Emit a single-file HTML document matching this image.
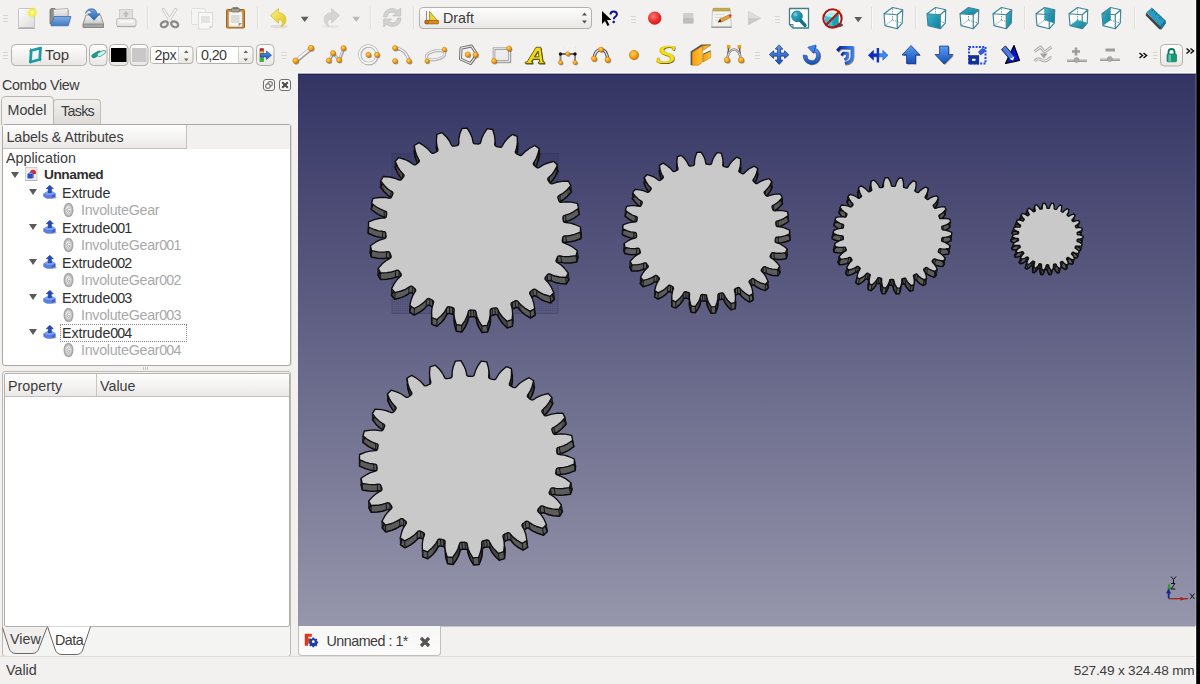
<!DOCTYPE html>
<html>
<head>
<meta charset="utf-8">
<title>FreeCAD</title>
<style>
*{box-sizing:border-box;margin:0;padding:0}
html,body{width:1200px;height:684px;overflow:hidden;background:#f2f1f0}
body{position:relative;font-family:"Liberation Sans",sans-serif;font-size:14px;color:#3c3c3c}
.abs{position:absolute}
.t{position:absolute;white-space:nowrap;line-height:16px;height:16px}
svg{position:absolute;overflow:visible}
#vp{position:absolute;left:298px;top:74px;width:898px;height:552px;background:linear-gradient(#343464 0%,#9696ac 100%)}
#rblack{position:absolute;left:1196px;top:0;width:4px;height:684px;background:#000;border-left:1px solid #333}
#rwhite{position:absolute;left:1195px;top:0;width:1px;height:684px;background:#fdfdfd}
.grip{position:absolute;width:5px;height:11px;background:repeating-linear-gradient(#f2f1f0 0,#f2f1f0 1px,#d4d2cf 1px,#d4d2cf 2px,#fff 2px,#fff 3px,#f2f1f0 3px,#f2f1f0 4px)}
.sep{position:absolute;width:2px;height:22px;border-left:1px solid #d9d6d2;border-right:1px solid #fbfbfa}
.btn{position:absolute;border:1px solid #b7b2ab;border-radius:4px;background:linear-gradient(#fdfdfd,#e8e6e3)}
.gray{color:#a9a9a9}
.tri{position:absolute;width:0;height:0;border-left:4px solid transparent;border-right:4px solid transparent;border-top:6px solid #5a5a5a}
</style>
</head>
<body>
<!-- ===== viewport ===== -->
<div id="vp"></div>
<div class="abs" style="left:298px;top:72px;width:898px;height:1px;background:#fbfbfa"></div>
<div class="abs" style="left:298px;top:73px;width:898px;height:1px;background:#a9a9c0"></div>
<div class="abs" style="left:298px;top:74px;width:898px;height:1px;background:#24245c"></div>
<div class="abs" style="left:298px;top:626px;width:898px;height:1px;background:#c4c4cb"></div>
<div class="abs" style="left:1195px;top:74px;width:1px;height:552px;background:rgba(255,255,255,.13)"></div>
<svg style="left:0;top:0" width="1200" height="684" viewBox="0 0 1200 684">
<defs><pattern id="pg" width="2.2" height="2.2" patternUnits="userSpaceOnUse"><path d="M0 .5H2.200M.5 0V2.200" stroke="#1c1c48" stroke-width=".6" opacity=".26"/></pattern></defs><rect x="392" y="153.500" width="166" height="160" fill="url(#pg)"/><rect x="392" y="153.500" width="166" height="160" fill="none" stroke="#2a2a58" stroke-width=".6" opacity=".5"/>
<path d="M580.5 227l-.1 5.1 .7 6.4 .1-5.2zM562.7 237.8l-.2 1.4 .6 6.3 .2-1.3zM562.5 239.2l-.2 1.3 .6 6.4 .2-1.4zM556.3 259.7l-.3 1.3 .6 6.5 .3-1.3zM529.8 292.5l-.1 1.2 .5 6.6 0-1.2zM512.6 313.7l-.5 5.9 .3 6.7 .6-5.9zM490.2 310l0 1.5 .3 6.7 0-1.5zM490.2 311.5l-.1 .6 .3 6.8 .1-.7zM490.2 313l-.1 2.5 .3 6.8 .1-2.6zM490.1 315.5l-.8 4.2 .2 6.7 .9-4.1zM476.4 314.2l-.1-.8 .2 6.7 .1 .8zM476.1 312.8l-.3-1.5 .2 6.7 .3 1.5zM467.9 313.2l-.2 .8 .2 6.7 .1-.8zM454.6 318.8l-.6-4.2 .1 6.8 .6 4.2zM454.1 311.3l0-.7 .1 6.7 0 .7zM391.2 257l-.2-1.3-.2 6.4 .2 1.3zM371.6 250.7l-1.2-5-.3 6.4 1.2 5zM386.1 236.2l-.2-1.3-.2 6.3 .1 1.4zM385.9 234.9l-.1-1.4-.2 6.3 .1 1.4zM386.7 213.5l-.1-1.3-.2 6.2 .1 1.3zM404.1 175.8l-.3-1.2-.1 6 .2 1.2zM415.3 151.3l-1-5.8-.1 5.9 1 5.9zM437.6 148.5l-.1-.7 0 5.9 .1 .7zM437.2 147l-.5-2.5 0 5.9 .5 2.5zM436.7 144.5l-.3-4.2 0 5.9 .3 4.2zM458.9 141.9l-.1-.9 .1 5.9 .1 .8zM495 139.4l0 2.5 .3 5.9 0-2.6zM495 141.9l-.1 .8 .3 5.9 .1-.8zM494.9 143.4l-.1 1.5 .3 5.9 .1-1.5zM517.4 142.3l-.5 4.2 .4 5.9 .5-4.2zM515.9 149.7l-.1 .7 .4 5.9 .1-.6zM539.2 148.6l-1.4 5.7 .6 6 1.3-5.8zM533.4 163.1l0 1.2 .4 6 .1-1.2zM563.1 216.5l-.2 1.3 .7 6.2 .1-1.2zM563.1 219.1l0 0 .6 6.3 0 0z" fill="#2e2e2e" stroke="#2e2e2e" stroke-width=".6" stroke-linejoin="round"/>
<path d="M563.2 236.6l-.5 1.2 .6 6.4 .5-1.2zM577.4 250.7l-1.4 5 .7 6.4 1.4-5zM557.4 257.2l-.6 1.3 .6 6.4 .6-1.2zM556.8 258.5l-.5 1.2 .6 6.5 .5-1.3zM545.5 277.1l-.6 1.1 .6 6.6 .6-1.2zM511.4 302.9l-.4 1.2 .4 6.7 .4-1.2zM498.7 311.3l-.3-.8 .3 6.7 .3 .8zM498 309.9l-.7-1.4 .4 6.7 .6 1.4zM489.3 319.7l-2.1 5.6 .3 6.8 2-5.7zM478.7 320.6l-1.7-3.9 .2 6.7 1.7 4zM477 316.7l-.6-2.5 .2 6.7 .6 2.5zM476.3 313.4l-.2-.6 .2 6.7 .2 .6zM468.5 311.1l-.4 1.5 .2 6.7 .4-1.5zM468.1 312.6l-.2 .6 .1 6.7 .3-.6zM467.7 314l-.7 2.4 .1 6.8 .8-2.5zM467 316.4l-1.9 3.9 .1 6.7 1.9-3.8zM456.3 324.5l-1.7-5.7 .1 6.8 1.7 5.7zM446 309.2l-.4 .8 .1 6.7 .3-.8zM433.7 302.2l-.3-1.2 0 6.7 .3 1.2zM401.3 274.7l-.5-1.2-.2 6.6 .5 1.2zM380.6 273l-2.4-4.6-.3 6.5 2.5 4.6zM391 255.7l-.5-1.3-.2 6.5 .5 1.2zM390.5 254.4l-.5-1.3-.2 6.5 .5 1.3zM385.8 233.5l-.4-1.2-.3 6.3 .5 1.2zM393 193l-.6-1.1-.2 6.2 .6 1zM397.7 166.8l-2.5-5.5-.2 6 2.5 5.5zM418.5 159l-.2-.6-.1 6 .3 .5zM417.8 157.7l-1.1-2.3-.1 5.9 1.1 2.3zM416.7 155.4l-1.4-4.1-.1 6 1.4 4zM438 149.9l-.4-1.4 0 5.9 .4 1.4zM437.5 147.8l-.3-.8 0 5.9 .3 .8zM516.9 146.5l-.7 2.5 .4 5.9 .7-2.5zM516.2 149l-.3 .7 .4 6 .3-.8zM515.8 150.4l-.5 1.4 .4 5.9 .5-1.4zM537.8 154.3l-1.5 4 .5 6 1.6-4zM534.5 161.2l-.3 .6 .5 6 .3-.6zM557.4 165.3l-2.8 5.3 .6 6 2.8-5.3zM548 178.1l-.3 1.2 .6 6 .3-1.1z" fill="#3a3a3a" stroke="#3a3a3a" stroke-width=".6" stroke-linejoin="round"/>
<path d="M558.1 256.2l-.7 1 .6 6.5 .8-1.1zM568.3 273l-2.6 4.5 .6 6.6 2.7-4.5zM547.2 274.9l-.8 1.1 .5 6.5 .9-1.1zM546.4 276l-.9 1.1 .6 6.5 .8-1.1zM553.8 292.7l-3.7 3.7 .6 6.7 3.7-3.8zM530.6 291.5l-.8 1 .4 6.6 .9-1zM521.4 305.3l-1.8-1.9 .4 6.7 1.8 1.9zM519.6 303.4l-.5-.7 .4 6.7 .5 .7zM518.6 302.3l-1-1.2 .4 6.6 1 1.2zM506.9 321.3l-4.4-4.3 .4 6.7 4.3 4.3zM502.5 317l-2.6-3.5 .4 6.7 2.6 3.5zM499.9 313.5l-1.2-2.2 .3 6.7 1.3 2.2zM498.4 310.5l-.4-.6 .3 6.7 .4 .6zM490.8 309l-.6 1 .3 6.7 .6-1zM481.8 325.8l-3.1-5.2 .2 6.8 3.1 5.2zM475.8 311.3l-.8-.9 .2 6.7 .8 .9zM465.1 320.3l-3.4 5 .1 6.8 3.4-5.1zM454.2 309.1l-.6-1 .1 6.7 .6 1zM447.1 307.3l-.7 1.4 0 6.7 .8-1.4zM446.4 308.7l-.4 .5 0 6.7 .4-.5zM445.6 310l-1.3 2.1 0 6.8 1.4-2.2zM444.3 312.1l-2.8 3.4 0 6.7 2.8-3.3zM427.3 298.9l-1 1.1-.1 6.7 1.1-1.2zM425.8 300.4l-.6 .7 0 6.7 .5-.7zM415.6 289.7l-.7-1-.1 6.6 .8 1zM395.1 292.6l-3.5-3.9-.2 6.6 3.5 4zM400.8 273.5l-.8-1.1-.2 6.5 .8 1.2zM400 272.4l-.8-1.2-.2 6.6 .8 1.1zM390 253.1l-.7-1.1-.2 6.5 .7 1.1zM386.6 212.2l-.8-.9-.2 6.2 .8 .9zM384.5 185.7l-3.8-4.7-.3 6 3.8 4.8zM403.8 174.6l-1.1-1.1-.1 6 1.1 1.1zM402.7 173.5l-.4-.5-.1 6 .4 .5zM401.7 172.4l-1.7-2-.2 6 1.7 2zM400 170.4l-2.3-3.6-.2 6 2.3 3.6zM419.3 160.3l-.8-1.3 0 5.9 .7 1.4zM418.3 158.4l-.5-.7-.1 5.9 .5 .8zM536.3 158.3l-1.3 2.3 .5 5.9 1.3-2.2zM535 160.6l-.5 .6 .5 6 .5-.7zM534.2 161.8l-.8 1.3 .5 6 .8-1.3zM554.6 170.6l-2.5 3.5 .6 6.1 2.5-3.6zM552.1 174.1l-1.8 1.9 .6 6.1 1.8-1.9zM549.6 176.6l-.4 .5 .5 6 .5-.5zM570.8 185.6l-4.1 4.6 .7 6.1 4.1-4.6zM558.4 196l-.6 1 .6 6.2 .6-1.1zM563.9 215.6l-.8 .9 .6 6.3 .9-.9z" fill="#494949" stroke="#494949" stroke-width=".6" stroke-linejoin="round"/>
<path d="M580.4 232.1l-5.9 2.3 .7 6.3 5.9-2.2zM574.5 234.4l-4.4 1.1 .7 6.3 4.4-1.1zM570.1 235.5l-2.7 .3 .7 6.3 2.7-.3zM567.4 235.8l-.9 0 .7 6.3 .9 0zM566.5 235.8l-.7 .1 .7 6.3 .7-.1zM565.8 235.9l-1.6 .1 .7 6.3 1.6-.1zM564.2 236l-1 .6 .6 6.4 1.1-.7zM576 255.7l-6.3 .8 .7 6.5 6.3-.9zM569.7 256.5l-4.5 .1 .6 6.4 4.6 0zM565.2 256.6l-2.7-.3 .6 6.4 2.7 .3zM562.5 256.3l-.9-.2 .6 6.4 .9 .2zM561.6 256.1l-.7-.1 .7 6.5 .6 0zM560.9 256l-1.6-.2 .7 6.4 1.6 .3zM559.3 255.8l-1.2 .4 .7 6.4 1.2-.4zM565.7 277.5l-6.3-.5 .6 6.5 6.3 .6zM559.4 277l-4.4-1 .6 6.5 4.4 1zM555 276l-2.6-.9 .6 6.5 2.6 .9zM552.4 275.1l-.8-.4 .6 6.5 .8 .4zM551.6 274.7l-.6-.2 .6 6.5 .6 .2zM551 274.5l-1.5-.6 .6 6.5 1.5 .6zM549.5 273.9l-1.3 .1 .6 6.5 1.3-.1zM548.2 274l-1 .9 .6 6.5 1-.9zM550.1 296.4l-6-1.9 .5 6.6 6.1 2zM544.1 294.5l-4-1.9 .5 6.6 4 1.9zM540.1 292.6l-2.3-1.5 .6 6.6 2.2 1.5zM537.8 291.1l-.6-.6 .5 6.7 .7 .5zM537.2 290.5l-.6-.3 .5 6.6 .6 .4zM536.6 290.2l-1.3-.9 .5 6.6 1.3 .9zM535.3 289.3l-1.2-.2 .5 6.6 1.2 .2zM534.1 289.1l-1.3 .6 .5 6.6 1.3-.6zM532.8 289.7l-1.1 .9 .5 6.6 1.1-.9zM531.7 290.6l-1.1 .9 .5 6.6 1.1-.9zM534.7 308.5l-4.6 2.8 .5 6.7 4.6-2.8zM530.1 311.3l-5.3-3.2 .4 6.7 5.4 3.2zM524.8 308.1l-3.4-2.8 .4 6.7 3.4 2.8zM519.1 302.7l-.5-.4 .4 6.6 .5 .5zM517.6 301.1l-1.2-.5 .4 6.7 1.2 .4zM516.4 300.6l-1.3 .3 .4 6.7 1.3-.3zM515.1 300.9l-1.3 .7 .4 6.6 1.3-.6zM513.8 301.6l-1.3 .6 .3 6.6 1.4-.6zM512.5 302.2l-1.1 .7 .4 6.7 1-.8zM512.1 319.6l-5.2 1.7 .3 6.7 5.2-1.7zM497.3 308.5l-1-.6 .3 6.7 1.1 .6zM496.3 307.9l-1.4 0 .3 6.7 1.4 0zM494.9 307.9l-1.4 .3 .3 6.7 1.4-.3zM493.5 308.2l-1.4 .3 .3 6.7 1.4-.3zM492.1 308.5l-1.3 .5 .3 6.7 1.3-.5zM487.2 325.3l-5.4 .5 .2 6.8 5.5-.5zM475 310.4l-1.4-.3 .2 6.7 1.4 .3zM473.6 310.1l-1.4 0 .2 6.7 1.4 0zM472.2 310.1l-1.5-.1 .2 6.7 1.5 .1zM470.7 310l-1.3 .3 .1 6.7 1.4-.3zM469.4 310.3l-.9 .8 .2 6.7 .8-.8zM461.7 325.3l-5.4-.8 .1 6.8 5.4 .8zM453.6 308.1l-1.2-.6 .1 6.7 1.2 .6zM452.4 307.5l-1.4-.4 0 6.7 1.5 .4zM451 307.1l-1.4-.3 0 6.7 1.4 .3zM449.6 306.8l-1.4-.1 0 6.7 1.4 .1zM448.2 306.7l-1.1 .6 .1 6.7 1-.6zM441.5 315.5l-4.6 4.1 0 6.7 4.6-4.1zM436.9 319.6l-5.1-2 0 6.8 5.1 1.9zM433.4 301l-1-.8 0 6.7 1 .8zM432.4 300.2l-1.3-.7 0 6.7 1.3 .7zM431.1 299.5l-1.3-.6 0 6.6 1.3 .7zM429.8 298.9l-1.3-.4 0 6.6 1.3 .4zM428.5 298.5l-1.2 .4 0 6.6 1.2-.4zM426.3 300l-.5 .4-.1 6.7 .5-.4zM425.2 301.1l-1.9 1.8 0 6.7 1.9-1.8zM423.3 302.9l-3.6 2.6 0 6.7 3.6-2.6zM419.7 305.5l-5.4 3-.1 6.7 5.5-3zM414.3 308.5l-4.5-3.1-.1 6.7 4.5 3.1zM414.9 288.7l-1.1-1-.1 6.6 1.1 1zM413.8 287.7l-1.1-.9-.1 6.6 1.1 .9zM412.7 286.8l-1.2-.7-.1 6.6 1.2 .7zM411.5 286.1l-1.2 .1-.1 6.6 1.2-.1zM410.3 286.2l-1.3 .9-.2 6.6 1.4-.9zM409 287.1l-.6 .3-.2 6.6 .6-.3zM408.4 287.4l-.7 .5-.2 6.6 .7-.5zM407.7 287.9l-2.3 1.4-.2 6.6 2.3-1.4zM405.4 289.3l-4.2 1.7-.1 6.6 4.1-1.7zM401.2 291l-6.1 1.6-.2 6.7 6.2-1.7zM399.2 271.2l-1-.9-.2 6.6 1 .9zM398.2 270.3l-1.2-.1-.2 6.5 1.2 .2zM397 270.2l-1.5 .5-.2 6.5 1.5-.5zM395.5 270.7l-.7 .2-.2 6.5 .7-.2zM394.8 270.9l-.8 .3-.2 6.5 .8-.3zM394 271.2l-2.6 .8-.2 6.5 2.6-.8zM391.4 272l-4.4 .7-.3 6.6 4.5-.8zM387 272.7l-6.4 .3-.2 6.5 6.3-.2zM389.3 252l-1.1-.4-.3 6.4 1.2 .5zM388.2 251.6l-1.6 .2-.3 6.4 1.6-.2zM386.6 251.8l-.7 0-.3 6.4 .7 0zM385.9 251.8l-.9 .1-.2 6.5 .8-.2zM385 251.9l-2.7 .2-.3 6.4 2.8-.1zM382.3 252.1l-4.5-.2-.3 6.4 4.5 .2zM377.8 251.9l-6.2-1.2-.3 6.4 6.2 1.2zM385.4 232.3l-1-.7-.3 6.3 1 .7zM384.4 231.6l-1.6-.2-.3 6.3 1.6 .2zM382.8 231.4l-.7-.2-.2 6.4 .6 .1zM382.1 231.2l-.9 0-.3 6.3 1 .1zM381.2 231.2l-2.7-.4-.2 6.3 2.6 .4zM378.5 230.8l-4.3-1.3-.3 6.3 4.4 1.3zM374.2 229.5l-5.7-2.5-.3 6.3 5.7 2.5zM385.8 211.3l-1.5-.5-.2 6.2 1.5 .5zM384.3 210.8l-.6-.3-.2 6.2 .6 .3zM383.7 210.5l-.9-.3-.2 6.2 .9 .3zM382.8 210.2l-2.4-1-.3 6.2 2.5 1zM380.4 209.2l-3.9-2.2-.3 6.2 3.9 2.2zM376.5 207l-4.9-3.7-.3 6.2 4.9 3.7zM392.4 191.9l-1.3-.8-.2 6.1 1.3 .9zM391.1 191.1l-.5-.4-.2 6.1 .5 .4zM390.6 190.7l-.8-.5-.2 6.1 .8 .5zM389.8 190.2l-2.2-1.5-.2 6.1 2.2 1.5zM387.6 188.7l-3.1-3-.3 6.1 3.2 3zM402.3 173l-.6-.6-.2 6 .7 .6zM550.3 176l-.7 .6 .6 6 .7-.5zM549.2 177.1l-1.2 1 .6 6.1 1.1-1.1zM566.7 190.2l-3.3 2.8 .6 6.1 3.4-2.8zM563.4 193l-2.3 1.4 .7 6.2 2.2-1.5zM561.1 194.4l-.8 .4 .7 6.1 .8-.3zM560.3 194.8l-.5 .4 .6 6.1 .6-.4zM559.8 195.2l-1.4 .8 .6 6.1 1.4-.8zM578.6 208.3l-5.1 3.5 .7 6.3 5.1-3.6zM573.5 211.8l-4 2 .7 6.3 4-2zM569.5 213.8l-2.5 .9 .6 6.3 2.6-.9zM567 214.7l-.9 .2 .6 6.3 .9-.2zM566.1 214.9l-.6 .3 .6 6.2 .6-.2zM565.5 215.2l-1.6 .4 .7 6.3 1.5-.5z" fill="#5c5c5c" stroke="#5c5c5c" stroke-width=".6" stroke-linejoin="round"/>
<path d="M563.7 225.4l.1 1.4 .5 1.2 1 .7 1.6 .2 .6 .1 1 .1 2.6 .4 4.4 1.3 5.7 2.5-.1 5.2-5.9 2.2-4.4 1.1-2.7 .3-.9 0-.7 .1-1.6 .1-1.1 .7-.5 1.2-.2 1.3-.2 1.4 .1 1.3 .8 .9 1.5 .5 .6 .3 .9 .3 2.5 1 3.9 2.2 4.9 3.7-1.4 5-6.3 .9-4.6 0-2.7-.3-.9-.2-.6 0-1.6-.3-1.2 .4-.8 1.1-.6 1.2-.5 1.3-.3 1.3 .6 1 1.3 .9 .5 .4 .8 .5 2.2 1.5 3.2 3 3.8 4.8-2.7 4.5-6.3-.6-4.4-1-2.6-.9-.8-.4-.6-.2-1.5-.6-1.3 .1-1 .9-.9 1.1-.8 1.1-.6 1.2 .2 1.2 1.1 1.1 .4 .5 .7 .6 1.7 2 2.3 3.6 2.5 5.5-3.7 3.8-6.1-2-4-1.9-2.2-1.5-.7-.5-.6-.4-1.3-.9-1.2-.2-1.3 .6-1.1 .9-1.1 .9-.9 1 0 1.2 .7 1.4 .3 .5 .5 .8 1.1 2.3 1.4 4 1 5.9-4.6 2.8-5.4-3.2-3.4-2.8-1.8-1.9-.5-.7-.5-.5-1-1.2-1.2-.4-1.3 .3-1.3 .6-1.4 .6-1 .8-.4 1.2 .4 1.4 .1 .7 .3 .8 .5 2.5 .3 4.2-.6 5.9-5.2 1.7-4.3-4.3-2.6-3.5-1.3-2.2-.3-.8-.4-.6-.6-1.4-1.1-.6-1.4 0-1.4 .3-1.4 .3-1.3 .5-.6 1 0 1.5-.1 .7 .1 .8-.1 2.6-.9 4.1-2 5.7-5.5 .5-3.1-5.2-1.7-4-.6-2.5-.1-.8-.2-.6-.3-1.5-.8-.9-1.4-.3-1.4 0-1.5-.1-1.4 .3-.8 .8-.4 1.5-.3 .6-.1 .8-.8 2.5-1.9 3.8-3.4 5.1-5.4-.8-1.7-5.7-.6-4.2 0-2.6 .1-.8 0-.7 .1-1.5-.6-1-1.2-.6-1.5-.4-1.4-.3-1.4-.1-1 .6-.8 1.4-.4 .5-.3 .8-1.4 2.2-2.8 3.3-4.6 4.1-5.1-1.9-.2-6 .5-4.2 .7-2.5 .3-.8 .1-.6 .5-1.4-.3-1.2-1-.8-1.3-.7-1.3-.7-1.3-.4-1.2 .4-1.1 1.2-.5 .4-.5 .7-1.9 1.8-3.6 2.6-5.5 3-4.5-3.1 1.3-5.8 1.6-4 1.3-2.2 .5-.7 .3-.6 .8-1.3 .1-1.2-.8-1-1.1-1-1.1-.9-1.2-.7-1.2 .1-1.4 .9-.6 .3-.7 .5-2.3 1.4-4.1 1.7-6.2 1.7-3.5-4 2.8-5.3 2.5-3.6 1.8-1.9 .7-.5 .5-.5 1.1-1.1 .3-1.1-.5-1.2-.8-1.2-.8-1.1-1-.9-1.2-.2-1.5 .5-.7 .2-.8 .3-2.6 .8-4.5 .8-6.3 .2-2.5-4.6 4.1-4.6 3.4-2.8 2.2-1.5 .8-.3 .6-.4 1.4-.8 .6-1.1-.2-1.3-.5-1.2-.5-1.3-.7-1.1-1.2-.5-1.6 .2-.7 0-.8 .2-2.8 .1-4.5-.2-6.2-1.2-1.2-5 5.1-3.6 4-2 2.6-.9 .9-.2 .6-.2 1.5-.5 .9-.9 .1-1.2-.1-1.4-.1-1.4-.5-1.2-1-.7-1.6-.2-.6-.1-1-.1-2.6-.4-4.4-1.3-5.7-2.5 .1-5.2 5.9-2.2 4.4-1.1 2.7-.3 .9 0 .7-.1 1.6-.1 1.1-.7 .5-1.2 .2-1.3 .2-1.4-.1-1.3-.8-.9-1.5-.5-.6-.3-.9-.3-2.5-1-3.9-2.2-4.9-3.7 1.4-5 6.3-.9 4.6 0 2.7 .3 .9 .2 .6 0 1.6 .3 1.2-.4 .8-1.1 .6-1.2 .5-1.3 .3-1.3-.6-1-1.3-.9-.5-.4-.8-.5-2.2-1.5-3.2-3-3.8-4.8 2.7-4.5 6.3 .6 4.4 1 2.6 .9 .8 .4 .6 .2 1.5 .6 1.3-.1 1-.9 .9-1.1 .8-1.1 .6-1.2-.2-1.2-1.1-1.1-.4-.5-.7-.6-1.7-2-2.3-3.6-2.5-5.5 3.7-3.8 6.1 2 4 1.9 2.2 1.5 .7 .5 .6 .4 1.3 .9 1.2 .2 1.3-.6 1.1-.9 1.1-.9 .9-1 0-1.2-.7-1.4-.3-.5-.5-.8-1.1-2.3-1.4-4-1-5.9 4.6-2.8 5.4 3.2 3.4 2.8 1.8 1.9 .5 .7 .5 .5 1 1.2 1.2 .4 1.3-.3 1.3-.6 1.4-.6 1-.8 .4-1.2-.4-1.4-.1-.7-.3-.8-.5-2.5-.3-4.2 .6-5.9 5.2-1.7 4.3 4.3 2.6 3.5 1.3 2.2 .3 .8 .4 .6 .6 1.4 1.1 .6 1.4 0 1.4-.3 1.4-.3 1.3-.5 .6-1 0-1.5 .1-.7-.1-.8 .1-2.6 .9-4.1 2-5.7 5.5-.5 3.1 5.2 1.7 4 .6 2.5 .1 .8 .2 .6 .3 1.5 .8 .9 1.4 .3 1.4 0 1.5 .1 1.4-.3 .8-.8 .4-1.5 .3-.6 .1-.8 .8-2.5 1.9-3.8 3.4-5.1 5.4 .8 1.7 5.7 .6 4.2 0 2.6-.1 .8 0 .7-.1 1.5 .6 1 1.2 .6 1.5 .4 1.4 .3 1.4 .1 1-.6 .8-1.4 .4-.5 .3-.8 1.4-2.2 2.8-3.3 4.6-4.1 5.1 1.9 .2 6-.5 4.2-.7 2.5-.3 .8-.1 .6-.5 1.4 .3 1.2 1 .8 1.3 .7 1.3 .7 1.3 .4 1.2-.4 1.1-1.2 .5-.4 .5-.7 1.9-1.8 3.6-2.6 5.5-3 4.5 3.1-1.3 5.8-1.6 4-1.3 2.2-.5 .7-.3 .6-.8 1.3-.1 1.2 .8 1 1.1 1 1.1 .9 1.2 .7 1.2-.1 1.4-.9 .6-.3 .7-.5 2.3-1.4 4.1-1.7 6.2-1.7 3.5 4-2.8 5.3-2.5 3.6-1.8 1.9-.7 .5-.5 .5-1.1 1.1-.3 1.1 .5 1.2 .8 1.2 .8 1.1 1 .9 1.2 .2 1.5-.5 .7-.2 .8-.3 2.6-.8 4.5-.8 6.3-.2 2.5 4.6-4.1 4.6-3.4 2.8-2.2 1.5-.8 .3-.6 .4-1.4 .8-.6 1.1 .2 1.3 .5 1.2 .5 1.3 .7 1.1 1.2 .5 1.6-.2 .7 0 .8-.2 2.8-.1 4.5 .2 6.2 1.2 1.2 5-5.1 3.6-4 2-2.6 .9-.9 .2-.6 .2-1.5 .5-.9 .9-.1 1.2 .1 1.4z" fill="none" stroke="#0c0c0c" stroke-width="1.5" stroke-linejoin="round"/>
<path d="M563.2 220.5L563.8 226.8M566.2 222.6L566.9 228.9M580.5 227L581.2 233.3M580.4 232.1L581.1 238.5M565.8 235.9L566.5 242.2M562.7 237.8L563.3 244.2M562.3 240.5L562.9 246.9M564.7 243.2L565.3 249.6M577.4 250.7L578.1 257.1M576 255.7L576.7 262.1M560.9 256L561.6 262.5M557.4 257.2L558 263.7M556.3 259.7L556.9 266.2M557.9 262.9L558.5 269.4M568.3 273L569 279.6M565.7 277.5L566.3 284.1M551 274.5L551.6 281M547.2 274.9L547.8 281.4M545.5 277.1L546.1 283.6M546.3 280.5L546.8 287.1M553.8 292.7L554.4 299.3M550.1 296.4L550.7 303.1M536.6 290.2L537.1 296.8M532.8 289.7L533.3 296.3M530.6 291.5L531.1 298.1M530.5 295L530.9 301.7M534.7 308.5L535.2 315.2M530.1 311.3L530.6 318M518.6 302.3L519 308.9M515.1 300.9L515.5 307.6M512.5 302.2L512.8 308.8M511.4 305.5L511.8 312.2M512.1 319.6L512.4 326.3M506.9 321.3L507.2 328M498 309.9L498.3 316.6M494.9 307.9L495.2 314.6M492.1 308.5L492.4 315.2M490.2 311.5L490.5 318.2M487.2 325.3L487.5 332.1M481.8 325.8L482 332.6M476.1 312.8L476.3 319.5M473.6 310.1L473.8 316.8M470.7 310L470.9 316.7M468.1 312.6L468.3 319.3M461.7 325.3L461.8 332.1M456.3 324.5L456.4 331.3M454.1 310.6L454.2 317.3M452.4 307.5L452.5 314.2M449.6 306.8L449.6 313.5M446.4 308.7L446.4 315.4M436.9 319.6L436.9 326.3M431.8 317.6L431.8 324.4M433.2 303.6L433.2 310.3M432.4 300.2L432.4 306.9M429.8 298.9L429.8 305.5M426.3 300L426.2 306.7M414.3 308.5L414.2 315.2M409.8 305.4L409.7 312.1M414.8 292.2L414.7 298.8M414.9 288.7L414.8 295.3M412.7 286.8L412.6 293.4M409 287.1L408.8 293.7M395.1 292.6L394.9 299.3M391.6 288.7L391.4 295.3M399.8 276.9L399.7 283.5M400.8 273.5L400.6 280.1M399.2 271.2L399 277.8M395.5 270.7L395.3 277.2M380.6 273L380.4 279.5M378.2 268.4L377.9 274.9M389.2 258.8L389 265.3M391 255.7L390.8 262.1M390 253.1L389.8 259.6M386.6 251.8L386.3 258.2M371.6 250.7L371.3 257.1M370.4 245.7L370.1 252.1M383.5 238.8L383.3 245.2M386.1 236.2L385.8 242.6M385.8 233.5L385.6 239.8M382.8 231.4L382.5 237.7M368.5 227L368.2 233.3M368.6 221.9L368.3 228.1M383.2 218.1L382.9 224.4M386.3 216.2L386.1 222.4M386.7 213.5L386.5 219.7M384.3 210.8L384.1 217M371.6 203.3L371.3 209.5M373 198.3L372.7 204.5M388.1 198L387.8 204.1M391.6 196.8L391.4 202.9M392.7 194.3L392.5 200.4M391.1 191.1L390.9 197.2M380.7 181L380.4 187M383.3 176.5L383.1 182.5M398 179.5L397.8 185.6M401.8 179.1L401.6 185.2M403.5 176.9L403.3 183M402.7 173.5L402.6 179.5M395.2 161.3L395 167.3M398.9 157.6L398.7 163.5M412.4 163.8L412.3 169.8M416.2 164.3L416.1 170.3M418.4 162.5L418.3 168.5M418.5 159L418.5 164.9M414.3 145.5L414.2 151.4M418.9 142.7L418.8 148.6M430.4 151.7L430.4 157.7M433.9 153.1L433.9 159M436.5 151.8L436.6 157.8M437.6 148.5L437.6 154.4M436.9 134.4L437 140.3M442.1 132.7L442.2 138.6M451 144.1L451.1 150M454.1 146.1L454.2 152M456.9 145.5L457 151.4M458.8 142.5L458.9 148.4M461.8 128.7L461.9 134.5M467.2 128.2L467.4 134M472.9 141.2L473.1 147.1M475.4 143.9L475.6 149.8M478.3 144L478.5 149.9M480.9 141.4L481.1 147.3M487.3 128.7L487.6 134.5M492.7 129.5L493 135.3M494.9 143.4L495.2 149.3M496.6 146.5L496.9 152.4M499.4 147.2L499.8 153.1M502.6 145.3L503 151.2M512.1 134.4L512.5 140.3M517.2 136.4L517.6 142.2M515.8 150.4L516.2 156.3M516.6 153.8L517 159.7M519.2 155.1L519.6 161.1M522.7 154L523.2 159.9M534.7 145.5L535.2 151.4M539.2 148.6L539.7 154.5M534.2 161.8L534.7 167.8M534.1 165.3L534.6 171.3M536.3 167.2L536.8 173.2M540 166.9L540.6 172.9M553.9 161.4L554.5 167.3M557.4 165.3L558 171.3M549.2 177.1L549.7 183.1M548.2 180.5L548.8 186.5M549.8 182.8L550.4 188.8M553.5 183.3L554.1 189.4M568.4 181L569 187.1M570.8 185.6L571.5 191.7M559.8 195.2L560.4 201.3M558 198.3L558.6 204.5M559 200.9L559.6 207M562.4 202.2L563.1 208.4M577.4 203.3L578.1 209.5M578.6 208.3L579.3 214.5M565.5 215.2L566.1 221.4M562.9 217.8L563.6 224" fill="none" stroke="#141414" stroke-width="1"/>
<path d="M563.1 219.1l.1 1.4 .4 1.2 1 .7 1.6 .2 .7 .2 .9 0 2.7 .4 4.3 1.3 5.7 2.5-.1 5.1-5.9 2.3-4.4 1.1-2.7 .3-.9 0-.7 .1-1.6 .1-1 .6-.5 1.2-.2 1.4-.2 1.3 .1 1.3 .8 .9 1.5 .5 .6 .3 .9 .3 2.4 1 3.9 2.2 4.9 3.7-1.4 5-6.3 .8-4.5 .1-2.7-.3-.9-.2-.7-.1-1.6-.2-1.2 .4-.7 1-.6 1.3-.5 1.2-.3 1.3 .6 1.1 1.3 .8 .5 .4 .8 .5 2.2 1.5 3.1 3 3.8 4.7-2.6 4.5-6.3-.5-4.4-1-2.6-.9-.8-.4-.6-.2-1.5-.6-1.3 .1-1 .9-.8 1.1-.9 1.1-.6 1.1 .3 1.2 1.1 1.1 .4 .5 .6 .6 1.7 2 2.3 3.6 2.5 5.5-3.7 3.7-6-1.9-4-1.9-2.3-1.5-.6-.6-.6-.3-1.3-.9-1.2-.2-1.3 .6-1.1 .9-1.1 .9-.8 1-.1 1.2 .8 1.3 .2 .6 .5 .7 1.1 2.3 1.4 4.1 1 5.8-4.6 2.8-5.3-3.2-3.4-2.8-1.8-1.9-.5-.7-.5-.4-1-1.2-1.2-.5-1.3 .3-1.3 .7-1.3 .6-1.1 .7-.4 1.2 .4 1.4 .1 .7 .3 .8 .5 2.5 .3 4.2-.5 5.9-5.2 1.7-4.4-4.3-2.6-3.5-1.2-2.2-.3-.8-.4-.6-.7-1.4-1-.6-1.4 0-1.4 .3-1.4 .3-1.3 .5-.6 1 0 1.5-.1 .6 .1 .9-.1 2.5-.8 4.2-2.1 5.6-5.4 .5-3.1-5.2-1.7-3.9-.6-2.5-.1-.8-.2-.6-.3-1.5-.8-.9-1.4-.3-1.4 0-1.5-.1-1.3 .3-.9 .8-.4 1.5-.2 .6-.2 .8-.7 2.4-1.9 3.9-3.4 5-5.4-.8-1.7-5.7-.6-4.2 0-2.5 .1-.8 0-.7 .1-1.5-.6-1-1.2-.6-1.4-.4-1.4-.3-1.4-.1-1.1 .6-.7 1.4-.4 .5-.4 .8-1.3 2.1-2.8 3.4-4.6 4.1-5.1-2-.2-5.9 .5-4.2 .7-2.5 .3-.7 .1-.7 .5-1.4-.3-1.2-1-.8-1.3-.7-1.3-.6-1.3-.4-1.2 .4-1 1.1-.5 .4-.6 .7-1.9 1.8-3.6 2.6-5.4 3-4.5-3.1 1.4-5.7 1.5-4 1.3-2.3 .5-.6 .3-.6 .8-1.3 0-1.2-.7-1-1.1-1-1.1-.9-1.2-.7-1.2 .1-1.3 .9-.6 .3-.7 .5-2.3 1.4-4.2 1.7-6.1 1.6-3.5-3.9 2.8-5.3 2.5-3.5 1.8-1.9 .7-.6 .4-.5 1.2-1 .3-1.2-.5-1.2-.8-1.1-.8-1.2-1-.9-1.2-.1-1.5 .5-.7 .2-.8 .3-2.6 .8-4.4 .7-6.4 .3-2.4-4.6 4.1-4.6 3.3-2.8 2.3-1.4 .8-.4 .5-.4 1.4-.8 .6-1-.2-1.3-.5-1.3-.5-1.3-.7-1.1-1.1-.4-1.6 .2-.7 0-.9 .1-2.7 .2-4.5-.2-6.2-1.2-1.2-5 5.1-3.5 4-2 2.5-.9 .9-.2 .6-.3 1.6-.4 .8-.9 .2-1.3-.2-1.3-.1-1.4-.4-1.2-1-.7-1.6-.2-.7-.2-.9 0-2.7-.4-4.3-1.3-5.7-2.5 .1-5.1 5.9-2.3 4.4-1.1 2.7-.3 .9 0 .7-.1 1.6-.1 1-.6 .5-1.2 .2-1.4 .2-1.3-.1-1.3-.8-.9-1.5-.5-.6-.3-.9-.3-2.4-1-3.9-2.2-4.9-3.7 1.4-5 6.3-.8 4.5-.1 2.7 .3 .9 .2 .7 .1 1.6 .2 1.2-.4 .7-1 .6-1.3 .5-1.2 .3-1.3-.6-1.1-1.3-.8-.5-.4-.8-.5-2.2-1.5-3.1-3-3.8-4.7 2.6-4.5 6.3 .5 4.4 1 2.6 .9 .8 .4 .6 .2 1.5 .6 1.3-.1 1-.9 .8-1.1 .9-1.1 .6-1.1-.3-1.2-1.1-1.1-.4-.5-.6-.6-1.7-2-2.3-3.6-2.5-5.5 3.7-3.7 6 1.9 4 1.9 2.3 1.5 .6 .6 .6 .3 1.3 .9 1.2 .2 1.3-.6 1.1-.9 1.1-.9 .8-1 .1-1.2-.8-1.3-.2-.6-.5-.7-1.1-2.3-1.4-4.1-1-5.8 4.6-2.8 5.3 3.2 3.4 2.8 1.8 1.9 .5 .7 .5 .4 1 1.2 1.2 .5 1.3-.3 1.3-.7 1.3-.6 1.1-.7 .4-1.2-.4-1.4-.1-.7-.3-.8-.5-2.5-.3-4.2 .5-5.9 5.2-1.7 4.4 4.3 2.6 3.5 1.2 2.2 .3 .8 .4 .6 .7 1.4 1 .6 1.4 0 1.4-.3 1.4-.3 1.3-.5 .6-1 0-1.5 .1-.6-.1-.9 .1-2.5 .8-4.2 2.1-5.6 5.4-.5 3.1 5.2 1.7 3.9 .6 2.5 .1 .8 .2 .6 .3 1.5 .8 .9 1.4 .3 1.4 0 1.5 .1 1.3-.3 .9-.8 .4-1.5 .2-.6 .2-.8 .7-2.4 1.9-3.9 3.4-5 5.4 .8 1.7 5.7 .6 4.2 0 2.5-.1 .8 0 .7-.1 1.5 .6 1 1.2 .6 1.4 .4 1.4 .3 1.4 .1 1.1-.6 .7-1.4 .4-.5 .4-.8 1.3-2.1 2.8-3.4 4.6-4.1 5.1 2 .2 5.9-.5 4.2-.7 2.5-.3 .7-.1 .7-.5 1.4 .3 1.2 1 .8 1.3 .7 1.3 .6 1.3 .4 1.2-.4 1-1.1 .5-.4 .6-.7 1.9-1.8 3.6-2.6 5.4-3 4.5 3.1-1.4 5.7-1.5 4-1.3 2.3-.5 .6-.3 .6-.8 1.3 0 1.2 .7 1 1.1 1 1.1 .9 1.2 .7 1.2-.1 1.3-.9 .6-.3 .7-.5 2.3-1.4 4.2-1.7 6.1-1.6 3.5 3.9-2.8 5.3-2.5 3.5-1.8 1.9-.7 .6-.4 .5-1.2 1-.3 1.2 .5 1.2 .8 1.1 .8 1.2 1 .9 1.2 .1 1.5-.5 .7-.2 .8-.3 2.6-.8 4.4-.7 6.4-.3 2.4 4.6-4.1 4.6-3.3 2.8-2.3 1.4-.8 .4-.5 .4-1.4 .8-.6 1 .2 1.3 .5 1.3 .5 1.3 .7 1.1 1.1 .4 1.6-.2 .7 0 .9-.1 2.7-.2 4.5 .2 6.2 1.2 1.2 5-5.1 3.5-4 2-2.5 .9-.9 .2-.6 .3-1.6 .4-.8 .9-.2 1.3 .2 1.3z" fill="#c9c9c9" stroke="#0e0e0e" stroke-width="1.35" stroke-linejoin="round"/>
<path d="M789.6 230.2l-.2 4 .5 6 .1-4zM775.5 238.5l-.2 1.1 .4 6 .2-1zM775.3 239.6l-.1 1.1 .3 6 .2-1.1zM770.3 255.7l-.2 1 .3 6.1 .2-1zM749.2 281.2l-.1 .9 .3 6.2 0-.9zM735.5 297.7l-.4 4.6 .1 6.3 .5-4.6zM717.9 295.8l0 .5 0 6.3 .1-.5zM717.9 297l-.1 1.9 .1 6.4 .1-2zM717.8 298.9l-.7 3.3 .1 6.4 .7-3.3zM707 297.8l0-.6 0 6.3 0 .7zM706.8 296.7l-.2-1.2 0 6.4 .2 1.1zM700.4 297l-.2 .6 0 6.4 .1-.7zM689.8 301.3l-.4-3.3-.1 6.4 .5 3.3zM689.5 295.4l0-.5-.1 6.3 .1 .5zM671.9 300.2l-.1-4.6-.1 6.3 .1 4.7zM673.6 288.1l-.3-.9-.1 6.3 .2 .9zM640.4 252.5l-.1-1-.3 6.1 .1 1zM625 247.4l-.8-3.9-.4 6 .8 4zM636.6 236.1l-.1-1-.4 6 .1 1.1zM636.5 235.1l-.1-1.1-.4 6 .1 1.1zM637.2 218.3l0-1-.4 6 .1 1zM651.2 188.9l-.2-.9-.3 5.8 .2 .9zM660.2 169.9l-.8-4.6-.2 5.7 .8 4.6zM677.7 167.7l0-.5-.2 5.7 .1 .5zM677.4 166.6l-.3-1.9-.2 5.6 .4 2zM677.1 164.7l-.2-3.4-.2 5.7 .2 3.3zM694.5 162.7l0-.7-.1 5.7 .1 .7zM723 161l0 2 0 5.6 .1-2zM723 163l-.1 .6 0 5.7 .1-.7zM722.9 164.1l-.1 1.2 .1 5.7 .1-1.2zM740.6 163.4l-.5 3.3 .2 5.7 .4-3.3zM739.3 169.2l-.1 .5 .2 5.7 .1-.5zM757.7 168.5l-1.1 4.5 .2 5.7 1.1-4.5zM753 179.8l0 .9 .2 5.8 0-.9zM776 221.8l-.2 1.1 .4 5.9 .1-1z" fill="#2e2e2e" stroke="#2e2e2e" stroke-width=".6" stroke-linejoin="round"/>
<path d="M775.9 237.6l-.4 .9 .4 6.1 .4-1zM787 248.7l-1.2 3.9 .4 6.1 1.2-3.9zM771.2 253.7l-.5 1 .4 6.1 .4-1zM770.7 254.7l-.4 1 .3 6.1 .5-1zM761.7 269.2l-.5 .9 .3 6.2 .5-.9zM734.6 289.2l-.2 .9 .1 6.3 .3-.9zM724.6 295.7l-.2-.7 .1 6.4 .2 .6zM724.1 294.6l-.5-1.1 .1 6.3 .5 1.1zM717.1 302.2l-1.6 4.4 0 6.4 1.7-4.4zM708.8 302.9l-1.3-3.1 0 6.3 1.3 3.1zM707.5 299.8l-.5-2 0 6.4 .5 1.9zM707 297.2l-.2-.5 0 6.3 .2 .5zM700.9 295.3l-.4 1.2 0 6.3 .3-1.1zM700.5 296.5l-.1 .5-.1 6.3 .2-.5zM700.2 297.6l-.6 1.9 0 6.4 .6-1.9zM699.6 299.5l-1.5 3 0 6.4 1.5-3zM691.1 305.8l-1.3-4.5 0 6.4 1.3 4.5zM689.6 293.7l-.4-.8-.1 6.3 .4 .8zM683.2 293.7l-.3 .6-.1 6.3 .2-.6zM648.3 266.4l-.4-.9-.3 6.2 .4 .9zM632 264.9l-1.9-3.6-.3 6.2 1.8 3.6zM640.3 251.5l-.4-1.1-.3 6.2 .4 1zM639.9 250.4l-.3-1-.4 6.1 .4 1.1zM636.4 234l-.3-.9-.4 6 .3 .9zM642.3 202.3l-.4-.8-.3 5.9 .4 .8zM646.2 181.8l-1.9-4.3-.3 5.8 1.9 4.3zM662.7 175.9l-.2-.5-.2 5.7 .1 .5zM662.1 174.8l-.9-1.8-.2 5.7 .9 1.9zM661.2 173l-1-3.1-.2 5.7 1 3.1zM678 168.9l-.3-1.2-.1 5.7 .3 1.2zM677.7 167.2l-.3-.6-.1 5.7 .2 .6zM740.1 166.7l-.5 1.9 .2 5.7 .5-1.9zM739.6 168.6l-.3 .6 .2 5.7 .3-.6zM739.2 169.7l-.4 1.2 .2 5.7 .4-1.2zM756.6 173l-1.3 3.1 .3 5.7 1.2-3.1zM753.9 178.4l-.2 .4 .2 5.8 .2-.5zM771.9 181.7l-2.3 4.1 .4 5.8 2.2-4.2zM764.4 191.7l-.3 .9 .3 5.8 .3-.9z" fill="#3a3a3a" stroke="#3a3a3a" stroke-width=".6" stroke-linejoin="round"/>
<path d="M771.8 252.9l-.6 .8 .3 6.1 .6-.8zM779.7 266.2l-2.1 3.4 .3 6.2 2.2-3.5zM763.1 267.5l-.7 .8 .3 6.2 .6-.8zM762.4 268.3l-.7 .9 .3 6.2 .7-.9zM749.9 280.4l-.7 .8 .2 6.2 .7-.8zM742.5 291.1l-1.4-1.5 .2 6.3 1.4 1.6zM741.1 289.6l-.4-.5 .2 6.3 .4 .5zM740.3 288.7l-.8-.9 .2 6.3 .8 .9zM731 303.6l-3.4-3.4 .1 6.3 3.4 3.4zM727.6 300.2l-2-2.8 .1 6.4 2 2.7zM725.6 297.4l-1-1.7 .1 6.3 1 1.8zM724.4 295l-.3-.4 .1 6.3 .3 .5zM718.5 293.8l-.5 .8 0 6.3 .5-.7zM711.2 306.9l-2.4-4 0 6.3 2.4 4.1zM706.6 295.5l-.6-.7 0 6.4 .6 .7zM698.1 302.5l-2.7 3.9-.1 6.4 2.8-3.9zM684.1 292.2l-.6 1.1-.1 6.3 .6-1zM683.5 293.3l-.3 .4-.2 6.3 .4-.4zM682.9 294.3l-1.1 1.7-.1 6.3 1.1-1.7zM681.8 296l-2.3 2.6-.1 6.3 2.3-2.6zM668.6 285.5l-.9 .9-.2 6.3 .9-.9zM667.3 286.7l-.4 .5-.2 6.3 .4-.5zM659.4 278.3l-.6-.9-.2 6.3 .6 .8zM643.3 280.4l-2.8-3.1-.3 6.3 2.8 3.1zM647.9 265.5l-.7-.9-.3 6.2 .7 .9zM647.2 264.6l-.6-.9-.3 6.2 .6 .9zM639.6 249.4l-.6-.8-.3 6.1 .5 .8zM637.2 217.3l-.6-.7-.4 6 .6 .7zM635.7 196.6l-3-3.8-.4 5.9 3 3.7zM651 188l-.9-.9-.3 5.8 .9 .9zM650.1 187.1l-.3-.4-.3 5.8 .3 .4zM649.3 186.2l-1.3-1.5-.3 5.8 1.3 1.5zM648 184.7l-1.8-2.9-.3 5.8 1.8 2.9zM663.3 176.9l-.6-1-.3 5.7 .6 1.1zM662.5 175.4l-.4-.6-.2 5.8 .4 .5zM755.3 176.1l-1 1.7 .2 5.8 1.1-1.8zM754.3 177.8l-.4 .6 .2 5.7 .4-.5zM753.7 178.8l-.7 1 .2 5.8 .7-1zM769.6 185.8l-2 2.8 .3 5.8 2.1-2.8zM767.6 188.6l-1.4 1.4 .3 5.8 1.4-1.4zM765.6 190.5l-.3 .4 .3 5.8 .3-.4zM782.3 197.7l-3.3 3.5 .4 5.9 3.2-3.6zM772.4 205.7l-.4 .8 .3 5.9 .5-.8zM776.6 221.2l-.6 .6 .3 6 .7-.7z" fill="#494949" stroke="#494949" stroke-width=".6" stroke-linejoin="round"/>
<path d="M789.4 234.2l-4.6 1.7 .4 6.1 4.7-1.8zM784.8 235.9l-3.4 .8 .3 6.1 3.5-.8zM781.4 236.7l-2.2 .3 .4 6 2.1-.2zM779.2 237l-.7-.1 .4 6.1 .7 0zM778.5 236.9l-.5 .1 .4 6.1 .5-.1zM778 237l-1.3 .1 .4 6 1.3 0zM776.7 237.1l-.8 .5 .4 6 .8-.5zM785.8 252.6l-4.9 .7 .4 6.1 4.9-.7zM780.9 253.3l-3.6 0 .4 6.1 3.6 0zM777.3 253.3l-2.1-.3 .3 6.1 2.2 .3zM775.2 253l-.7-.2 .4 6.1 .6 .2zM774.5 252.8l-.5 0 .3 6.1 .6 0zM774 252.8l-1.3-.2 .4 6.1 1.2 .2zM772.7 252.6l-.9 .3 .3 6.1 1-.3zM777.6 269.6l-5-.4 .3 6.2 5 .4zM772.6 269.2l-3.5-.8 .4 6.2 3.4 .8zM769.1 268.4l-1.9-.7 .3 6.2 2 .7zM767.2 267.7l-.7-.3 .3 6.1 .7 .4zM766.5 267.4l-.5-.2 .3 6.2 .5 .1zM766 267.2l-1.1-.5 .3 6.2 1.1 .5zM764.9 266.7l-1 .1 .3 6.2 1-.1zM763.9 266.8l-.8 .7 .2 6.2 .9-.7zM768.1 281.5l-2.9 2.9 .2 6.2 3-2.9zM765.2 284.4l-4.7-1.6 .2 6.3 4.7 1.5zM760.5 282.8l-3.2-1.5 .3 6.2 3.1 1.6zM757.3 281.3l-1.7-1.2 .2 6.3 1.8 1.1zM755.6 280.1l-.6-.4 .3 6.2 .5 .5zM755 279.7l-.4-.3 .2 6.3 .5 .2zM754.6 279.4l-1-.7 .2 6.2 1 .8zM753.6 278.7l-1-.2 .2 6.3 1 .1zM752.6 278.5l-1 .5 .3 6.3 .9-.5zM751.6 279l-.8 .7 .2 6.3 .9-.7zM750.8 279.7l-.9 .7 .2 6.2 .9-.6zM753 293.7l-3.7 2.2 .2 6.3 3.7-2.2zM749.3 295.9l-4.1-2.6 .2 6.4 4.1 2.5zM745.2 293.3l-2.7-2.2 .2 6.4 2.7 2.2zM740.7 289.1l-.4-.4 .2 6.3 .4 .4zM739.5 287.8l-.9-.3 .2 6.2 .9 .4zM738.6 287.5l-1 .2 .1 6.3 1.1-.3zM737.6 287.7l-1.1 .5 .2 6.3 1-.5zM736.5 288.2l-1 .4 .2 6.3 1-.4zM735.5 288.6l-.9 .6 .2 6.3 .9-.6zM735.1 302.3l-4.1 1.3 .1 6.3 4.1-1.3zM723.6 293.5l-.8-.5 .1 6.3 .8 .5zM722.8 293l-1.1 0 .1 6.3 1.1 0zM721.7 293l-1.1 .2 0 6.3 1.2-.2zM720.6 293.2l-1.2 .2 .1 6.3 1.1-.2zM719.4 293.4l-.9 .4 0 6.4 1-.5zM715.5 306.6l-4.3 .3 0 6.4 4.3-.3zM706 294.8l-1.1-.2 0 6.3 1.1 .3zM704.9 294.6l-1.1 0-.1 6.3 1.2 0zM703.8 294.6l-1.2-.1 0 6.3 1.1 .1zM702.6 294.5l-1.1 .2 0 6.3 1.1-.2zM701.5 294.7l-.6 .6-.1 6.4 .7-.7zM695.4 306.4l-4.3-.6 0 6.4 4.2 .6zM689.2 292.9l-1-.5-.1 6.3 1 .5zM688.2 292.4l-1.1-.3-.1 6.3 1.1 .3zM687.1 292.1l-1.1-.3-.1 6.3 1.1 .3zM686 291.8l-1.1 0-.1 6.3 1.1 0zM684.9 291.8l-.8 .4-.1 6.4 .8-.5zM679.5 298.6l-3.6 3.2-.1 6.3 3.6-3.2zM675.9 301.8l-4-1.6-.1 6.4 4 1.5zM673.3 287.2l-.8-.6-.1 6.3 .8 .6zM672.5 286.6l-1-.6-.1 6.3 1 .6zM671.5 286l-1-.5-.1 6.3 1 .5zM670.5 285.5l-1-.3-.2 6.3 1.1 .3zM669.5 285.2l-.9 .3-.2 6.3 .9-.3zM667.7 286.4l-.4 .3-.2 6.3 .4-.3zM666.9 287.2l-1.5 1.4-.2 6.3 1.5-1.4zM665.4 288.6l-2.9 2.1-.2 6.3 2.9-2.1zM662.5 290.7l-4.3 2.2-.2 6.3 4.3-2.2zM658.2 292.9l-3.5-2.4-.2 6.3 3.5 2.4zM658.8 277.4l-.8-.7-.3 6.2 .9 .8zM658 276.7l-.8-.8-.3 6.3 .8 .7zM657.2 275.9l-1-.5-.2 6.2 .9 .6zM656.2 275.4l-1 .1-.2 6.2 1-.1zM655.2 275.5l-1 .7-.3 6.2 1.1-.7zM654.2 276.2l-.5 .2-.2 6.2 .4-.2zM653.7 276.4l-.5 .4-.3 6.2 .6-.4zM653.2 276.8l-1.9 1-.2 6.3 1.8-1.1zM651.3 277.8l-3.2 1.4-.3 6.2 3.3-1.3zM648.1 279.2l-4.8 1.2-.3 6.3 4.8-1.3zM646.6 263.7l-.7-.7-.3 6.1 .7 .8zM645.9 263l-1-.2-.3 6.2 1 .1zM644.9 262.8l-1.2 .4-.3 6.2 1.2-.4zM643.7 263.2l-.5 .1-.3 6.2 .5-.1zM643.2 263.3l-.7 .3-.3 6.2 .7-.3zM642.5 263.6l-2 .6-.3 6.2 2-.6zM640.5 264.2l-3.5 .6-.4 6.2 3.6-.6zM637 264.8l-5 .1-.4 6.2 5-.1zM639 248.6l-.9-.4-.3 6.1 .9 .4zM638.1 248.2l-1.3 .1-.3 6.1 1.3-.1zM636.8 248.3l-.5 0-.3 6.1 .5 0zM636.3 248.3l-.7 .2-.3 6.1 .7-.2zM635.6 248.5l-2.1 .1-.4 6.1 2.2-.1zM633.5 248.6l-3.6-.2-.4 6 3.6 .3zM629.9 248.4l-4.9-1-.4 6.1 4.9 .9zM636.1 233.1l-.8-.6-.4 6 .8 .6zM635.3 232.5l-1.3-.2-.4 6.1 1.3 .1zM634 232.3l-.5-.1-.4 6 .5 .2zM633.5 232.2l-.7 0-.4 6 .7 0zM632.8 232.2l-2.1-.4-.4 6.1 2.1 .3zM630.7 231.8l-3.4-1-.4 6 3.4 1.1zM627.3 230.8l-4.5-2-.4 6 4.5 2zM636.6 216.6l-1.2-.4-.4 5.9 1.2 .5zM635.4 216.2l-.5-.2-.4 5.9 .5 .2zM634.9 216l-.7-.2-.3 5.9 .6 .2zM634.2 215.8l-1.9-.8-.4 5.9 2 .8zM632.3 215l-3.1-1.8-.3 5.9 3 1.8zM629.2 213.2l-3.8-2.9-.4 5.9 3.9 2.9zM641.9 201.5l-1-.7-.4 5.9 1.1 .7zM640.9 200.8l-.5-.3-.3 5.9 .4 .3zM640.4 200.5l-.6-.3-.3 5.8 .6 .4zM639.8 200.2l-1.6-1.3-.4 5.9 1.7 1.2zM638.2 198.9l-2.5-2.3-.4 5.8 2.5 2.4zM649.8 186.7l-.5-.5-.3 5.8 .5 .5zM766.2 190l-.6 .5 .3 5.8 .6-.5zM765.3 190.9l-.9 .8 .3 5.8 .9-.8zM779 201.2l-2.6 2.2 .3 5.9 2.7-2.2zM776.4 203.4l-1.8 1.1 .3 5.9 1.8-1.1zM774.6 204.5l-.6 .3 .3 5.9 .6-.3zM774 204.8l-.5 .3 .4 5.9 .4-.3zM773.5 205.1l-1.1 .6 .4 5.9 1.1-.6zM788.2 215.5l-4 2.8 .4 5.9 4-2.7zM784.2 218.3l-3.2 1.5 .4 6 3.2-1.6zM781 219.8l-2 .7 .4 5.9 2-.6zM779 220.5l-.7 .1 .4 6 .7-.2zM778.3 220.6l-.4 .2 .3 6 .5-.2zM777.9 220.8l-1.3 .4 .4 5.9 1.2-.3z" fill="#5c5c5c" stroke="#5c5c5c" stroke-width=".6" stroke-linejoin="round"/>
<path d="M776.3 229.9l.1 1.1 .3 .9 .8 .6 1.3 .1 .5 .2 .7 0 2.1 .3 3.4 1.1 4.5 2-.1 4-4.7 1.8-3.5 .8-2.1 .2-.7 0-.5 .1-1.3 0-.8 .5-.4 1-.2 1-.2 1.1 .1 1 .6 .7 1.2 .5 .5 .2 .6 .2 2 .8 3 1.8 3.9 2.9-1.2 3.9-4.9 .7-3.6 0-2.2-.3-.6-.2-.6 0-1.2-.2-1 .3-.6 .8-.4 1-.5 1-.2 1 .4 .8 1.1 .7 .4 .3 .6 .4 1.7 1.2 2.5 2.4 3 3.7-2.2 3.5-5-.4-3.4-.8-2-.7-.7-.4-.5-.1-1.1-.5-1 .1-.9 .7-.6 .8-.7 .9-.5 .9 .2 .9 .9 .9 .3 .4 .5 .5 1.3 1.5 1.8 2.9 1.9 4.3-3 2.9-4.7-1.5-3.1-1.6-1.8-1.1-.5-.5-.5-.2-1-.8-1-.1-.9 .5-.9 .7-.9 .6-.7 .8 0 .9 .6 1.1 .1 .5 .4 .5 .9 1.9 1 3.1 .8 4.6-3.7 2.2-4.1-2.5-2.7-2.2-1.4-1.6-.4-.5-.4-.4-.8-.9-.9-.4-1.1 .3-1 .5-1 .4-.9 .6-.3 .9 .3 1.2 .1 .5 .2 .6 .4 2 .2 3.3-.5 4.6-4.1 1.3-3.4-3.4-2-2.7-1-1.8-.2-.6-.3-.5-.5-1.1-.8-.5-1.1 0-1.2 .2-1.1 .2-1 .5-.5 .7 0 1.2-.1 .5 .1 .7-.1 2-.7 3.3-1.7 4.4-4.3 .3-2.4-4.1-1.3-3.1-.5-1.9 0-.7-.2-.5-.2-1.1-.6-.7-1.1-.3-1.2 0-1.1-.1-1.1 .2-.7 .7-.3 1.1-.2 .5-.1 .7-.6 1.9-1.5 3-2.8 3.9-4.2-.6-1.3-4.5-.5-3.3 .1-2 .1-.7-.1-.5 .1-1.2-.4-.8-1-.5-1.1-.3-1.1-.3-1.1 0-.8 .5-.6 1-.4 .4-.2 .6-1.1 1.7-2.3 2.6-3.6 3.2-4-1.5-.1-4.7 .4-3.3 .5-1.9 .3-.6 .1-.5 .4-1.2-.2-.9-.8-.6-1-.6-1-.5-1.1-.3-.9 .3-.9 .9-.4 .3-.4 .5-1.5 1.4-2.9 2.1-4.3 2.2-3.5-2.4 1.1-4.5 1.2-3.1 1.1-1.8 .4-.5 .2-.5 .7-1 0-.9-.6-.8-.9-.8-.8-.7-.9-.6-1 .1-1.1 .7-.4 .2-.6 .4-1.8 1.1-3.3 1.3-4.8 1.3-2.8-3.1 2.2-4.2 2.1-2.8 1.4-1.4 .6-.5 .3-.4 .9-.8 .3-.9-.4-.9-.7-.9-.6-.9-.7-.8-1-.1-1.2 .4-.5 .1-.7 .3-2 .6-3.6 .6-5 .1-1.8-3.6 3.2-3.6 2.7-2.2 1.8-1.1 .6-.3 .4-.3 1.1-.6 .5-.8-.1-1-.4-1-.4-1.1-.5-.8-.9-.4-1.3 .1-.5 0-.7 .2-2.2 .1-3.6-.3-4.9-.9-.8-4 4-2.7 3.2-1.6 2-.6 .7-.2 .5-.2 1.2-.3 .7-.7 .1-1-.1-1.1-.1-1.1-.3-.9-.8-.6-1.3-.1-.5-.2-.7 0-2.1-.3-3.4-1.1-4.5-2 .1-4 4.7-1.8 3.5-.8 2.1-.2 .7 0 .5-.1 1.3 0 .8-.5 .4-1 .2-1 .2-1.1-.1-1-.6-.7-1.2-.5-.5-.2-.6-.2-2-.8-3-1.8-3.9-2.9 1.2-3.9 4.9-.7 3.6 0 2.2 .3 .6 .2 .6 0 1.2 .2 1-.3 .6-.8 .4-1 .5-1 .2-1-.4-.8-1.1-.7-.4-.3-.6-.4-1.7-1.2-2.5-2.4-3-3.7 2.2-3.5 5 .4 3.4 .8 2 .7 .7 .4 .5 .1 1.1 .5 1-.1 .9-.7 .6-.8 .7-.9 .5-.9-.2-.9-.9-.9-.3-.4-.5-.5-1.3-1.5-1.8-2.9-1.9-4.3 3-2.9 4.7 1.5 3.1 1.6 1.8 1.1 .5 .5 .5 .2 1 .8 1 .1 .9-.5 .9-.7 .9-.6 .7-.8 0-.9-.6-1.1-.1-.5-.4-.5-.9-1.9-1-3.1-.8-4.6 3.7-2.2 4.1 2.5 2.7 2.2 1.4 1.6 .4 .5 .4 .4 .8 .9 .9 .4 1.1-.3 1-.5 1-.4 .9-.6 .3-.9-.3-1.2-.1-.5-.2-.6-.4-2-.2-3.3 .5-4.6 4.1-1.3 3.4 3.4 2 2.7 1 1.8 .2 .6 .3 .5 .5 1.1 .8 .5 1.1 0 1.2-.2 1.1-.2 1-.5 .5-.7 0-1.2 .1-.5-.1-.7 .1-2 .7-3.3 1.7-4.4 4.3-.3 2.4 4.1 1.3 3.1 .5 1.9 0 .7 .2 .5 .2 1.1 .6 .7 1.1 .3 1.2 0 1.1 .1 1.1-.2 .7-.7 .3-1.1 .2-.5 .1-.7 .6-1.9 1.5-3 2.8-3.9 4.2 .6 1.3 4.5 .5 3.3-.1 2-.1 .7 .1 .5-.1 1.2 .4 .8 1 .5 1.1 .3 1.1 .3 1.1 0 .8-.5 .6-1 .4-.4 .2-.6 1.1-1.7 2.3-2.6 3.6-3.2 4 1.5 .1 4.7-.4 3.3-.5 1.9-.3 .6-.1 .5-.4 1.2 .2 .9 .8 .6 1 .6 1 .5 1.1 .3 .9-.3 .9-.9 .4-.3 .4-.5 1.5-1.4 2.9-2.1 4.3-2.2 3.5 2.4-1.1 4.5-1.2 3.1-1.1 1.8-.4 .5-.2 .5-.7 1 0 .9 .6 .8 .9 .8 .8 .7 .9 .6 1-.1 1.1-.7 .4-.2 .6-.4 1.8-1.1 3.3-1.3 4.8-1.3 2.8 3.1-2.2 4.2-2.1 2.8-1.4 1.4-.6 .5-.3 .4-.9 .8-.3 .9 .4 .9 .7 .9 .6 .9 .7 .8 1 .1 1.2-.4 .5-.1 .7-.3 2-.6 3.6-.6 5-.1 1.8 3.6-3.2 3.6-2.7 2.2-1.8 1.1-.6 .3-.4 .3-1.1 .6-.5 .8 .1 1 .4 1 .4 1.1 .5 .8 .9 .4 1.3-.1 .5 0 .7-.2 2.2-.1 3.6 .3 4.9 .9 .8 4-4 2.7-3.2 1.6-2 .6-.7 .2-.5 .2-1.2 .3-.7 .7-.1 1 .1 1.1z" fill="none" stroke="#0c0c0c" stroke-width="1.5" stroke-linejoin="round"/>
<path d="M776 225L776.4 231M778.4 226.7L778.8 232.6M789.6 230.2L790 236.2M789.4 234.2L789.9 240.2M778 237L778.4 243.1M775.5 238.5L775.9 244.6M775.2 240.7L775.5 246.7M777 242.8L777.4 248.9M787 248.7L787.4 254.8M785.8 252.6L786.2 258.7M774 252.8L774.3 258.9M771.2 253.7L771.5 259.8M770.3 255.7L770.6 261.8M771.5 258.2L771.9 264.3M779.7 266.2L780.1 272.3M777.6 269.6L777.9 275.8M766 267.2L766.3 273.4M763.1 267.5L763.3 273.7M761.7 269.2L762 275.4M762.3 271.9L762.6 278.1M768.1 281.5L768.4 287.7M765.2 284.4L765.4 290.6M754.6 279.4L754.8 285.7M751.6 279L751.9 285.3M749.9 280.4L750.1 286.6M749.7 283.1L750 289.4M753 293.7L753.2 300M749.3 295.9L749.5 302.2M740.3 288.7L740.5 295M737.6 287.7L737.7 294M735.5 288.6L735.7 294.9M734.7 291.3L734.8 297.6M735.1 302.3L735.2 308.6M731 303.6L731.1 309.9M724.1 294.6L724.2 300.9M721.7 293L721.8 299.3M719.4 293.4L719.5 299.7M717.9 295.8L718 302.1M715.5 306.6L715.5 313M711.2 306.9L711.2 313.3M706.8 296.7L706.8 303M704.9 294.6L704.9 300.9M702.6 294.5L702.6 300.8M700.5 296.5L700.5 302.8M695.4 306.4L695.3 312.8M691.1 305.8L691.1 312.2M689.5 294.9L689.4 301.2M688.2 292.4L688.1 298.7M686 291.8L685.9 298.1M683.5 293.3L683.4 299.6M675.9 301.8L675.8 308.1M671.9 300.2L671.8 306.6M673.2 289.3L673 295.6M672.5 286.6L672.4 292.9M670.5 285.5L670.4 291.8M667.7 286.4L667.5 292.7M658.2 292.9L658 299.2M654.7 290.5L654.5 296.8M658.7 280.2L658.5 286.4M658.8 277.4L658.6 283.7M657.2 275.9L656.9 282.2M654.2 276.2L653.9 282.4M643.3 280.4L643 286.7M640.5 277.3L640.2 283.6M647.1 268.1L646.8 274.3M647.9 265.5L647.6 271.7M646.6 263.7L646.3 269.9M643.7 263.2L643.4 269.4M632 264.9L631.6 271.1M630.1 261.3L629.8 267.5M638.9 253.9L638.5 260M640.3 251.5L640 257.6M639.6 249.4L639.2 255.5M636.8 248.3L636.5 254.4M625 247.4L624.6 253.5M624.2 243.5L623.8 249.5M634.5 238.2L634.2 244.2M636.6 236.1L636.2 242.2M636.4 234L636 240M634 232.3L633.6 238.4M622.8 228.8L622.4 234.8M623 224.8L622.5 230.8M634.4 222L634 227.9M636.9 220.5L636.5 226.4M637.2 218.3L636.9 224.3M635.4 216.2L635 222.1M625.4 210.3L625 216.2M626.6 206.4L626.2 212.3M638.4 206.2L638.1 212.1M641.2 205.3L640.9 211.2M642.1 203.3L641.8 209.2M640.9 200.8L640.5 206.7M632.7 192.8L632.3 198.7M634.8 189.4L634.5 195.2M646.4 191.8L646.1 197.6M649.3 191.5L649.1 197.3M650.7 189.8L650.4 195.6M650.1 187.1L649.8 192.9M644.3 177.5L644 183.3M647.2 174.6L647 180.4M657.8 179.6L657.6 185.3M660.8 180L660.5 185.7M662.5 178.6L662.3 184.4M662.7 175.9L662.4 181.6M659.4 165.3L659.2 171M663.1 163.1L662.9 168.8M672.1 170.3L671.9 176M674.8 171.3L674.7 177M676.9 170.4L676.7 176.1M677.7 167.7L677.6 173.4M677.3 156.7L677.2 162.4M681.4 155.4L681.3 161.1M688.3 164.4L688.2 170.1M690.7 166L690.6 171.7M693 165.6L692.9 171.3M694.5 163.2L694.4 168.9M696.9 152.4L696.9 158M701.2 152.1L701.2 157.7M705.6 162.3L705.6 168M707.5 164.4L707.5 170.1M709.8 164.5L709.8 170.2M711.9 162.5L711.9 168.2M717 152.6L717.1 158.2M721.3 153.2L721.3 158.8M722.9 164.1L723 169.8M724.2 166.6L724.3 172.3M726.4 167.2L726.5 172.9M728.9 165.7L729 171.4M736.5 157.2L736.6 162.9M740.5 158.8L740.6 164.4M739.2 169.7L739.4 175.4M739.9 172.4L740 178.1M741.9 173.5L742 179.2M744.7 172.6L744.9 178.3M754.2 166.1L754.4 171.8M757.7 168.5L757.9 174.2M753.7 178.8L753.9 184.6M753.6 181.6L753.8 187.3M755.2 183.1L755.5 188.8M758.2 182.8L758.5 188.6M769.1 178.6L769.4 184.3M771.9 181.7L772.2 187.4M765.3 190.9L765.6 196.7M764.5 193.5L764.8 199.3M765.8 195.3L766.1 201.1M768.7 195.8L769 201.6M780.4 194.1L780.8 199.9M782.3 197.7L782.6 203.5M773.5 205.1L773.9 211M772.1 207.5L772.4 213.4M772.8 209.6L773.2 215.5M775.6 210.7L775.9 216.6M787.4 211.6L787.8 217.5M788.2 215.5L788.6 221.5M777.9 220.8L778.2 226.8M775.8 222.9L776.2 228.8" fill="none" stroke="#141414" stroke-width="1"/>
<path d="M775.9 223.9l.1 1.1 .3 .9 .8 .6 1.3 .2 .5 .1 .7 0 2.1 .4 3.4 1 4.5 2-.2 4-4.6 1.7-3.4 .8-2.2 .3-.7-.1-.5 .1-1.3 .1-.8 .5-.4 .9-.2 1.1-.1 1.1 0 1 .6 .7 1.2 .4 .5 .2 .7 .2 1.9 .8 3.1 1.8 3.8 2.9-1.2 3.9-4.9 .7-3.6 0-2.1-.3-.7-.2-.5 0-1.3-.2-.9 .3-.6 .8-.5 1-.4 1-.2 1 .4 .8 1 .7 .5 .3 .6 .3 1.6 1.3 2.5 2.3 3 3.8-2.1 3.4-5-.4-3.5-.8-1.9-.7-.7-.3-.5-.2-1.1-.5-1 .1-.8 .7-.7 .8-.7 .9-.5 .9 .2 .9 .9 .9 .3 .4 .5 .5 1.3 1.5 1.8 2.9 1.9 4.3-2.9 2.9-4.7-1.6-3.2-1.5-1.7-1.2-.6-.4-.4-.3-1-.7-1-.2-1 .5-.8 .7-.9 .7-.7 .8-.1 .9 .6 1 .2 .5 .4 .6 .9 1.8 1 3.1 .8 4.6-3.7 2.2-4.1-2.6-2.7-2.2-1.4-1.5-.4-.5-.4-.4-.8-.9-.9-.3-1 .2-1.1 .5-1 .4-.9 .6-.2 .9 .3 1.2 0 .5 .3 .6 .3 1.9 .2 3.4-.4 4.6-4.1 1.3-3.4-3.4-2-2.8-1-1.7-.2-.7-.3-.4-.5-1.1-.8-.5-1.1 0-1.1 .2-1.2 .2-.9 .4-.5 .8-.1 1.2 0 .5 0 .7-.1 1.9-.7 3.3-1.6 4.4-4.3 .3-2.4-4-1.3-3.1-.5-2 0-.6-.2-.5-.2-1.2-.6-.7-1.1-.2-1.1 0-1.2-.1-1.1 .2-.6 .6-.4 1.2-.1 .5-.2 .6-.6 1.9-1.5 3-2.7 3.9-4.3-.6-1.3-4.5-.4-3.3 0-2 .1-.6 0-.5 .1-1.2-.4-.8-1-.5-1.1-.3-1.1-.3-1.1 0-.8 .4-.6 1.1-.3 .4-.3 .6-1.1 1.7-2.3 2.6-3.6 3.2-4-1.6-.1-4.6 .5-3.3 .5-1.9 .3-.6 .1-.5 .4-1.2-.3-.9-.8-.6-1-.6-1-.5-1-.3-.9 .3-.9 .9-.4 .3-.4 .5-1.5 1.4-2.9 2.1-4.3 2.2-3.5-2.4 1.1-4.5 1.3-3.1 1-1.7 .4-.6 .2-.4 .7-1 0-.9-.6-.9-.8-.7-.8-.8-1-.5-1 .1-1 .7-.5 .2-.5 .4-1.9 1-3.2 1.4-4.8 1.2-2.8-3.1 2.3-4.1 2-2.8 1.4-1.4 .6-.5 .3-.4 .9-.8 .3-.9-.4-.9-.7-.9-.6-.9-.7-.7-1-.2-1.2 .4-.5 .1-.7 .3-2 .6-3.5 .6-5 .1-1.9-3.6 3.3-3.5 2.6-2.2 1.8-1.1 .6-.3 .5-.3 1.1-.6 .4-.8-.1-1-.4-1.1-.3-1-.6-.8-.9-.4-1.3 .1-.5 0-.7 .2-2.1 .1-3.6-.2-4.9-1-.8-3.9 4-2.8 3.2-1.5 2-.7 .7-.1 .4-.2 1.3-.4 .6-.6 .2-1.1-.1-1-.1-1.1-.3-.9-.8-.6-1.3-.2-.5-.1-.7 0-2.1-.4-3.4-1-4.5-2 .2-4 4.6-1.7 3.4-.8 2.2-.3 .7 .1 .5-.1 1.3-.1 .8-.5 .4-.9 .2-1.1 .1-1.1 0-1-.6-.7-1.2-.4-.5-.2-.7-.2-1.9-.8-3.1-1.8-3.8-2.9 1.2-3.9 4.9-.7 3.6 0 2.1 .3 .7 .2 .5 0 1.3 .2 .9-.3 .6-.8 .5-1 .4-1 .2-1-.4-.8-1-.7-.5-.3-.6-.3-1.6-1.3-2.5-2.3-3-3.8 2.1-3.4 5 .4 3.5 .8 1.9 .7 .7 .3 .5 .2 1.1 .5 1-.1 .8-.7 .7-.8 .7-.9 .5-.9-.2-.9-.9-.9-.3-.4-.5-.5-1.3-1.5-1.8-2.9-1.9-4.3 2.9-2.9 4.7 1.6 3.2 1.5 1.7 1.2 .6 .4 .4 .3 1 .7 1 .2 1-.5 .8-.7 .9-.7 .7-.8 .1-.9-.6-1-.2-.5-.4-.6-.9-1.8-1-3.1-.8-4.6 3.7-2.2 4.1 2.6 2.7 2.2 1.4 1.5 .4 .5 .4 .4 .8 .9 .9 .3 1-.2 1.1-.5 1-.4 .9-.6 .2-.9-.3-1.2 0-.5-.3-.6-.3-1.9-.2-3.4 .4-4.6 4.1-1.3 3.4 3.4 2 2.8 1 1.7 .2 .7 .3 .4 .5 1.1 .8 .5 1.1 0 1.1-.2 1.2-.2 .9-.4 .5-.8 .1-1.2 0-.5 0-.7 .1-1.9 .7-3.3 1.6-4.4 4.3-.3 2.4 4 1.3 3.1 .5 2 0 .6 .2 .5 .2 1.2 .6 .7 1.1 .2 1.1 0 1.2 .1 1.1-.2 .6-.6 .4-1.2 .1-.5 .2-.6 .6-1.9 1.5-3 2.7-3.9 4.3 .6 1.3 4.5 .4 3.3 0 2-.1 .6 0 .5-.1 1.2 .4 .8 1 .5 1.1 .3 1.1 .3 1.1 0 .8-.4 .6-1.1 .3-.4 .3-.6 1.1-1.7 2.3-2.6 3.6-3.2 4 1.6 .1 4.6-.5 3.3-.5 1.9-.3 .6-.1 .5-.4 1.2 .3 .9 .8 .6 1 .6 1 .5 1 .3 .9-.3 .9-.9 .4-.3 .4-.5 1.5-1.4 2.9-2.1 4.3-2.2 3.5 2.4-1.1 4.5-1.3 3.1-1 1.7-.4 .6-.2 .4-.7 1 0 .9 .6 .9 .8 .7 .8 .8 1 .5 1-.1 1-.7 .5-.2 .5-.4 1.9-1 3.2-1.4 4.8-1.2 2.8 3.1-2.3 4.1-2 2.8-1.4 1.4-.6 .5-.3 .4-.9 .8-.3 .9 .4 .9 .7 .9 .6 .9 .7 .7 1 .2 1.2-.4 .5-.1 .7-.3 2-.6 3.5-.6 5-.1 1.9 3.6-3.3 3.5-2.6 2.2-1.8 1.1-.6 .3-.5 .3-1.1 .6-.4 .8 .1 1 .4 1.1 .3 1 .6 .8 .9 .4 1.3-.1 .5 0 .7-.2 2.1-.1 3.6 .2 4.9 1 .8 3.9-4 2.8-3.2 1.5-2 .7-.7 .1-.4 .2-1.3 .4-.6 .6-.2 1.1 .1 1z" fill="#c9c9c9" stroke="#0e0e0e" stroke-width="1.35" stroke-linejoin="round"/>
<path d="M894.1 281.8l-.1-.5-.9 5.7 0 .5zM893.9 281l-.1-.9-1 5.8 .1 .8zM882 284.5l-.4-2.4-1 5.8 .3 2.3zM881.6 282.1l0-1.4-1 5.7 0 1.5zM881.6 280.7l.1-.5-1.1 5.8 0 .4zM881.7 280.2l-.1-.3-1 5.7 0 .4zM881.6 279.9l.1-.9-1.1 5.8 0 .8zM869.3 283.9l-.2-3.3-1.1 5.7 .2 3.3zM869.1 280.6l.3-2.4-1.1 5.7-.3 2.4zM860.1 269l0-.7-1.1 5.7-.1 .7zM846.3 250.1l-.1-.7-1.2 5.6 .1 .7zM835.3 246.6l-.6-2.8-1.3 5.6 .7 2.8zM843.3 239.2l.1-.7-1.3 5.5-.1 .7zM843.4 238.5l-.1-.8-1.3 5.5 .1 .8zM843.3 237.7l-.1-.8-1.3 5.6 .1 .7zM833.5 233.4l.1-2.9-1.3 5.5-.1 2.9zM843.4 227.2l.1-.7-1.3 5.4-.1 .8zM843.5 226.5l.1-.8-1.3 5.5-.1 .7zM843.6 225.7l-.1-.7-1.2 5.5 0 .7zM853.1 204.5l-.2-.6-1.2 5.3 .2 .7zM861.5 196.4l0-.6-1.2 5.3 0 .7zM859.2 190.8l-.6-3.3-1.1 5.3 .5 3.3zM871.6 189l0-.3-1.1 5.3 0 .3zM871.4 188.2l-.3-1.3-1.1 5.2 .3 1.4zM871.1 186.9l-.2-2.4-1.1 5.2 .2 2.4zM870.9 184.5l.3-3.3-1.1 5.2-.3 3.3zM883.4 186.4l0-.8-1 5.3 0 .8zM883.4 185.6l0-.4-1 5.3 0 .4zM883.4 185.2l0-.4-1.1 5.2 .1 .5zM883.4 184.8l0-1.4-1 5.2-.1 1.4zM895.8 184.6l.1-.5-1 5.3 0 .4zM915.3 189.4l-.1 .4-.9 5.2 .1-.3zM928.2 188.6l-.7 3.3-.8 5.3 .7-3.3z" fill="#2e2e2e" stroke="#2e2e2e" stroke-width=".6" stroke-linejoin="round"/>
<path d="M942.1 237.9l-.3 .7-.7 5.5 .2-.7zM950.1 245.7l-.8 2.8-.7 5.6 .8-2.8zM939 249.5l-.3 .7-.8 5.6 .3-.8zM938.7 250.2l-.3 .7-.8 5.6 .3-.7zM932.4 260.6l-.3 .7-.8 5.6 .3-.6zM913.6 275.3l-.2 .6-.9 5.8 .2-.7zM906.5 280l-.2-.4-.9 5.7 .2 .5zM906.1 279.3l-.3-.8-1 5.7 .4 .8zM901.3 284.8l-1.1 3.1-.9 5.8 1.1-3.2zM895.4 285.4l-.9-2.2-1 5.7 .9 2.2zM894.5 283.2l-.4-1.4-1 5.7 .4 1.4zM894 281.3l-.1-.3-1 5.7 .2 .3zM889.7 280.1l-.2 .8-1 5.7 .2-.8zM889.5 280.9l-.1 .3-1.1 5.8 .2-.4zM889.3 281.7l-.4 1.4-1.1 5.7 .5-1.4zM888.9 283.1l-1.1 2.1-1 5.8 1-2.2zM882.9 287.6l-.9-3.1-1.1 5.7 1 3.2zM877.1 279.1l-.2 .4-1 5.8 .2-.5zM870.3 275.2l-.2-.6-1.1 5.7 .1 .6zM852 260l-.3-.7-1.2 5.7 .3 .6zM840.5 259.1l-1.4-2.6-1.2 5.7 1.3 2.5zM846.2 249.4l-.3-.7-1.2 5.5 .3 .8zM845.9 248.7l-.2-.8-1.3 5.6 .3 .7zM843.2 236.9l-.3-.6-1.2 5.5 .2 .7zM847 214.2l-.3-.6-1.3 5.4 .3 .6zM849.4 199.5l-1.4-3-1.2 5.3 1.4 3zM861 195l-.1-.3-1.2 5.3 .2 .3zM860.6 194.3l-.6-1.3-1.2 5.3 .7 1.3zM860 193l-.8-2.2-1.2 5.3 .8 2.2zM871.8 189.9l-.2-.9-1.1 5.3 .2 .8zM871.6 188.7l-.2-.5-1.1 5.3 .2 .5zM915.8 187.6l-.3 1.4-.9 5.2 .3-1.3zM915.5 189l-.2 .4-.9 5.3 .2-.5zM915.2 189.8l-.3 .8-.8 5.3 .2-.9zM927.5 191.9l-.8 2.2-.8 5.3 .8-2.2zM925.7 195.8l-.2 .3-.8 5.3 .2-.3zM938.5 197.9l-1.5 3-.8 5.4 1.5-3zM933.3 205.2l-.1 .6-.8 5.4 .1-.7z" fill="#3a3a3a" stroke="#3a3a3a" stroke-width=".6" stroke-linejoin="round"/>
<path d="M939.4 248.9l-.4 .6-.8 5.5 .4-.6zM945.2 258.3l-1.5 2.5-.8 5.6 1.5-2.5zM933.4 259.4l-.5 .6-.8 5.7 .5-.7zM932.9 260l-.5 .6-.8 5.7 .5-.6zM937.2 269.3l-2.1 2.2-.8 5.7 2.1-2.2zM924.2 268.8l-.5 .6-.8 5.6 .5-.5zM919.1 276.6l-1-1.1-.8 5.7 1 1.1zM918.1 275.5l-.3-.4-.8 5.7 .3 .4zM917.6 274.9l-.6-.7-.9 5.7 .6 .7zM911.1 285.6l-2.4-2.4-.9 5.7 2.4 2.5zM908.7 283.2l-1.5-1.9-.9 5.7 1.5 1.9zM907.2 281.3l-.7-1.3-.9 5.8 .7 1.2zM906.3 279.6l-.2-.3-.9 5.7 .2 .3zM902.1 278.8l-.3 .6-1 5.7 .4-.6zM897.2 288.2l-1.8-2.8-1 5.7 1.8 2.9zM893.8 280.1l-.5-.5-1 5.8 .5 .5zM890.2 279.6l-.5 .5-1 5.7 .5-.5zM887.8 285.2l-1.8 2.8-1.1 5.8 1.9-2.8zM881.7 279l-.3-.6-1.1 5.8 .3 .6zM877.7 278l-.4 .8-1 5.7 .4-.7zM877.3 278.8l-.2 .3-1 5.7 .2-.3zM876.9 279.5l-.7 1.3-1.1 5.7 .8-1.2zM876.2 280.8l-1.6 1.8-1.1 5.8 1.6-1.9zM866.7 273.4l-.6 .6-1.1 5.7 .5-.6zM865.8 274.3l-.3 .4-1.1 5.7 .3-.4zM865.5 274.7l-1 1-1.2 5.7 1.1-1zM860.1 268.3l-.4-.6-1.2 5.7 .5 .6zM848.7 270l-2-2.1-1.2 5.6 2 2.2zM851.7 259.3l-.4-.6-1.2 5.6 .4 .7zM851.3 258.7l-.5-.7-1.2 5.7 .5 .6zM845.7 247.9l-.5-.6-1.2 5.6 .4 .6zM843.5 225l-.4-.5-1.3 5.5 .5 .5zM842.2 210.2l-2.2-2.7-1.2 5.4 2.1 2.6zM852.9 203.9l-.6-.7-1.2 5.4 .6 .6zM852.3 203.2l-.2-.3-1.2 5.4 .2 .3zM851.7 202.6l-.9-1.1-1.2 5.4 .9 1.1zM850.8 201.5l-1.4-2-1.2 5.3 1.4 2.1zM861.5 195.8l-.5-.8-1.1 5.3 .4 .8zM860.9 194.7l-.3-.4-1.1 5.3 .2 .4zM926.7 194.1l-.7 1.3-.8 5.3 .7-1.3zM926 195.4l-.3 .4-.8 5.3 .3-.4zM925.5 196.1l-.4 .7-.8 5.3 .4-.7zM937 200.9l-1.4 2-.8 5.4 1.4-2zM935.6 202.9l-1 1.1-.8 5.3 1-1zM934.2 204.3l-.2 .3-.8 5.3 .2-.3zM946.1 209.3l-2.3 2.5-.7 5.4 2.2-2.6zM939.2 215.1l-.3 .6-.8 5.4 .4-.6zM942.4 226.1l-.5 .5-.7 5.5 .4-.5z" fill="#494949" stroke="#494949" stroke-width=".6" stroke-linejoin="round"/>
<path d="M951.6 235.3l-3.2 1.3-.7 5.5 3.2-1.3zM948.4 236.6l-2.4 .6-.8 5.5 2.5-.6zM946 237.2l-1.5 .2-.8 5.5 1.5-.2zM944.5 237.4l-.6 0-.7 5.5 .5 0zM943.9 237.4l-.3 .1-.8 5.5 .4-.1zM943.6 237.5l-.9 0-.8 5.5 .9 0zM942.7 237.5l-.6 .4-.8 5.5 .6-.4zM949.3 248.5l-3.5 .5-.7 5.6 3.5-.5zM945.8 249l-2.5 .1-.7 5.6 2.5-.1zM943.3 249.1l-1.5-.2-.8 5.6 1.6 .2zM941.8 248.9l-.5-.1-.7 5.6 .4 .1zM941.3 248.8l-.4 0-.7 5.6 .4 0zM940.9 248.8l-.9-.2-.7 5.6 .9 .2zM940 248.6l-.6 .3-.8 5.5 .7-.2zM943.7 260.8l-3.5-.3-.8 5.7 3.5 .2zM940.2 260.5l-2.5-.5-.8 5.6 2.5 .6zM937.7 260l-1.4-.5-.8 5.6 1.4 .5zM936.3 259.5l-.5-.2-.7 5.6 .4 .2zM935.8 259.3l-.3-.1-.8 5.6 .4 .1zM935.5 259.2l-.8-.4-.8 5.7 .8 .3zM934.7 258.8l-.7 .1-.8 5.6 .7 0zM934 258.9l-.6 .5-.8 5.6 .6-.5zM935.1 271.5l-3.3-1.1-.9 5.7 3.4 1.1zM931.8 270.4l-2.3-1.1-.8 5.7 2.2 1.1zM929.5 269.3l-1.3-.8-.8 5.7 1.3 .8zM928.2 268.5l-.3-.3-.9 5.7 .4 .3zM927.9 268.2l-.4-.2-.8 5.7 .3 .2zM927.5 268l-.7-.5-.8 5.7 .7 .5zM926.8 267.5l-.7 0-.8 5.6 .7 .1zM926.1 267.5l-.6 .3-.9 5.7 .7-.4zM925.5 267.8l-.7 .5-.8 5.7 .6-.5zM924.8 268.3l-.6 .5-.8 5.7 .6-.5zM926.6 278.3l-2.6 1.6-.8 5.7 2.5-1.6zM924 279.9l-2.9-1.8-.9 5.7 3 1.8zM921.1 278.1l-2-1.5-.8 5.7 1.9 1.5zM917.8 275.1l-.2-.2-.9 5.7 .3 .2zM917 274.2l-.7-.2-.8 5.7 .6 .2zM916.3 274l-.7 .2-.9 5.7 .8-.2zM915.6 274.2l-.7 .3-.9 5.7 .7-.3zM914.9 274.5l-.7 .4-.9 5.7 .7-.4zM914.2 274.9l-.6 .4-.9 5.7 .6-.4zM914 284.6l-2.9 1-.9 5.8 2.9-1zM905.8 278.5l-.6-.4-.9 5.8 .5 .3zM905.2 278.1l-.8 0-.9 5.8 .8 0zM904.4 278.1l-.8 .2-.9 5.7 .8-.1zM903.6 278.3l-.8 .2-.9 5.7 .8-.2zM902.8 278.5l-.7 .3-.9 5.7 .7-.3zM900.2 287.9l-3 .3-1 5.8 3.1-.3zM893.3 279.6l-.8-.1-1 5.7 .8 .2zM892.5 279.5l-.8 0-1 5.7 .8 0zM891.7 279.5l-.8-.1-1 5.8 .8 0zM890.9 279.4l-.7 .2-1 5.7 .7-.1zM886 288l-3.1-.4-1 5.8 3 .4zM881.4 278.4l-.7-.3-1.1 5.7 .7 .4zM880.7 278.1l-.8-.2-1.1 5.7 .8 .2zM879.9 277.9l-.8-.2-1.1 5.7 .8 .2zM879.1 277.7l-.8 0-1 5.7 .7 0zM878.3 277.7l-.6 .3-1 5.8 .6-.4zM874.6 282.6l-2.5 2.4-1.1 5.7 2.5-2.3zM872.1 285l-2.8-1.1-1.1 5.7 2.8 1.1zM870.1 274.6l-.6-.5-1.1 5.7 .6 .5zM869.5 274.1l-.7-.3-1.1 5.7 .7 .3zM868.8 273.8l-.7-.4-1.1 5.7 .7 .4zM868.1 273.4l-.8-.2-1.1 5.7 .8 .2zM867.3 273.2l-.6 .2-1.2 5.7 .7-.2zM866.1 274l-.3 .3-1.1 5.7 .3-.3zM864.5 275.7l-2 1.5-1.2 5.7 2-1.5zM862.5 277.2l-3.1 1.6-1.1 5.8 3-1.7zM859.4 278.8l-2.4-1.6-1.2 5.7 2.5 1.7zM859.7 267.7l-.6-.5-1.2 5.7 .6 .5zM859.1 267.2l-.6-.5-1.2 5.7 .6 .5zM858.5 266.7l-.7-.4-1.2 5.7 .7 .4zM857.8 266.3l-.7 .1-1.2 5.7 .7-.1zM857.1 266.4l-.7 .5-1.2 5.7 .7-.5zM856.4 266.9l-.4 .2-1.1 5.6 .3-.1zM856 267.1l-.3 .3-1.2 5.6 .4-.3zM855.7 267.4l-1.3 .7-1.2 5.7 1.3-.8zM854.4 268.1l-2.3 1-1.2 5.7 2.3-1zM852.1 269.1l-3.4 .9-1.2 5.7 3.4-.9zM850.8 258l-.5-.5-1.2 5.7 .5 .5zM850.3 257.5l-.7-.1-1.2 5.7 .7 .1zM849.6 257.4l-.8 .4-1.3 5.6 .9-.3zM848.8 257.8l-.4 0-1.2 5.7 .3-.1zM848.4 257.8l-.5 .3-1.2 5.6 .5-.2zM847.9 258.1l-1.4 .4-1.2 5.6 1.4-.4zM846.5 258.5l-2.5 .4-1.2 5.7 2.5-.5zM844 258.9l-3.5 .2-1.3 5.6 3.6-.1zM845.2 247.3l-.6-.2-1.2 5.5 .6 .3zM844.6 247.1l-.9 .1-1.2 5.6 .9-.2zM843.7 247.2l-.4 0-1.2 5.6 .4 0zM843.3 247.2l-.5 .1-1.2 5.6 .5-.1zM842.8 247.3l-1.5 .1-1.2 5.6 1.5-.1zM841.3 247.4l-2.5-.1-1.3 5.5 2.6 .2zM838.8 247.3l-3.5-.7-1.2 5.6 3.4 .6zM842.9 236.3l-.5-.4-1.3 5.5 .6 .4zM842.4 235.9l-.9-.1-1.3 5.5 .9 .1zM841.5 235.8l-.4-.1-1.2 5.5 .3 .1zM841.1 235.7l-.5 0-1.2 5.5 .5 0zM840.6 235.7l-1.5-.2-1.2 5.5 1.5 .2zM839.1 235.5l-2.4-.7-1.3 5.5 2.5 .7zM836.7 234.8l-3.2-1.4-1.3 5.5 3.2 1.4zM843.1 224.5l-.9-.3-1.2 5.5 .8 .3zM842.2 224.2l-.3-.1-1.3 5.4 .4 .2zM841.9 224.1l-.5-.2-1.2 5.5 .4 .1zM841.4 223.9l-1.4-.5-1.2 5.4 1.4 .6zM840 223.4l-2.1-1.2-1.3 5.4 2.2 1.2zM837.9 222.2l-2.8-2.1-1.3 5.4 2.8 2.1zM846.7 213.6l-.8-.5-1.2 5.4 .7 .5zM845.9 213.1l-.3-.2-1.2 5.4 .3 .2zM845.6 212.9l-.4-.2-1.2 5.4 .4 .2zM845.2 212.7l-1.2-.9-1.3 5.4 1.3 .9zM844 211.8l-1.8-1.6-1.3 5.3 1.8 1.7zM852.1 202.9l-.4-.3-1.2 5.4 .4 .3zM934.6 204l-.4 .3-.8 5.3 .4-.3zM934 204.6l-.7 .6-.8 5.3 .7-.6zM943.8 211.8l-1.8 1.6-.8 5.4 1.9-1.6zM942 213.4l-1.3 .8-.7 5.5 1.2-.9zM940.7 214.2l-.4 .3-.8 5.4 .5-.2zM940.3 214.5l-.3 .2-.8 5.4 .3-.2zM940 214.7l-.8 .4-.7 5.4 .7-.4zM950.5 222l-2.8 2-.7 5.4 2.8-2zM947.7 224l-2.2 1.1-.7 5.5 2.2-1.2zM945.5 225.1l-1.4 .5-.8 5.5 1.5-.5zM944.1 225.6l-.5 .1-.7 5.5 .4-.1zM943.6 225.7l-.3 .2-.8 5.4 .4-.1zM943.3 225.9l-.9 .2-.8 5.5 .9-.3z" fill="#5c5c5c" stroke="#5c5c5c" stroke-width=".6" stroke-linejoin="round"/>
<path d="M941.2 233.6l.1 .7 .2 .7 .6 .4 .9 .1 .3 .1 .5 0 1.5 .2 2.5 .7 3.2 1.4-.1 2.9-3.2 1.3-2.5 .6-1.5 .2-.5 0-.4 .1-.9 0-.6 .4-.2 .7-.1 .8-.1 .7 0 .7 .5 .5 .8 .3 .4 .2 .4 .1 1.4 .6 2.2 1.2 2.8 2.1-.8 2.8-3.5 .5-2.5 .1-1.6-.2-.4-.1-.4 0-.9-.2-.7 .2-.4 .6-.3 .8-.3 .7-.1 .7 .3 .6 .7 .5 .3 .2 .4 .2 1.3 .9 1.8 1.7 2.1 2.6-1.5 2.5-3.5-.2-2.5-.6-1.4-.5-.4-.2-.4-.1-.8-.3-.7 0-.6 .5-.5 .7-.5 .6-.3 .6 .2 .7 .6 .6 .2 .3 .4 .3 .9 1.1 1.4 2.1 1.4 3-2.1 2.2-3.4-1.1-2.2-1.1-1.3-.8-.4-.3-.3-.2-.7-.5-.7-.1-.7 .4-.6 .5-.6 .5-.5 .5 0 .7 .4 .8 .2 .3 .2 .4 .7 1.3 .8 2.2 .5 3.3-2.5 1.6-3-1.8-1.9-1.5-1-1.1-.3-.4-.3-.2-.6-.7-.6-.2-.8 .2-.7 .3-.7 .4-.6 .4-.2 .7 .2 .8 0 .3 .2 .5 .3 1.4 .2 2.4-.3 3.3-2.9 1-2.4-2.5-1.5-1.9-.7-1.2-.2-.5-.2-.3-.4-.8-.5-.3-.8 0-.8 .1-.8 .2-.7 .3-.4 .6 0 .8 0 .4 .1 .5-.1 1.4-.4 2.3-1.1 3.2-3.1 .3-1.8-2.9-.9-2.2-.4-1.4 0-.5-.2-.3-.1-.8-.5-.5-.8-.2-.8 0-.8 0-.7 .1-.5 .5-.2 .8-.2 .4 0 .4-.5 1.4-1 2.2-1.9 2.8-3-.4-1-3.2-.3-2.3 0-1.5 0-.4 0-.4 0-.8-.3-.6-.7-.4-.8-.2-.8-.2-.7 0-.6 .4-.4 .7-.2 .3-.2 .5-.8 1.2-1.6 1.9-2.5 2.3-2.8-1.1-.2-3.3 .3-2.4 .3-1.3 .2-.5 .1-.3 .2-.9-.1-.6-.6-.5-.7-.3-.7-.4-.8-.2-.7 .2-.5 .6-.3 .3-.3 .4-1.1 1-2 1.5-3 1.7-2.5-1.7 .7-3.3 .8-2.2 .7-1.3 .3-.4 .2-.3 .4-.7 .1-.7-.5-.6-.6-.5-.6-.5-.7-.4-.7 .1-.7 .5-.3 .1-.4 .3-1.3 .8-2.3 1-3.4 .9-2-2.2 1.5-3 1.4-2 1-1 .4-.3 .2-.3 .7-.6 .1-.7-.3-.6-.4-.7-.5-.6-.5-.5-.7-.1-.9 .3-.3 .1-.5 .2-1.4 .4-2.5 .5-3.6 .1-1.3-2.5 2.2-2.6 1.9-1.6 1.2-.9 .5-.2 .3-.2 .7-.4 .4-.6-.1-.7-.3-.8-.3-.7-.4-.6-.6-.3-.9 .2-.4 0-.5 .1-1.5 .1-2.6-.2-3.4-.6-.7-2.8 2.8-2 2.2-1.2 1.5-.5 .4-.1 .4-.1 .9-.3 .4-.5 .1-.7-.1-.8-.1-.7-.2-.7-.6-.4-.9-.1-.3-.1-.5 0-1.5-.2-2.5-.7-3.2-1.4 .1-2.9 3.2-1.3 2.5-.6 1.5-.2 .5 0 .4-.1 .9 0 .6-.4 .2-.7 .1-.8 .1-.7 0-.7-.5-.5-.8-.3-.4-.2-.4-.1-1.4-.6-2.2-1.2-2.8-2.1 .8-2.8 3.5-.5 2.5-.1 1.6 .2 .4 .1 .4 0 .9 .2 .7-.2 .4-.6 .3-.8 .3-.7 .1-.7-.3-.6-.7-.5-.3-.2-.4-.2-1.3-.9-1.8-1.7-2.1-2.6 1.5-2.5 3.5 .2 2.5 .6 1.4 .5 .4 .2 .4 .1 .8 .3 .7 0 .6-.5 .5-.7 .5-.6 .3-.6-.2-.7-.6-.6-.2-.3-.4-.3-.9-1.1-1.4-2.1-1.4-3 2.1-2.2 3.4 1.1 2.2 1.1 1.3 .8 .4 .3 .3 .2 .7 .5 .7 .1 .7-.4 .6-.5 .6-.5 .5-.5 0-.7-.4-.8-.2-.3-.2-.4-.7-1.3-.8-2.2-.5-3.3 2.5-1.6 3 1.8 1.9 1.5 1 1.1 .3 .4 .3 .2 .6 .7 .6 .2 .8-.2 .7-.3 .7-.4 .6-.4 .2-.7-.2-.8 0-.3-.2-.5-.3-1.4-.2-2.4 .3-3.3 2.9-1 2.4 2.5 1.5 1.9 .7 1.2 .2 .5 .2 .3 .4 .8 .5 .3 .8 0 .8-.1 .8-.2 .7-.3 .4-.6 0-.8 0-.4-.1-.5 .1-1.4 .4-2.3 1.1-3.2 3.1-.3 1.8 2.9 .9 2.2 .4 1.4 0 .5 .2 .3 .1 .8 .5 .5 .8 .2 .8 0 .8 0 .7-.1 .5-.5 .2-.8 .2-.4 0-.4 .5-1.4 1-2.2 1.9-2.8 3 .4 1 3.2 .3 2.3 0 1.5 0 .4 0 .4 0 .8 .3 .6 .7 .4 .8 .2 .8 .2 .7 0 .6-.4 .4-.7 .2-.3 .2-.5 .8-1.2 1.6-1.9 2.5-2.3 2.8 1.1 .2 3.3-.3 2.4-.3 1.3-.2 .5-.1 .3-.2 .9 .1 .6 .6 .5 .7 .3 .7 .4 .8 .2 .7-.2 .5-.6 .3-.3 .3-.4 1.1-1 2-1.5 3-1.7 2.5 1.7-.7 3.3-.8 2.2-.7 1.3-.3 .4-.2 .3-.4 .7-.1 .7 .5 .6 .6 .5 .6 .5 .7 .4 .7-.1 .7-.5 .3-.1 .4-.3 1.3-.8 2.3-1 3.4-.9 2 2.2-1.5 3-1.4 2-1 1-.4 .3-.2 .3-.7 .6-.1 .7 .3 .6 .4 .7 .5 .6 .5 .5 .7 .1 .9-.3 .3-.1 .5-.2 1.4-.4 2.5-.5 3.6-.1 1.3 2.5-2.2 2.6-1.9 1.6-1.2 .9-.5 .2-.3 .2-.7 .4-.4 .6 .1 .7 .3 .8 .3 .7 .4 .6 .6 .3 .9-.2 .4 0 .5-.1 1.5-.1 2.6 .2 3.4 .6 .7 2.8-2.8 2-2.2 1.2-1.5 .5-.4 .1-.4 .1-.9 .3-.4 .5-.1 .7 .1 .8z" fill="none" stroke="#0c0c0c" stroke-width="1.5" stroke-linejoin="round"/>
<path d="M942 228.9L941.3 234.3M943.7 230L943 235.5M951.7 232.4L951 237.9M951.6 235.3L950.9 240.8M943.6 237.5L942.8 243M941.8 238.6L941.1 244.1M941.6 240.1L940.9 245.6M943 241.6L942.2 247.1M950.1 245.7L949.4 251.3M949.3 248.5L948.6 254.1M940.9 248.8L940.2 254.4M939 249.5L938.2 255M938.4 250.9L937.6 256.5M939.3 252.7L938.5 258.3M945.2 258.3L944.4 263.9M943.7 260.8L942.9 266.4M935.5 259.2L934.7 264.8M933.4 259.4L932.6 265M932.4 260.6L931.6 266.3M932.9 262.6L932.1 268.2M937.2 269.3L936.4 275M935.1 271.5L934.3 277.2M927.5 268L926.7 273.7M925.5 267.8L924.6 273.5M924.2 268.8L923.4 274.5M924.2 270.8L923.3 276.5M926.6 278.3L925.7 284M924 279.9L923.2 285.6M917.6 274.9L916.7 280.6M915.6 274.2L914.7 279.9M914.2 274.9L913.3 280.6M913.6 276.8L912.7 282.5M914 284.6L913.1 290.4M911.1 285.6L910.2 291.4M906.1 279.3L905.2 285M904.4 278.1L903.5 283.9M902.8 278.5L901.9 284.2M901.8 280.2L900.8 285.9M900.2 287.9L899.3 293.7M897.2 288.2L896.2 294M893.9 281L892.9 286.7M892.5 279.5L891.5 285.2M890.9 279.4L889.9 285.2M889.5 280.9L888.5 286.6M886 288L884.9 293.8M882.9 287.6L881.9 293.4M881.6 279.9L880.6 285.6M880.7 278.1L879.6 283.8M879.1 277.7L878 283.4M877.3 278.8L876.3 284.5M872.1 285L871 290.7M869.3 283.9L868.2 289.6M870 276L868.9 281.8M869.5 274.1L868.4 279.8M868.1 273.4L867 279.1M866.1 274L865 279.7M859.4 278.8L858.3 284.6M857 277.2L855.8 282.9M859.7 269.7L858.5 275.4M859.7 267.7L858.5 273.4M858.5 266.7L857.3 272.4M856.4 266.9L855.2 272.6M848.7 270L847.5 275.7M846.7 267.9L845.5 273.5M851.2 261.2L850 266.9M851.7 259.3L850.5 265M850.8 258L849.6 263.7M848.8 257.8L847.5 263.4M840.5 259.1L839.2 264.7M839.1 256.5L837.9 262.2M845.2 251.1L844 256.7M846.2 249.4L845 255M845.7 247.9L844.4 253.5M843.7 247.2L842.5 252.8M835.3 246.6L834.1 252.2M834.7 243.8L833.4 249.4M841.9 239.9L840.7 245.5M843.4 238.5L842.1 244M843.2 236.9L841.9 242.5M841.5 235.8L840.2 241.3M833.5 233.4L832.2 238.9M833.6 230.5L832.3 236M841.6 228.3L840.4 233.8M843.4 227.2L842.1 232.7M843.6 225.7L842.3 231.2M842.2 224.2L841 229.7M835.1 220.1L833.8 225.5M835.9 217.3L834.6 222.7M844.3 217L843 222.4M846.2 216.3L845 221.8M846.8 214.9L845.6 220.3M845.9 213.1L844.7 218.5M840 207.5L838.8 212.9M841.5 205L840.3 210.4M849.7 206.6L848.5 212M851.8 206.4L850.6 211.8M852.8 205.2L851.6 210.5M852.3 203.2L851.1 208.6M848 196.5L846.8 201.8M850.1 194.3L848.9 199.6M857.7 197.8L856.5 203.1M859.7 198L858.6 203.3M861 197L859.8 202.3M861 195L859.9 200.3M858.6 187.5L857.5 192.8M861.2 185.9L860 191.2M867.6 190.9L866.5 196.2M869.6 191.6L868.5 196.9M871 190.9L869.9 196.2M871.6 189L870.5 194.3M871.2 181.2L870.1 186.4M874.1 180.2L873 185.4M879.1 186.5L878 191.8M880.8 187.7L879.7 192.9M882.4 187.3L881.3 192.6M883.4 185.6L882.4 190.9M885 177.9L883.9 183.1M888 177.6L887 182.8M891.3 184.8L890.3 190.1M892.7 186.3L891.7 191.6M894.3 186.4L893.3 191.6M895.7 184.9L894.7 190.2M899.2 177.8L898.3 183M902.3 178.2L901.3 183.4M903.6 185.9L902.6 191.2M904.5 187.7L903.6 193M906.1 188.1L905.2 193.4M907.9 187L906.9 192.3M913.1 180.8L912.2 186.1M915.9 181.9L915 187.2M915.2 189.8L914.3 195M915.7 191.7L914.8 197M917.1 192.4L916.2 197.7M919.1 191.8L918.2 197.1M925.8 187L924.9 192.2M928.2 188.6L927.4 193.9M925.5 196.1L924.7 201.4M925.5 198.1L924.7 203.4M926.7 199.1L925.9 204.4M928.8 198.9L928 204.2M936.5 195.8L935.7 201.1M938.5 197.9L937.7 203.3M934 204.6L933.2 209.9M933.5 206.5L932.7 211.8M934.4 207.8L933.6 213.1M936.4 208L935.7 213.4M944.7 206.7L944 212.1M946.1 209.3L945.3 214.6M940 214.7L939.2 220.1M939 216.4L938.2 221.8M939.5 217.9L938.8 223.3M941.5 218.6L940.7 224M949.9 219.2L949.1 224.6M950.5 222L949.8 227.4M943.3 225.9L942.5 231.3M941.8 227.3L941.1 232.8" fill="none" stroke="#141414" stroke-width="1"/>
<path d="M941.9 228.1l.1 .8 .3 .6 .5 .4 .9 .1 .4 .1 .5 0 1.5 .2 2.4 .7 3.2 1.4-.1 2.9-3.2 1.3-2.4 .6-1.5 .2-.6 0-.3 .1-.9 0-.6 .4-.3 .7-.1 .7-.1 .8 .1 .7 .4 .5 .9 .3 .3 .1 .5 .2 1.4 .5 2.1 1.2 2.8 2.1-.8 2.8-3.5 .5-2.5 .1-1.5-.2-.5-.1-.4 0-.9-.2-.6 .3-.4 .6-.3 .7-.3 .7-.2 .7 .3 .6 .8 .5 .3 .2 .4 .2 1.2 .9 1.8 1.6 2.2 2.7-1.5 2.5-3.5-.3-2.5-.5-1.4-.5-.5-.2-.3-.1-.8-.4-.7 .1-.6 .5-.5 .6-.5 .6-.3 .7 .2 .6 .6 .7 .2 .3 .4 .3 .9 1.1 1.4 2 1.4 3-2.1 2.2-3.3-1.1-2.3-1.1-1.3-.8-.3-.3-.4-.2-.7-.5-.7 0-.6 .3-.7 .5-.6 .5-.5 .6 0 .6 .5 .8 .1 .3 .3 .4 .6 1.3 .8 2.2 .6 3.3-2.6 1.6-2.9-1.8-2-1.5-1-1.1-.3-.4-.2-.2-.6-.7-.7-.2-.7 .2-.7 .3-.7 .4-.6 .4-.2 .6 .2 .9 0 .3 .2 .5 .3 1.3 .2 2.4-.3 3.3-2.9 1-2.4-2.4-1.5-1.9-.7-1.3-.2-.4-.2-.3-.3-.8-.6-.4-.8 0-.8 .2-.8 .2-.7 .3-.3 .6 0 .8 0 .4 0 .4 0 1.4-.5 2.4-1.1 3.1-3 .3-1.8-2.8-.9-2.2-.4-1.4-.1-.5-.1-.3-.1-.9-.5-.5-.8-.1-.8 0-.8-.1-.7 .2-.5 .5-.2 .8-.1 .3-.1 .5-.4 1.4-1.1 2.1-1.8 2.8-3.1-.4-.9-3.1-.4-2.4 0-1.4 .1-.5-.1-.3 .1-.9-.3-.6-.7-.3-.8-.2-.8-.2-.8 0-.6 .3-.4 .8-.2 .3-.2 .4-.7 1.3-1.6 1.8-2.5 2.4-2.8-1.1-.2-3.3 .3-2.4 .3-1.4 .2-.4 .1-.4 .3-.8-.2-.6-.6-.5-.7-.3-.7-.4-.8-.2-.6 .2-.6 .6-.3 .3-.3 .4-1 1-2 1.5-3.1 1.6-2.4-1.6 .7-3.3 .8-2.2 .7-1.3 .3-.4 .2-.3 .4-.7 0-.7-.4-.6-.6-.5-.6-.5-.7-.4-.7 .1-.7 .5-.4 .2-.3 .3-1.3 .7-2.3 1-3.4 .9-2-2.1 1.5-3 1.4-2 1-1.1 .4-.3 .2-.3 .7-.6 .1-.6-.3-.7-.4-.6-.5-.7-.5-.5-.7-.1-.8 .4-.4 0-.5 .3-1.4 .4-2.5 .4-3.5 .2-1.4-2.6 2.3-2.5 1.8-1.6 1.3-.8 .4-.3 .3-.2 .8-.4 .3-.6-.1-.7-.3-.7-.2-.8-.5-.6-.6-.2-.9 .1-.4 0-.5 .1-1.5 .1-2.5-.1-3.5-.7-.6-2.8 2.8-2 2.2-1.1 1.4-.5 .5-.1 .3-.2 .9-.2 .5-.5 .1-.7-.1-.8-.1-.8-.3-.6-.5-.4-.9-.1-.4-.1-.5 0-1.5-.2-2.4-.7-3.2-1.4 .1-2.9 3.2-1.3 2.4-.6 1.5-.2 .6 0 .3-.1 .9 0 .6-.4 .3-.7 .1-.7 .1-.8-.1-.7-.4-.5-.9-.3-.3-.1-.5-.2-1.4-.5-2.1-1.2-2.8-2.1 .8-2.8 3.5-.5 2.5-.1 1.5 .2 .5 .1 .4 0 .9 .2 .6-.3 .4-.6 .3-.7 .3-.7 .2-.7-.3-.6-.8-.5-.3-.2-.4-.2-1.2-.9-1.8-1.6-2.2-2.7 1.5-2.5 3.5 .3 2.5 .5 1.4 .5 .5 .2 .3 .1 .8 .4 .7-.1 .6-.5 .5-.6 .5-.6 .3-.7-.2-.6-.6-.7-.2-.3-.4-.3-.9-1.1-1.4-2-1.4-3 2.1-2.2 3.3 1.1 2.3 1.1 1.3 .8 .3 .3 .4 .2 .7 .5 .7 0 .6-.3 .7-.5 .6-.5 .5-.6 0-.6-.5-.8-.1-.3-.3-.4-.6-1.3-.8-2.2-.6-3.3 2.6-1.6 2.9 1.8 2 1.5 1 1.1 .3 .4 .2 .2 .6 .7 .7 .2 .7-.2 .7-.3 .7-.4 .6-.4 .2-.6-.2-.9 0-.3-.2-.5-.3-1.3-.2-2.4 .3-3.3 2.9-1 2.4 2.4 1.5 1.9 .7 1.3 .2 .4 .2 .3 .3 .8 .6 .4 .8 0 .8-.2 .8-.2 .7-.3 .3-.6 0-.8 0-.4 0-.4 0-1.4 .5-2.4 1.1-3.1 3-.3 1.8 2.8 .9 2.2 .4 1.4 .1 .5 .1 .3 .1 .9 .5 .5 .8 .1 .8 0 .8 .1 .7-.2 .5-.5 .2-.8 .1-.3 .1-.5 .4-1.4 1.1-2.1 1.8-2.8 3.1 .4 .9 3.1 .4 2.4 0 1.4-.1 .5 .1 .3-.1 .9 .3 .6 .7 .3 .8 .2 .8 .2 .8 0 .6-.3 .4-.8 .2-.3 .2-.4 .7-1.3 1.6-1.8 2.5-2.4 2.8 1.1 .2 3.3-.3 2.4-.3 1.4-.2 .4-.1 .4-.3 .8 .2 .6 .6 .5 .7 .3 .7 .4 .8 .2 .6-.2 .6-.6 .3-.3 .3-.4 1-1 2-1.5 3.1-1.6 2.4 1.6-.7 3.3-.8 2.2-.7 1.3-.3 .4-.2 .3-.4 .7 0 .7 .4 .6 .6 .5 .6 .5 .7 .4 .7-.1 .7-.5 .4-.2 .3-.3 1.3-.7 2.3-1 3.4-.9 2 2.1-1.5 3-1.4 2-1 1.1-.4 .3-.2 .3-.7 .6-.1 .6 .3 .7 .4 .6 .5 .7 .5 .5 .7 .1 .8-.4 .4 0 .5-.3 1.4-.4 2.5-.4 3.5-.2 1.4 2.6-2.3 2.5-1.8 1.6-1.3 .8-.4 .3-.3 .2-.8 .4-.3 .6 .1 .7 .3 .7 .2 .8 .5 .6 .6 .2 .9-.1 .4 0 .5-.1 1.5-.1 2.5 .1 3.5 .7 .6 2.8-2.8 2-2.2 1.1-1.4 .5-.5 .1-.3 .2-.9 .2-.5 .5-.1 .7 .1 .8z" fill="#c9c9c9" stroke="#0e0e0e" stroke-width="1.35" stroke-linejoin="round"/>
<path d="M1048.9 266.2l0-.3-1.5 4.7 0 .2zM1048.8 265.7l-.1-.5-1.5 4.7 .1 .5zM1041.7 267.9l-.2-1.5-1.6 4.7 .3 1.4zM1041.5 266.4l0-.8-1.6 4.6 0 .9zM1041.5 265.6l0-.3-1.5 4.6-.1 .3zM1041.5 265.3l0-.2-1.6 4.6 .1 .2zM1041.5 265.1l0-.5-1.5 4.6-.1 .5zM1034.1 267.6l-.1-2.1-1.5 4.7 .1 2zM1034 265.5l.2-1.4-1.6 4.7-.1 1.4zM1034.2 264.1l.2-.8-1.6 4.6-.2 .9zM1034.5 263l0-.2-1.5 4.6-.1 .2zM1034.5 262.8l.2-.5-1.6 4.6-.1 .5zM1026.8 263.5l.4-2-1.6 4.7-.4 2zM1028.6 258.5l0-.3-1.6 4.6 0 .4zM1023.7 253.5l.1-.4-1.6 4.6-.1 .4zM1020.3 247.1l0-.4-1.7 4.6 .1 .4zM1013.8 245.1l-.4-1.7-1.7 4.5 .4 1.7zM1018.5 240.6l0-.5-1.6 4.5-.1 .5zM1018.5 240.1l0-.4-1.7 4.5 .1 .4zM1018.5 239.7l-.1-.5-1.6 4.5 0 .5zM1012.7 237.1l0-1.8-1.7 4.5 0 1.8zM1018.5 233.3l.1-.4-1.7 4.4 0 .5zM1018.6 232.9l0-.5-1.6 4.5-.1 .4zM1018.6 232.4l0-.4-1.6 4.4 0 .5zM1013.6 229l.4-1.7-1.7 4.5-.4 1.7zM1020.5 225.8l.1-.4-1.6 4.5-.1 .4zM1024.2 219.5l-.1-.4-1.6 4.4 .1 .4zM1029.2 214.6l0-.4-1.6 4.4 0 .4zM1027.8 211.2l-.3-2-1.6 4.4 .3 1.9zM1035.2 211l.1-.4-1.5 4.4-.1 .3zM1035.2 210.1l0-.2-1.6 4.4 0 .2zM1035.1 209.6l-.2-.8-1.6 4.3 .2 .9zM1034.9 208.8l-.1-1.5-1.6 4.4 .1 1.4zM1034.8 207.3l.1-2-1.5 4.4-.2 2zM1042.2 208.5l0-.5-1.5 4.3 0 .5zM1042.2 208l0-.2-1.5 4.3 0 .2zM1042.2 207.8l0-.3-1.5 4.3 0 .3zM1042.2 207.5l0-.9-1.5 4.4 0 .8zM1042.2 206.6l.3-1.4-1.5 4.3-.3 1.5zM1049.4 208l.1-.5-1.4 4.4-.2 .5zM1049.6 207.3l.1-.3-1.5 4.4-.1 .3zM1049.7 207l.2-.8-1.5 4.4-.2 .8z" fill="#2e2e2e" stroke="#2e2e2e" stroke-width=".6" stroke-linejoin="round"/>
<path d="M1077.3 239.5l-.1 .4-1.4 4.5 .2-.4zM1075.5 246.5l-.2 .4-1.3 4.6 .2-.5zM1075.3 246.9l-.1 .5-1.4 4.5 .2-.4zM1071.7 253.3l-.2 .4-1.4 4.6 .2-.4zM1056.3 265.1l-.1-.3-1.5 4.7 .1 .2zM1056.1 264.6l-.3-.4-1.4 4.6 .2 .5zM1049.7 268.4l-.6-1.4-1.5 4.7 .6 1.3zM1049.1 267l-.2-.8-1.5 4.6 .2 .9zM1048.9 265.9l-.1-.2-1.5 4.7 .1 .2zM1046.2 265.7l-.1 .2-1.5 4.6 0-.2zM1045.8 267l-.6 1.3-1.5 4.7 .6-1.4zM1042.3 269.8l-.6-1.9-1.5 4.6 .6 2zM1039.2 264l-.3 .4-1.5 4.7 .2-.5zM1038.8 264.6l-.1 .3-1.6 4.6 .1-.2zM1034.7 262.3l-.1-.4-1.6 4.6 .1 .4zM1023.8 253.1l-.2-.4-1.6 4.6 .2 .4zM1016.9 252.6l-.8-1.5-1.7 4.6 .9 1.5zM1020.3 246.7l-.2-.4-1.6 4.5 .1 .5zM1020.1 246.3l-.2-.5-1.6 4.6 .2 .4zM1018.4 239.2l-.1-.4-1.7 4.5 .2 .4zM1020.6 225.4l-.2-.3-1.6 4.4 .2 .4zM1022 216.5l-.8-1.8-1.6 4.3 .8 1.9zM1028.9 213.8l-.1-.2-1.6 4.3 .1 .2zM1028.7 213.3l-.4-.8-1.6 4.4 .4 .8zM1028.3 212.5l-.5-1.3-1.6 4.3 .5 1.4zM1035.3 210.6l-.1-.5-1.6 4.4 .2 .5zM1035.2 209.9l-.1-.3-1.6 4.4 .1 .3zM1061.3 209.9l-.1 .3-1.4 4.4 .1-.3zM1068.5 211.7l-.5 1.3-1.4 4.4 .5-1.4zM1068 213l-.4 .8-1.4 4.4 .4-.8zM1067.4 214l-.1 .2-1.4 4.4 .1-.2zM1075.1 215.3l-.9 1.8-1.4 4.4 .9-1.8z" fill="#3a3a3a" stroke="#3a3a3a" stroke-width=".6" stroke-linejoin="round"/>
<path d="M1075.8 246.1l-.3 .4-1.3 4.5 .2-.3zM1079.2 251.8l-.8 1.5-1.4 4.6 .9-1.5zM1072.2 252.5l-.2 .4-1.4 4.6 .3-.4zM1072 252.9l-.3 .4-1.4 4.6 .3-.4zM1074.5 258.5l-1.2 1.3-1.4 4.6 1.2-1.2zM1066.8 258.2l-.3 .4-1.4 4.6 .3-.3zM1063.8 263l-.6-.7-1.4 4.7 .6 .6zM1063.2 262.3l-.2-.2-1.4 4.6 .2 .3zM1062.9 262l-.4-.4-1.4 4.6 .3 .4zM1059.1 268.5l-1.5-1.5-1.4 4.7 1.4 1.4zM1057.6 267l-.9-1.1-1.4 4.6 .9 1.2zM1056.7 265.9l-.4-.8-1.5 4.6 .5 .8zM1056.2 264.8l-.1-.2-1.5 4.7 .1 .2zM1053.7 264.4l-.2 .3-1.5 4.7 .2-.4zM1050.8 270.1l-1.1-1.7-1.5 4.6 1.1 1.8zM1048.7 265.2l-.3-.3-1.5 4.7 .3 .3zM1046.6 264.9l-.3 .3-1.5 4.6 .2-.3zM1045.2 268.3l-1.1 1.7-1.5 4.7 1.1-1.7zM1041.5 264.6l-.2-.4-1.5 4.7 .2 .3zM1038.9 264.4l-.1 .2-1.6 4.7 .2-.2zM1038.7 264.9l-.5 .7-1.5 4.7 .4-.8zM1038.2 265.6l-.9 1.2-1.5 4.6 .9-1.1zM1032.5 261.2l-.3 .4-1.6 4.6 .4-.4zM1032 261.7l-.1 .3-1.6 4.6 .2-.2zM1031.9 262l-.7 .6-1.6 4.6 .7-.6zM1028.6 258.2l-.2-.4-1.6 4.6 .2 .4zM1021.8 259.2l-1.2-1.3-1.6 4.6 1.2 1.3zM1023.6 252.7l-.3-.4-1.6 4.6 .3 .4zM1023.3 252.3l-.2-.3-1.7 4.5 .3 .4zM1019.9 245.8l-.2-.3-1.6 4.5 .2 .4zM1018.6 232l-.3-.3-1.6 4.4 .3 .3zM1017.7 223l-1.2-1.6-1.7 4.4 1.3 1.6zM1024.1 219.1l-.3-.4-1.7 4.5 .4 .3zM1023.8 218.7l-.2-.1-1.6 4.4 .1 .2zM1023.4 218.4l-.6-.7-1.6 4.4 .6 .7zM1022.8 217.7l-.8-1.2-1.6 4.4 .8 1.2zM1029.2 214.2l-.3-.4-1.6 4.3 .3 .5zM1028.8 213.6l-.1-.3-1.6 4.4 .1 .2zM1067.6 213.8l-.2 .2-1.4 4.4 .2-.2zM1067.3 214.2l-.2 .5-1.4 4.3 .2-.4zM1074.2 217.1l-.9 1.2-1.3 4.4 .8-1.2zM1073.3 218.3l-.5 .7-1.4 4.4 .6-.7zM1072.5 219.1l-.1 .2-1.4 4.4 .2-.1zM1072.4 219.3l-.4 .4-1.4 4.4 .4-.4zM1079.6 222.1l-1.3 1.6-1.4 4.4 1.4-1.6zM1075.6 225.7l-.2 .4-1.4 4.4 .2-.4zM1077.5 232.3l-.3 .3-1.3 4.5 .2-.3z" fill="#494949" stroke="#494949" stroke-width=".6" stroke-linejoin="round"/>
<path d="M1083 237.9l-1.9 .8-1.3 4.5 1.9-.8zM1081.1 238.7l-1.5 .4-1.3 4.5 1.5-.4zM1079.6 239.1l-.9 .1-1.3 4.5 .9-.1zM1078.7 239.2l-.3 0-1.3 4.5 .3 0zM1078.4 239.2l-.2 0-1.3 4.5 .2 0zM1078.2 239.2l-.5 0-1.4 4.6 .6-.1zM1077.7 239.2l-.4 .3-1.3 4.5 .3-.2zM1081.7 245.9l-2.1 .3-1.3 4.6 2.1-.4zM1079.6 246.2l-1.5 0-1.3 4.6 1.5 0zM1078.1 246.2l-.9-.1-1.3 4.6 .9 .1zM1077.2 246.1l-.3 0-1.3 4.5 .3 .1zM1076.9 246.1l-.2 0-1.4 4.5 .3 0zM1076.7 246.1l-.5-.1-1.4 4.5 .5 .1zM1076.2 246l-.4 .1-1.4 4.6 .4-.2zM1078.4 253.3l-2.1-.1-1.4 4.6 2.1 .1zM1076.3 253.2l-1.5-.3-1.4 4.6 1.5 .3zM1074.8 252.9l-.8-.3-1.4 4.6 .8 .3zM1074 252.6l-.3-.2-1.4 4.6 .3 .2zM1073.7 252.4l-.2 0-1.4 4.6 .2 0zM1073.5 252.4l-.5-.2-1.4 4.6 .5 .2zM1073 252.2l-.4 0-1.4 4.6 .4 0zM1072.6 252.2l-.4 .3-1.3 4.6 .3-.3zM1073.3 259.8l-2-.6-1.4 4.6 2 .6zM1071.3 259.2l-1.4-.6-1.3 4.6 1.3 .6zM1069.9 258.6l-.7-.5-1.4 4.6 .8 .5zM1069.2 258.1l-.2-.2-1.4 4.6 .2 .2zM1069 257.9l-.2-.1-1.4 4.6 .2 .1zM1068.8 257.8l-.5-.3-1.3 4.6 .4 .3zM1068.3 257.5l-.4-.1-1.4 4.6 .5 .1zM1067.9 257.4l-.4 .2-1.4 4.6 .4-.2zM1067.5 257.6l-.3 .3-1.4 4.7 .3-.4zM1067.2 257.9l-.4 .3-1.4 4.7 .4-.3zM1068.2 264l-1.5 1-1.4 4.6 1.5-1zM1066.7 265l-1.8-1.1-1.4 4.6 1.8 1.1zM1064.9 263.9l-1.1-.9-1.4 4.6 1.1 .9zM1063 262.1l-.1-.1-1.5 4.6 .2 .1zM1062.5 261.6l-.4-.2-1.4 4.6 .4 .2zM1062.1 261.4l-.4 .1-1.4 4.7 .4-.2zM1061.7 261.5l-.4 .2-1.5 4.7 .5-.2zM1061.3 261.7l-.5 .2-1.4 4.7 .4-.2zM1060.8 261.9l-.3 .3-1.5 4.7 .4-.3zM1060.8 267.9l-1.7 .6-1.5 4.6 1.7-.6zM1055.8 264.2l-.3-.2-1.5 4.6 .4 .2zM1055.5 264l-.5 0-1.4 4.6 .4 0zM1055 264l-.4 .1-1.5 4.6 .5-.1zM1054.6 264.1l-.5 .1-1.5 4.6 .5-.1zM1054.1 264.2l-.4 .2-1.5 4.6 .4-.2zM1052.6 269.9l-1.8 .2-1.5 4.7 1.8-.2zM1048.4 264.9l-.4-.1-1.5 4.7 .4 .1zM1048 264.8l-.5 0-1.5 4.7 .5 0zM1047.5 264.8l-.5 0-1.5 4.6 .5 .1zM1047 264.8l-.4 .1-1.6 4.6 .5-.1zM1044.1 270l-1.8-.2-1.5 4.7 1.8 .2zM1041.3 264.2l-.4-.2-1.5 4.7 .4 .2zM1040.9 264l-.5-.1-1.5 4.6 .5 .2zM1040.4 263.9l-.4-.1-1.6 4.6 .5 .1zM1040 263.8l-.5 0-1.5 4.6 .4 0zM1039.5 263.8l-.3 .2-1.6 4.6 .4-.2zM1037.3 266.8l-1.5 1.4-1.5 4.6 1.5-1.4zM1035.8 268.2l-1.7-.6-1.5 4.6 1.7 .6zM1034.6 261.9l-.4-.3-1.5 4.7 .3 .2zM1034.2 261.6l-.4-.2-1.6 4.6 .5 .3zM1033.8 261.4l-.4-.2-1.6 4.6 .4 .2zM1033.4 261.2l-.5-.1-1.5 4.6 .4 .1zM1032.9 261.1l-.4 .1-1.5 4.6 .4-.1zM1032.2 261.6l-.2 .1-1.5 4.7 .1-.2zM1031.2 262.6l-1.1 .9-1.6 4.6 1.1-.9zM1030.1 263.5l-1.8 1-1.6 4.7 1.8-1.1zM1028.3 264.5l-1.5-1-1.6 4.7 1.5 1zM1028.4 257.8l-.4-.3-1.6 4.6 .4 .3zM1028 257.5l-.4-.3-1.6 4.6 .4 .3zM1027.6 257.2l-.4-.2-1.6 4.6 .4 .2zM1027.2 257l-.4 0-1.6 4.6 .4 0zM1026.8 257l-.4 .3-1.6 4.6 .4-.3zM1026.4 257.3l-.2 .1-1.6 4.6 .2-.1zM1026.2 257.4l-.2 .2-1.7 4.6 .3-.2zM1026 257.6l-.8 .4-1.6 4.7 .7-.5zM1025.2 258l-1.4 .6-1.6 4.7 1.4-.6zM1023.8 258.6l-2 .6-1.6 4.6 2-.5zM1023.1 252l-.4-.3-1.6 4.5 .3 .3zM1022.7 251.7l-.4-.1-1.6 4.6 .4 0zM1022.3 251.6l-.5 .2-1.6 4.6 .5-.2zM1021.8 251.8l-.2 0-1.6 4.6 .2 0zM1021.6 251.8l-.3 .2-1.6 4.5 .3-.1zM1021.3 252l-.8 .2-1.7 4.6 .9-.3zM1020.5 252.2l-1.5 .3-1.6 4.6 1.4-.3zM1019 252.5l-2.1 .1-1.6 4.6 2.1-.1zM1019.7 245.5l-.4-.2-1.6 4.6 .4 .1zM1019.3 245.3l-.5 .1-1.7 4.5 .6 0zM1018.8 245.4l-.2 0-1.7 4.5 .2 0zM1018.6 245.4l-.3 .1-1.7 4.5 .3-.1zM1018.3 245.5l-.9 0-1.7 4.6 .9-.1zM1017.4 245.5l-1.5 0-1.7 4.5 1.5 .1zM1015.9 245.5l-2.1-.4-1.7 4.5 2.1 .4zM1018.3 238.8l-.3-.3-1.7 4.6 .3 .2zM1018 238.5l-.6 0-1.6 4.5 .5 .1zM1017.4 238.5l-.2-.1-1.7 4.6 .3 0zM1017.2 238.4l-.3 0-1.7 4.6 .3 0zM1016.9 238.4l-.9-.1-1.7 4.5 .9 .2zM1016 238.3l-1.4-.4-1.7 4.5 1.4 .4zM1014.6 237.9l-1.9-.8-1.7 4.5 1.9 .8zM1018.3 231.7l-.5-.2-1.6 4.5 .5 .1zM1017.8 231.5l-.2-.1-1.6 4.5 .2 .1zM1017.6 231.4l-.3-.1-1.6 4.5 .3 .1zM1017.3 231.3l-.8-.3-1.7 4.5 .9 .3zM1016.5 231l-1.3-.7-1.7 4.4 1.3 .8zM1015.2 230.3l-1.6-1.3-1.7 4.5 1.6 1.2zM1020.4 225.1l-.4-.3-1.7 4.4 .5 .3zM1020 224.8l-.2-.2-1.6 4.5 .1 .1zM1019.8 224.6l-.3-.1-1.6 4.4 .3 .2zM1019.5 224.5l-.7-.5-1.6 4.4 .7 .5zM1018.8 224l-1.1-1-1.6 4.4 1.1 1zM1023.6 218.6l-.2-.2-1.6 4.4 .2 .2zM1072.8 219l-.3 .1-1.3 4.5 .2-.2zM1078.3 223.7l-1.1 1-1.4 4.4 1.1-1zM1077.2 224.7l-.7 .5-1.4 4.4 .7-.5zM1076.5 225.2l-.3 .1-1.4 4.4 .3-.1zM1076.2 225.3l-.2 .1-1.3 4.5 .1-.2zM1076 225.4l-.4 .3-1.4 4.4 .5-.2zM1082.3 229.8l-1.7 1.2-1.3 4.5 1.7-1.2zM1080.6 231l-1.3 .7-1.3 4.5 1.3-.7zM1079.3 231.7l-.8 .3-1.4 4.5 .9-.3zM1078.5 232l-.3 .1-1.3 4.5 .2-.1zM1078.2 232.1l-.2 .1-1.4 4.5 .3-.1zM1078 232.2l-.5 .1-1.4 4.5 .5-.1z" fill="#5c5c5c" stroke="#5c5c5c" stroke-width=".6" stroke-linejoin="round"/>
<path d="M1075.9 238l0 .5 .2 .4 .3 .2 .5 .1 .3 0 .3 0 .9 .2 1.4 .4 1.9 .8 0 1.8-1.9 .8-1.5 .4-.9 .1-.3 0-.2 0-.6 .1-.3 .2-.2 .4 0 .5-.1 .4 0 .5 .3 .3 .5 .1 .2 .1 .3 .1 .9 .3 1.3 .8 1.6 1.2-.4 1.7-2.1 .4-1.5 0-.9-.1-.3-.1-.3 0-.5-.1-.4 .2-.2 .3-.2 .5-.2 .4-.1 .4 .2 .4 .5 .3 .1 .1 .3 .2 .7 .5 1.1 1 1.3 1.6-.9 1.5-2.1-.1-1.5-.3-.8-.3-.3-.2-.2 0-.5-.2-.4 0-.3 .3-.3 .4-.3 .4-.2 .4 .1 .4 .4 .3 .1 .2 .2 .2 .6 .7 .8 1.2 .8 1.9-1.2 1.2-2-.6-1.3-.6-.8-.5-.2-.2-.2-.1-.4-.3-.5-.1-.4 .2-.3 .4-.4 .3-.3 .3 0 .4 .3 .5 .1 .2 .1 .2 .4 .8 .5 1.4 .3 1.9-1.5 1-1.8-1.1-1.1-.9-.6-.6-.2-.3-.2-.1-.3-.4-.4-.2-.4 .2-.5 .2-.4 .2-.4 .3-.1 .3 .2 .5 0 .2 .1 .3 .2 .9 .1 1.4-.2 2-1.7 .6-1.4-1.4-.9-1.2-.5-.8-.1-.2-.1-.2-.2-.5-.4-.2-.4 0-.5 .1-.5 .1-.4 .2-.2 .4 0 .5 0 .2 0 .3 0 .8-.3 1.5-.6 1.9-1.8 .2-1.1-1.8-.6-1.3-.2-.9 0-.2-.1-.2-.1-.5-.3-.3-.4-.1-.5 0-.5-.1-.5 .1-.2 .3-.2 .5 0 .2-.1 .3-.2 .8-.6 1.4-1.1 1.7-1.8-.2-.6-2-.3-1.4 0-.9 .1-.3-.1-.2 .1-.5-.2-.3-.4-.2-.5-.2-.5-.1-.4 0-.4 .2-.2 .5-.2 .2-.1 .2-.4 .8-.9 1.1-1.5 1.4-1.7-.6-.1-2 .1-1.4 .2-.9 .1-.3 .1-.2 .1-.5-.1-.4-.3-.2-.5-.3-.4-.2-.4-.1-.4 .1-.4 .4-.1 .2-.2 .2-.7 .6-1.1 .9-1.8 1.1-1.5-1 .4-2 .5-1.4 .4-.8 .2-.2 .1-.2 .2-.4 0-.4-.2-.4-.4-.3-.4-.3-.4-.2-.4 0-.4 .3-.2 .1-.3 .2-.7 .5-1.4 .6-2 .5-1.2-1.3 .9-1.8 .8-1.2 .6-.7 .2-.2 .2-.1 .4-.4 .1-.4-.2-.4-.3-.4-.3-.4-.3-.3-.4 0-.5 .2-.2 0-.3 .1-.9 .3-1.4 .3-2.1 .1-.9-1.5 1.4-1.6 1.1-1 .7-.5 .3-.1 .1-.2 .5-.2 .2-.4-.1-.4-.1-.5-.2-.4-.2-.4-.4-.1-.6 0-.2 0-.3 .1-.9 .1-1.5-.1-2.1-.4-.4-1.7 1.7-1.2 1.3-.7 .9-.3 .2-.1 .3-.1 .5-.1 .2-.3 .1-.5-.1-.4 0-.5-.2-.4-.3-.2-.5-.1-.3 0-.3 0-.9-.2-1.4-.4-1.9-.8 0-1.8 1.9-.8 1.5-.4 .9-.1 .3 0 .2 0 .6-.1 .3-.2 .2-.4 0-.5 .1-.4 0-.5-.3-.3-.5-.1-.2-.1-.3-.1-.9-.3-1.3-.8-1.6-1.2 .4-1.7 2.1-.4 1.5 0 .9 .1 .3 .1 .3 0 .5 .1 .4-.2 .2-.3 .2-.5 .2-.4 .1-.4-.2-.4-.5-.3-.1-.1-.3-.2-.7-.5-1.1-1-1.3-1.6 .9-1.5 2.1 .1 1.5 .3 .8 .3 .3 .2 .2 0 .5 .2 .4 0 .3-.3 .3-.4 .3-.4 .2-.4-.1-.4-.4-.3-.1-.2-.2-.2-.6-.7-.8-1.2-.8-1.9 1.2-1.2 2 .6 1.3 .6 .8 .5 .2 .2 .2 .1 .4 .3 .5 .1 .4-.2 .3-.4 .4-.3 .3-.3 0-.4-.3-.5-.1-.2-.1-.2-.4-.8-.5-1.4-.3-1.9 1.5-1 1.8 1.1 1.1 .9 .6 .6 .2 .3 .2 .1 .3 .4 .4 .2 .4-.2 .5-.2 .4-.2 .4-.3 .1-.3-.2-.5 0-.2-.1-.3-.2-.9-.1-1.4 .2-2 1.7-.6 1.4 1.4 .9 1.2 .5 .8 .1 .2 .1 .2 .2 .5 .4 .2 .4 0 .5-.1 .5-.1 .4-.2 .2-.4 0-.5 0-.2 0-.3 0-.8 .3-1.5 .6-1.9 1.8-.2 1.1 1.8 .6 1.3 .2 .9 0 .2 .1 .2 .1 .5 .3 .3 .4 .1 .5 0 .5 .1 .5-.1 .2-.3 .2-.5 0-.2 .1-.3 .2-.8 .6-1.4 1.1-1.7 1.8 .2 .6 2 .3 1.4 0 .9-.1 .3 .1 .2-.1 .5 .2 .3 .4 .2 .5 .2 .5 .1 .4 0 .4-.2 .2-.5 .2-.2 .1-.2 .4-.8 .9-1.1 1.5-1.4 1.7 .6 .1 2-.1 1.4-.2 .9-.1 .3-.1 .2-.1 .5 .1 .4 .3 .2 .5 .3 .4 .2 .4 .1 .4-.1 .4-.4 .1-.2 .2-.2 .7-.6 1.1-.9 1.8-1.1 1.5 1-.4 2-.5 1.4-.4 .8-.2 .2-.1 .2-.2 .4 0 .4 .2 .4 .4 .3 .4 .3 .4 .2 .4 0 .4-.3 .2-.1 .3-.2 .7-.5 1.4-.6 2-.5 1.2 1.3-.9 1.8-.8 1.2-.6 .7-.2 .2-.2 .1-.4 .4-.1 .4 .2 .4 .3 .4 .3 .4 .3 .3 .4 0 .5-.2 .2 0 .3-.1 .9-.3 1.4-.3 2.1-.1 .9 1.5-1.4 1.6-1.1 1-.7 .5-.3 .1-.1 .2-.5 .2-.2 .4 .1 .4 .1 .5 .2 .4 .2 .4 .4 .1 .6 0 .2 0 .3-.1 .9-.1 1.5 .1 2.1 .4 .4 1.7-1.7 1.2-1.3 .7-.9 .3-.2 .1-.3 .1-.5 .1-.2 .3-.1 .5 .1 .4z" fill="none" stroke="#0c0c0c" stroke-width="1.5" stroke-linejoin="round"/>
<path d="M1077.3 234L1075.9 238.5M1078.3 234.7L1076.9 239.2M1083 236.1L1081.7 240.6M1083 237.9L1081.7 242.4M1078.2 239.2L1076.9 243.7M1077.2 239.9L1075.8 244.4M1077.1 240.8L1075.7 245.3M1077.9 241.7L1076.5 246.2M1082.1 244.2L1080.8 248.7M1081.7 245.9L1080.4 250.4M1076.7 246.1L1075.3 250.6M1075.5 246.5L1074.2 251M1075.2 247.4L1073.8 251.9M1075.7 248.4L1074.4 253M1079.2 251.8L1077.9 256.4M1078.4 253.3L1077 257.9M1073.5 252.4L1072.1 257M1072.2 252.5L1070.9 257.1M1071.7 253.3L1070.3 257.9M1071.9 254.5L1070.6 259M1074.5 258.5L1073.1 263.2M1073.3 259.8L1071.9 264.4M1068.8 257.8L1067.4 262.4M1067.5 257.6L1066.1 262.2M1066.8 258.2L1065.4 262.9M1066.8 259.4L1065.4 264.1M1068.2 264L1066.8 268.6M1066.7 265L1065.3 269.6M1062.9 262L1061.4 266.6M1061.7 261.5L1060.3 266.2M1060.8 261.9L1059.4 266.6M1060.5 263.1L1059.1 267.7M1060.8 267.9L1059.3 272.5M1059.1 268.5L1057.6 273.1M1056.1 264.6L1054.6 269.3M1055 264L1053.6 268.6M1054.1 264.2L1052.6 268.8M1053.5 265.2L1052 269.9M1052.6 269.9L1051.1 274.6M1050.8 270.1L1049.3 274.8M1048.8 265.7L1047.3 270.4M1048 264.8L1046.5 269.5M1047 264.8L1045.5 269.4M1046.2 265.7L1044.6 270.3M1044.1 270L1042.6 274.7M1042.3 269.8L1040.8 274.5M1041.5 265.1L1039.9 269.7M1040.9 264L1039.4 268.7M1040 263.8L1038.4 268.4M1038.9 264.4L1037.4 269.1M1035.8 268.2L1034.3 272.8M1034.1 267.6L1032.6 272.2M1034.5 262.8L1033 267.4M1034.2 261.6L1032.7 266.3M1033.4 261.2L1031.8 265.8M1032.2 261.6L1030.6 266.2M1028.3 264.5L1026.7 269.2M1026.8 263.5L1025.2 268.2M1028.4 259L1026.8 263.6M1028.4 257.8L1026.8 262.4M1027.6 257.2L1026 261.8M1026.4 257.3L1024.8 261.9M1021.8 259.2L1020.2 263.8M1020.6 257.9L1019 262.5M1023.3 253.9L1021.7 258.5M1023.6 252.7L1022 257.3M1023.1 252L1021.4 256.5M1021.8 251.8L1020.2 256.4M1016.9 252.6L1015.3 257.2M1016.1 251.1L1014.4 255.7M1019.7 247.8L1018 252.3M1020.3 246.7L1018.6 251.3M1019.9 245.8L1018.3 250.4M1018.8 245.4L1017.1 249.9M1013.8 245.1L1012.1 249.6M1013.4 243.4L1011.7 247.9M1017.7 241L1016.1 245.5M1018.5 240.1L1016.9 244.6M1018.4 239.2L1016.8 243.7M1017.4 238.5L1015.8 243M1012.7 237.1L1011 241.6M1012.7 235.3L1011 239.8M1017.5 234L1015.8 238.5M1018.5 233.3L1016.9 237.8M1018.6 232.4L1017 236.9M1017.8 231.5L1016.2 236M1013.6 229L1011.9 233.5M1014 227.3L1012.3 231.8M1019 227.1L1017.4 231.6M1020.2 226.7L1018.5 231.2M1020.5 225.8L1018.9 230.3M1020 224.8L1018.3 229.2M1016.5 221.4L1014.8 225.8M1017.3 219.9L1015.7 224.3M1022.2 220.8L1020.6 225.2M1023.5 220.7L1021.8 225.1M1024 219.9L1022.4 224.3M1023.8 218.7L1022.1 223.2M1021.2 214.7L1019.6 219M1022.4 213.4L1020.8 217.8M1026.9 215.4L1025.3 219.8M1028.2 215.6L1026.6 220M1028.9 215L1027.3 219.3M1028.9 213.8L1027.3 218.1M1027.5 209.2L1025.9 213.6M1029 208.2L1027.4 212.6M1032.8 211.2L1031.3 215.6M1034 211.7L1032.4 216M1034.9 211.3L1033.3 215.6M1035.2 210.1L1033.6 214.5M1034.9 205.3L1033.4 209.7M1036.6 204.7L1035.1 209.1M1039.6 208.6L1038.1 212.9M1040.7 209.2L1039.1 213.6M1041.6 209L1040.1 213.4M1042.2 208L1040.7 212.3M1043.1 203.3L1041.6 207.6M1044.9 203.1L1043.4 207.4M1046.9 207.5L1045.4 211.8M1047.7 208.4L1046.2 212.7M1048.7 208.4L1047.2 212.8M1049.5 207.5L1048.1 211.9M1051.6 203.2L1050.1 207.5M1053.4 203.4L1051.9 207.7M1054.2 208.1L1052.8 212.5M1054.8 209.2L1053.3 213.5M1055.7 209.4L1054.3 213.8M1056.8 208.8L1055.3 213.1M1059.9 205L1058.4 209.4M1061.6 205.6L1060.1 210M1061.2 210.4L1059.7 214.8M1061.5 211.6L1060 215.9M1062.3 212L1060.9 216.4M1063.5 211.6L1062.1 216M1067.4 208.7L1066 213M1068.9 209.7L1067.5 214M1067.3 214.2L1065.9 218.6M1067.3 215.4L1065.9 219.8M1068.1 216L1066.7 220.4M1069.3 215.9L1067.9 220.3M1073.9 214L1072.5 218.4M1075.1 215.3L1073.7 219.7M1072.4 219.3L1071 223.7M1072.1 220.5L1070.7 224.9M1072.6 221.2L1071.3 225.7M1073.9 221.4L1072.5 225.8M1078.8 220.6L1077.4 225M1079.6 222.1L1078.3 226.5M1076 225.4L1074.7 229.9M1075.4 226.5L1074.1 230.9M1075.8 227.4L1074.4 231.8M1076.9 227.8L1075.6 232.3M1081.9 228.1L1080.6 232.6M1082.3 229.8L1081 234.3M1078 232.2L1076.6 236.7M1077.2 233.1L1075.8 237.6" fill="none" stroke="#141414" stroke-width="1"/>
<path d="M1077.2 233.5l.1 .5 .1 .4 .3 .3 .6 0 .2 .1 .3 0 .9 .1 1.4 .4 1.9 .8 0 1.8-1.9 .8-1.5 .4-.9 .1-.3 0-.2 0-.5 0-.4 .3-.1 .4-.1 .4 0 .5 0 .4 .3 .3 .5 .2 .2 .1 .3 .1 .8 .3 1.3 .7 1.6 1.3-.4 1.7-2.1 .3-1.5 0-.9-.1-.3 0-.2 0-.5-.1-.4 .1-.3 .4-.2 .4-.1 .5-.1 .4 .2 .3 .4 .3 .2 .2 .3 .1 .7 .5 1.1 1 1.2 1.6-.8 1.5-2.1-.1-1.5-.3-.8-.3-.3-.2-.2 0-.5-.2-.4 0-.4 .3-.2 .4-.3 .4-.2 .4 .1 .4 .3 .4 .2 .1 .2 .2 .6 .7 .8 1.2 .8 1.8-1.2 1.3-2-.6-1.4-.6-.7-.5-.2-.2-.2-.1-.5-.3-.4-.1-.4 .2-.3 .3-.4 .3-.3 .4 0 .4 .3 .4 .1 .2 .1 .3 .4 .8 .5 1.3 .3 2-1.5 1-1.8-1.1-1.1-.9-.6-.7-.2-.2-.1-.1-.4-.4-.4-.2-.4 .1-.4 .2-.5 .2-.3 .3-.1 .4 .1 .5 0 .2 .1 .3 .2 .8 .1 1.5-.1 2-1.7 .6-1.5-1.5-.9-1.1-.4-.8-.1-.3-.1-.2-.3-.4-.3-.2-.5 0-.4 .1-.5 .1-.4 .2-.2 .3 0 .5 0 .2 0 .3 0 .9-.3 1.4-.6 1.9-1.8 .2-1.1-1.7-.6-1.4-.2-.8 0-.3-.1-.2-.1-.5-.3-.3-.4-.1-.5 0-.5 0-.4 .1-.3 .3-.1 .5-.1 .2-.1 .3-.2 .8-.6 1.3-1.1 1.7-1.8-.2-.6-1.9-.2-1.5 0-.8 0-.3 0-.2 0-.5-.2-.4-.4-.2-.5-.1-.4-.1-.5 0-.3 .2-.3 .4-.1 .2-.1 .3-.5 .7-.9 1.2-1.5 1.4-1.7-.6-.1-2.1 .2-1.4 .2-.8 .1-.3 0-.2 .2-.5-.1-.4-.4-.3-.4-.2-.4-.2-.5-.1-.4 .1-.3 .4-.2 .1-.1 .3-.7 .6-1.1 .9-1.8 1-1.5-1 .4-2 .5-1.3 .4-.8 .2-.2 .1-.2 .2-.5 0-.3-.2-.4-.4-.3-.4-.3-.4-.2-.4 0-.4 .3-.2 .1-.2 .2-.8 .4-1.4 .6-2 .6-1.2-1.3 .9-1.8 .9-1.2 .5-.7 .3-.1 .1-.2 .4-.4 .1-.4-.2-.4-.3-.4-.2-.3-.4-.3-.4-.1-.5 .2-.2 0-.3 .2-.8 .2-1.5 .3-2.1 .1-.8-1.5 1.3-1.6 1.1-1 .7-.5 .3-.1 .2-.1 .4-.3 .2-.4 0-.4-.2-.4-.2-.5-.2-.3-.4-.2-.5 .1-.2 0-.3 .1-.9 0-1.5 0-2.1-.4-.4-1.7 1.7-1.2 1.3-.7 .8-.3 .3-.1 .2-.1 .5-.1 .3-.3 0-.5 0-.4-.1-.5-.1-.4-.3-.3-.6 0-.2-.1-.3 0-.9-.1-1.4-.4-1.9-.8 0-1.8 1.9-.8 1.5-.4 .9-.1 .3 0 .2 0 .5 0 .4-.3 .1-.4 .1-.4 0-.5 0-.4-.3-.3-.5-.2-.2-.1-.3-.1-.8-.3-1.3-.7-1.6-1.3 .4-1.7 2.1-.3 1.5 0 .9 .1 .3 0 .2 0 .5 .1 .4-.1 .3-.4 .2-.4 .1-.5 .1-.4-.2-.3-.4-.3-.2-.2-.3-.1-.7-.5-1.1-1-1.2-1.6 .8-1.5 2.1 .1 1.5 .3 .8 .3 .3 .2 .2 0 .5 .2 .4 0 .4-.3 .2-.4 .3-.4 .2-.4-.1-.4-.3-.4-.2-.1-.2-.2-.6-.7-.8-1.2-.8-1.8 1.2-1.3 2 .6 1.4 .6 .7 .5 .2 .2 .2 .1 .5 .3 .4 .1 .4-.2 .3-.3 .4-.3 .3-.4 0-.4-.3-.4-.1-.2-.1-.3-.4-.8-.5-1.3-.3-2 1.5-1 1.8 1.1 1.1 .9 .6 .7 .2 .2 .1 .1 .4 .4 .4 .2 .4-.1 .4-.2 .5-.2 .3-.3 .1-.4-.1-.5 0-.2-.1-.3-.2-.8-.1-1.5 .1-2 1.7-.6 1.5 1.5 .9 1.1 .4 .8 .1 .3 .1 .2 .3 .4 .3 .2 .5 0 .4-.1 .5-.1 .4-.2 .2-.3 0-.5 0-.2 0-.3 0-.9 .3-1.4 .6-1.9 1.8-.2 1.1 1.7 .6 1.4 .2 .8 0 .3 .1 .2 .1 .5 .3 .3 .4 .1 .5 0 .5 0 .4-.1 .3-.3 .1-.5 .1-.2 .1-.3 .2-.8 .6-1.3 1.1-1.7 1.8 .2 .6 1.9 .2 1.5 0 .8 0 .3 0 .2 0 .5 .2 .4 .4 .2 .5 .1 .4 .1 .5 0 .3-.2 .3-.4 .1-.2 .1-.3 .5-.7 .9-1.2 1.5-1.4 1.7 .6 .1 2.1-.2 1.4-.2 .8-.1 .3 0 .2-.2 .5 .1 .4 .4 .3 .4 .2 .4 .2 .5 .1 .4-.1 .3-.4 .2-.1 .1-.3 .7-.6 1.1-.9 1.8-1 1.5 1-.4 2-.5 1.3-.4 .8-.2 .2-.1 .2-.2 .5 0 .3 .2 .4 .4 .3 .4 .3 .4 .2 .4 0 .4-.3 .2-.1 .2-.2 .8-.4 1.4-.6 2-.6 1.2 1.3-.9 1.8-.9 1.2-.5 .7-.3 .1-.1 .2-.4 .4-.1 .4 .2 .4 .3 .4 .2 .3 .4 .3 .4 .1 .5-.2 .2 0 .3-.2 .8-.2 1.5-.3 2.1-.1 .8 1.5-1.3 1.6-1.1 1-.7 .5-.3 .1-.2 .1-.4 .3-.2 .4 0 .4 .2 .4 .2 .5 .2 .3 .4 .2 .5-.1 .2 0 .3-.1 .9 0 1.5 0 2.1 .4 .4 1.7-1.7 1.2-1.3 .7-.8 .3-.3 .1-.2 .1-.5 .1-.3 .3 0 .5 0 .4z" fill="#c9c9c9" stroke="#0e0e0e" stroke-width="1.35" stroke-linejoin="round"/>
<path d="M556.8 451.2l.1 1.3 1.1 6.5-.1-1.4zM574.4 459l-.2 5.1 1.1 6.5 .2-5.1zM556.2 469.8l-.2 1.4 1 6.5 .3-1.3zM556 471.2l-.3 1.3 1.1 6.6 .2-1.4zM555.7 472.5l.1 1.3 1.1 6.6-.1-1.3zM549.4 491.7l-.3 1.3 1 6.7 .3-1.3zM522 524.6l0 1.1 .9 6.9 0-1.2zM504.1 541.6l.2 4.2 .8 6.9-.2-4.2zM504.3 545.8l-.6 5.9 .8 6.9 .6-5.9zM481.7 542.2l0 1.5 .7 6.9 0-1.5zM481.7 543.7l-.1 .6 .7 6.9 .1-.6zM481.6 544.3l.1 .8 .6 7 0-.9zM481.7 545.1l-.2 2.6 .7 6.9 .1-2.5zM481.5 547.7l-.9 4.1 .7 7 .9-4.2zM467.6 546.4l-.1-.8 .6 6.9 .1 .8zM467.3 545l-.2-1.5 .6 6.9 .2 1.5zM459 545.4l-.2 .8 .6 7 .2-.9zM445.4 551.1l-.5-4.2 .5 6.9 .5 4.3zM424.5 534.5l-.3-1.1 .4 6.9 .3 1.1zM382 489.5l-.2-1.3 .2 6.7 .2 1.3zM362.2 483.3l-1.1-5 0 6.6 1.2 5zM396.2 408.3l-.3-1.1 .3 6.2 .2 1.2zM407.9 383.9l-.9-5.8 .3 6.1 .9 5.8zM430.5 381l0-.7 .4 6.1 .1 .7zM430.2 379.5l-.5-2.5 .4 6.1 .5 2.5zM488.9 371.7l0 2.5 .7 6.1 0-2.5zM488.9 374.2l-.2 .9 .7 6 .2-.8zM488.7 375.1l.1 .6 .7 6.1-.1-.7zM488.8 375.7l-.1 1.5 .7 6.1 .1-1.5zM511.4 368.6l.1 5.9 .9 6.1-.1-5.9zM511.5 374.5l-.5 4.2 .8 6.1 .6-4.2zM509.9 382l-.1 .6 .8 6.1 .2-.6zM527.5 395.3l-.1 1.2 .9 6.1 .1-1.1zM556.9 448.5l-.2 1.3 1 6.5 .2-1.3zM556.8 451.2l0 0 1.1 6.4 0 0z" fill="#2e2e2e" stroke="#2e2e2e" stroke-width=".6" stroke-linejoin="round"/>
<path d="M556.7 468.6l-.5 1.2 1.1 6.6 .5-1.2zM570.9 482.7l-1.5 4.9 1.1 6.6 1.6-4.9zM550.5 489.2l-.5 1.3 1 6.6 .6-1.2zM550 490.5l-.6 1.2 1 6.7 .6-1.3zM538.2 509.1l-.6 1.2 1 6.7 .6-1.2zM503.3 535l-.4 1.2 .8 6.9 .3-1.2zM490.3 543.4l-.3-.8 .7 6.9 .3 .8zM489.6 542.1l-.6-1.4 .7 6.9 .6 1.4zM480.6 551.8l-2.1 5.6 .6 7 2.2-5.6zM469.9 552.8l-1.7-3.9 .6 6.9 1.7 4zM468.2 548.9l-.6-2.5 .6 6.9 .6 2.5zM467.5 545.6l-.2-.6 .6 6.9 .2 .6zM459.7 543.3l-.5 1.5 .6 6.9 .4-1.4zM459.2 544.8l-.2 .6 .6 6.9 .2-.6zM458.8 546.2l-.8 2.5 .6 6.9 .8-2.4zM458 548.7l-1.9 3.8 .5 7 2-3.9zM447.1 556.8l-1.7-5.7 .5 7 1.7 5.7zM445.1 541.4l-.5-1 .5 6.9 .5 1zM436.9 541.5l-.4 .8 .4 6.9 .4-.8zM392 507.2l-.5-1.2 .2 6.8 .5 1.2zM371.1 505.5l-2.4-4.5 .1 6.7 2.4 4.6zM381.8 488.2l-.4-1.2 .1 6.6 .5 1.3zM381.4 487l-.5-1.3 .2 6.6 .4 1.3zM376.9 466.1l-.4-1.2 .1 6.5 .4 1.2zM384.7 425.6l-.5-1.1 .1 6.4 .6 1zM389.8 399.4l-2.4-5.4 .2 6.1 2.4 5.5zM411.1 391.5l-.3-.5 .3 6.1 .3 .6zM410.3 390.2l-1.1-2.3 .3 6.2 1.2 2.3zM409.2 387.9l-1.3-4 .3 6.1 1.3 4.1zM430.9 382.4l-.4-1.4 .5 6.1 .3 1.4zM430.5 380.3l-.3-.8 .4 6.1 .3 .8zM511 378.7l-.7 2.5 .8 6.1 .7-2.5zM510.3 381.2l-.4 .8 .9 6.1 .3-.8zM509.8 382.6l-.5 1.5 .8 6.1 .5-1.5zM533.6 380.7l-1.5 5.8 1 6.1 1.4-5.8zM532.1 386.5l-1.6 4 .9 6.1 1.7-4zM528.6 393.4l-.3 .6 .9 6.2 .3-.6zM542.1 410.2l-.3 1.2 1 6.2 .3-1.1z" fill="#3a3a3a" stroke="#3a3a3a" stroke-width=".6" stroke-linejoin="round"/>
<path d="M551.3 488.2l-.8 1 1.1 6.7 .8-1.1zM561.4 505l-2.7 4.5 1 6.7 2.8-4.5zM540 506.9l-.9 1.1 1 6.7 .9-1.1zM539.1 508l-.9 1.1 1 6.7 .9-1.1zM522.9 523.5l-.9 1.1 .9 6.8 .9-1zM513.4 537.4l-1.8-1.9 .8 6.9 1.8 1.9zM511.6 535.5l-.5-.7 .8 6.9 .5 .7zM510.6 534.3l-1-1.2 .8 6.9 1 1.2zM498.5 553.4l-4.4-4.3 .7 6.9 4.4 4.3zM494.1 549.1l-2.6-3.5 .7 7 2.6 3.4zM491.5 545.6l-1.2-2.2 .7 6.9 1.2 2.3zM490 542.6l-.4-.5 .7 6.9 .4 .5zM482.3 541.1l-.6 1.1 .7 6.9 .6-1zM472.9 557.9l-3-5.1 .6 7 3.1 5.1zM467.1 543.5l-.9-.9 .6 6.9 .9 .9zM456.1 552.5l-3.5 5 .5 7 3.5-5zM438 539.6l-.8 1.4 .5 6.9 .8-1.4zM437.2 541l-.3 .5 .4 6.9 .4-.5zM436.5 542.3l-1.4 2.2 .4 6.9 1.4-2.2zM435.1 544.5l-2.9 3.3 .4 6.9 2.9-3.3zM418.1 531.2l-1.1 1.2 .3 6.8 1.1-1.1zM416.5 532.8l-.6 .7 .3 6.8 .6-.6zM406.4 522.1l-.8-1 .3 6.8 .8 1.1zM385.5 525.1l-3.5-3.9 .2 6.8 3.5 3.9zM391.5 506l-.8-1.1 .2 6.7 .8 1.2zM390.7 504.9l-.8-1.2 .2 6.8 .8 1.1zM380.9 485.7l-.7-1.1 .1 6.6 .8 1.1zM378 444.8l-.8-.9 .1 6.4 .8 .9zM376.1 418.3l-3.7-4.7 .1 6.3 3.8 4.7zM395.9 407.2l-1.1-1.1 .3 6.2 1.1 1.1zM394.8 406.1l-.3-.5 .2 6.2 .4 .5zM393.8 405l-1.7-2 .2 6.2 1.7 2zM392.1 403l-2.3-3.6 .2 6.2 2.3 3.6zM411.8 392.9l-.7-1.4 .3 6.2 .7 1.3zM410.8 391l-.5-.8 .4 6.2 .4 .7zM530.5 390.5l-1.3 2.2 .9 6.2 1.3-2.3zM529.2 392.7l-.6 .7 .9 6.2 .6-.7zM528.3 394l-.8 1.3 .9 6.2 .8-1.3zM551.8 397.4l-2.9 5.3 1 6.2 2.9-5.3zM548.9 402.7l-2.6 3.5 1 6.3 2.6-3.6zM546.3 406.2l-1.9 1.9 1 6.3 1.9-1.9zM543.7 408.7l-.4 .5 1 6.2 .4-.5zM565.1 417.6l-4.2 4.6 1.1 6.3 4.2-4.6zM552.4 428l-.6 1.1 1 6.3 .7-1zM557.7 447.7l-.8 .8 1 6.5 .9-.9z" fill="#494949" stroke="#494949" stroke-width=".6" stroke-linejoin="round"/>
<path d="M574.2 464.1l-6 2.3 1.1 6.5 6-2.3zM568.2 466.4l-4.4 1 1 6.6 4.5-1.1zM563.8 467.4l-2.8 .3 1.1 6.6 2.7-.3zM561 467.7l-.9 0 1.1 6.6 .9 0zM560.1 467.7l-.7 .2 1.1 6.5 .7-.1zM559.4 467.9l-1.6 .1 1 6.5 1.7-.1zM557.8 468l-1.1 .6 1.1 6.6 1-.7zM569.4 487.6l-6.4 .9 1.1 6.6 6.4-.9zM563 488.5l-4.5 .1 1 6.6 4.6-.1zM558.5 488.6l-2.8-.3 1.1 6.6 2.7 .3zM555.7 488.3l-.9-.2 1.1 6.6 .9 .2zM554.8 488.1l-.6-.1 1 6.7 .7 0zM554.2 488l-1.7-.2 1.1 6.6 1.6 .3zM552.5 487.8l-1.2 .4 1.1 6.6 1.2-.4zM558.7 509.5l-6.4-.6 1 6.8 6.4 .5zM552.3 508.9l-4.5-.9 1 6.7 4.5 1zM547.8 508l-2.5-.9 1 6.7 2.5 .9zM545.3 507.1l-.8-.4 1 6.7 .8 .4zM544.5 506.7l-.7-.2 1 6.7 .7 .2zM543.8 506.5l-1.5-.6 1 6.7 1.5 .6zM542.3 505.9l-1.3 .1 1 6.8 1.3-.2zM541 506l-1 .9 1 6.7 1-.8zM546.4 524.6l-3.8 3.8 1 6.8 3.8-3.7zM542.6 528.4l-6-1.9 .9 6.8 6.1 1.9zM536.6 526.5l-4.1-1.9 .9 6.8 4.1 1.9zM532.5 524.6l-2.2-1.5 .9 6.9 2.2 1.4zM530.3 523.1l-.7-.5 .9 6.8 .7 .6zM529.6 522.6l-.6-.4 .9 6.9 .6 .3zM529 522.2l-1.3-.9 .9 6.8 1.3 1zM527.7 521.3l-1.2-.1 .9 6.8 1.2 .1zM526.5 521.2l-1.3 .6 .9 6.8 1.3-.6zM525.2 521.8l-1.1 .9 .9 6.8 1.1-.9zM524.1 522.7l-1.2 .8 .9 6.9 1.2-.9zM526.8 540.5l-4.7 2.8 .9 6.9 4.7-2.8zM522.1 543.3l-5.3-3.2 .8 6.9 5.4 3.2zM516.8 540.1l-3.4-2.7 .8 6.9 3.4 2.7zM511.1 534.8l-.5-.5 .8 6.9 .5 .5zM509.6 533.1l-1.2-.4 .8 6.9 1.2 .4zM508.4 532.7l-1.4 .3 .8 6.9 1.4-.3zM507 533l-1.3 .7 .8 6.8 1.3-.6zM505.7 533.7l-1.3 .5 .8 6.9 1.3-.6zM504.4 534.2l-1.1 .8 .7 6.9 1.2-.8zM503.7 551.7l-5.2 1.7 .7 6.9 5.3-1.7zM489 540.7l-1.1-.7 .7 6.9 1.1 .7zM487.9 540l-1.4 0 .7 6.9 1.4 0zM486.5 540l-1.4 .3 .7 6.9 1.4-.3zM485.1 540.3l-1.5 .3 .7 6.9 1.5-.3zM483.6 540.6l-1.3 .5 .7 7 1.3-.6zM478.5 557.4l-5.6 .5 .7 7 5.5-.5zM466.2 542.6l-1.3-.3 .6 6.9 1.3 .3zM464.9 542.3l-1.5 0 .6 6.9 1.5 0zM463.4 542.3l-1.5-.1 .6 7 1.5 0zM461.9 542.2l-1.4 .3 .6 6.9 1.4-.2zM460.5 542.5l-.8 .8 .5 7 .9-.9zM452.6 557.5l-5.5-.7 .5 7 5.5 .7zM444.6 540.4l-1.3-.6 .5 6.9 1.3 .6zM443.3 539.8l-1.4-.4 .5 6.9 1.4 .4zM441.9 539.4l-1.4-.3 .5 6.9 1.4 .3zM440.5 539.1l-1.4-.1 .5 6.9 1.4 .1zM439.1 539l-1.1 .6 .5 6.9 1.1-.6zM432.2 547.8l-4.7 4.1 .4 6.9 4.7-4.1zM427.5 551.9l-5.1-1.9 .3 6.9 5.2 1.9zM424.2 533.4l-1-.8 .4 6.8 1 .9zM423.2 532.6l-1.3-.7 .4 6.9 1.3 .6zM421.9 531.9l-1.3-.7 .4 6.9 1.3 .7zM420.6 531.2l-1.3-.3 .4 6.8 1.3 .4zM419.3 530.9l-1.2 .3 .3 6.9 1.3-.4zM417 532.4l-.5 .4 .3 6.9 .5-.5zM415.9 533.5l-1.9 1.8 .3 6.9 1.9-1.9zM414 535.3l-3.7 2.6 .3 6.9 3.7-2.6zM410.3 537.9l-5.6 3 .3 6.9 5.6-3zM404.7 540.9l-4.5-3 .3 6.9 4.5 3zM405.6 521.1l-1.1-.9 .3 6.8 1.1 .9zM404.5 520.2l-1.1-1 .3 6.8 1.1 1zM403.4 519.2l-1.2-.6 .3 6.8 1.2 .6zM402.2 518.6l-1.2 .1 .2 6.8 1.3-.1zM401 518.7l-1.4 .8 .3 6.8 1.3-.8zM399.6 519.5l-.6 .3 .3 6.8 .6-.3zM399 519.8l-.7 .6 .2 6.8 .8-.6zM398.3 520.4l-2.4 1.3 .3 6.8 2.3-1.3zM395.9 521.7l-4.2 1.8 .2 6.8 4.3-1.8zM391.7 523.5l-6.2 1.6 .2 6.8 6.2-1.6zM389.9 503.7l-1-.9 .3 6.8 .9 .9zM388.9 502.8l-1.2-.1 .2 6.7 1.3 .2zM387.7 502.7l-1.6 .5 .2 6.7 1.6-.5zM386.1 503.2l-.6 .2 .2 6.7 .6-.2zM385.5 503.4l-.9 .3 .2 6.8 .9-.4zM384.6 503.7l-2.6 .8 .2 6.7 2.6-.7zM382 504.5l-4.5 .8 .1 6.7 4.6-.8zM377.5 505.3l-6.4 .2 .1 6.8 6.4-.3zM380.2 484.6l-1.2-.5 .2 6.7 1.1 .4zM379 484.1l-1.6 .2 .1 6.6 1.7-.1zM377.4 484.3l-.7 0 .1 6.7 .7-.1zM376.7 484.3l-.9 .2 .1 6.6 .9-.1zM375.8 484.5l-2.8 .2 .2 6.6 2.7-.2zM373 484.7l-4.5-.3 .1 6.7 4.6 .2zM368.5 484.4l-6.3-1.1 .1 6.6 6.3 1.2zM376.5 464.9l-1.1-.7 .2 6.5 1 .7zM375.4 464.2l-1.6-.2 .2 6.5 1.6 .2zM373.8 464l-.7-.2 .2 6.6 .7 .1zM373.1 463.8l-.9 0 .2 6.5 .9 .1zM372.2 463.8l-2.7-.4 .1 6.5 2.8 .4zM369.5 463.4l-4.3-1.3 .1 6.5 4.3 1.3zM365.2 462.1l-5.8-2.5 .1 6.5 5.8 2.5zM377.2 443.9l-1.5-.5 .1 6.4 1.5 .5zM375.7 443.4l-.6-.3 .1 6.4 .6 .3zM375.1 443.1l-.9-.3 .1 6.5 .9 .2zM374.2 442.8l-2.5-1 .1 6.5 2.5 1zM371.7 441.8l-3.9-2.1 .1 6.4 3.9 2.2zM367.8 439.7l-4.9-3.8 0 6.4 5 3.8zM384.2 424.5l-1.4-.8 .2 6.3 1.3 .9zM382.8 423.7l-.5-.4 .2 6.3 .5 .4zM382.3 423.3l-.8-.5 .2 6.4 .8 .4zM381.5 422.8l-2.2-1.5 .2 6.3 2.2 1.6zM379.3 421.3l-3.2-3 .2 6.3 3.2 3zM394.5 405.6l-.7-.6 .2 6.2 .7 .6zM544.4 408.1l-.7 .6 1 6.2 .7-.5zM543.3 409.2l-1.2 1 1 6.3 1.2-1.1zM560.9 422.2l-3.4 2.8 1.1 6.4 3.4-2.9zM557.5 425l-2.3 1.5 1.1 6.3 2.3-1.4zM555.2 426.5l-.8 .4 1 6.3 .9-.4zM554.4 426.9l-.6 .4 1.1 6.3 .5-.4zM553.8 427.3l-1.4 .7 1.1 6.4 1.4-.8zM572.7 440.3l-5.2 3.5 1.1 6.5 5.3-3.6zM567.5 443.8l-4.1 2.1 1.1 6.4 4.1-2zM563.4 445.9l-2.6 .8 1.1 6.5 2.6-.9zM560.8 446.7l-.8 .2 1 6.5 .9-.2zM560 446.9l-.7 .3 1.1 6.4 .6-.2zM559.3 447.2l-1.6 .5 1.1 6.4 1.6-.5z" fill="#5c5c5c" stroke="#5c5c5c" stroke-width=".6" stroke-linejoin="round"/>
<path d="M557.9 457.6l.1 1.4 .4 1.2 1 .7 1.6 .2 .7 .1 .9 .1 2.8 .4 4.3 1.3 5.8 2.5-.2 5.1-6 2.3-4.5 1.1-2.7 .3-.9 0-.7 .1-1.7 .1-1 .7-.5 1.2-.3 1.3-.2 1.4 .1 1.3 .8 .9 1.5 .5 .6 .3 .9 .2 2.5 1 3.9 2.2 5 3.8-1.6 4.9-6.4 .9-4.6 .1-2.7-.3-.9-.2-.7 0-1.6-.3-1.2 .4-.8 1.1-.6 1.2-.6 1.3-.3 1.3 .6 1 1.3 .9 .5 .4 .8 .4 2.2 1.6 3.2 3 3.8 4.7-2.8 4.5-6.4-.5-4.5-1-2.5-.9-.8-.4-.7-.2-1.5-.6-1.3 .2-1 .8-.9 1.1-.9 1.1-.6 1.2 .2 1.2 1.1 1.1 .4 .5 .7 .6 1.7 2 2.3 3.6 2.4 5.5-3.8 3.7-6.1-1.9-4.1-1.9-2.2-1.4-.7-.6-.6-.3-1.3-1-1.2-.1-1.3 .6-1.1 .9-1.2 .9-.9 1 0 1.2 .7 1.3 .3 .6 .4 .7 1.2 2.3 1.3 4.1 .9 5.8-4.7 2.8-5.4-3.2-3.4-2.7-1.8-1.9-.5-.7-.5-.5-1-1.2-1.2-.4-1.4 .3-1.3 .6-1.3 .6-1.2 .8-.3 1.2 .3 1.4 .1 .7 .3 .8 .5 2.5 .2 4.2-.6 5.9-5.3 1.7-4.4-4.3-2.6-3.4-1.2-2.3-.3-.8-.4-.5-.6-1.4-1.1-.7-1.4 0-1.4 .3-1.5 .3-1.3 .6-.6 1 0 1.5-.1 .6 0 .9-.1 2.5-.9 4.2-2.2 5.6-5.5 .5-3.1-5.1-1.7-4-.6-2.5-.1-.8-.2-.6-.2-1.5-.9-.9-1.3-.3-1.5 0-1.5 0-1.4 .2-.9 .9-.4 1.4-.2 .6-.2 .9-.8 2.4-2 3.9-3.5 5-5.5-.7-1.7-5.7-.5-4.3 0-2.5 .2-.8-.1-.7 .1-1.5-.5-1-1.3-.6-1.4-.4-1.4-.3-1.4-.1-1.1 .6-.8 1.4-.4 .5-.4 .8-1.4 2.2-2.9 3.3-4.7 4.1-5.2-1.9-.1-5.9 .6-4.2 .7-2.5 .3-.8 .2-.6 .5-1.5-.3-1.1-1-.9-1.3-.6-1.3-.7-1.3-.4-1.3 .4-1.1 1.1-.5 .5-.6 .6-1.9 1.9-3.7 2.6-5.6 3-4.5-3 1.4-5.8 1.7-4 1.3-2.3 .6-.7 .3-.6 .8-1.3 .1-1.1-.8-1.1-1.1-.9-1.1-1-1.2-.6-1.3 .1-1.3 .8-.6 .3-.8 .6-2.3 1.3-4.3 1.8-6.2 1.6-3.5-3.9 2.9-5.3 2.6-3.6 1.9-1.9 .7-.5 .4-.5 1.2-1.1 .3-1.1-.5-1.2-.8-1.2-.8-1.1-.9-.9-1.3-.2-1.6 .5-.6 .2-.9 .4-2.6 .7-4.6 .8-6.4 .3-2.4-4.6 4.2-4.6 3.4-2.9 2.3-1.4 .9-.4 .5-.4 1.4-.8 .7-1-.2-1.3-.5-1.3-.4-1.3-.8-1.1-1.1-.4-1.7 .1-.7 .1-.9 .1-2.7 .2-4.6-.2-6.3-1.2-1.2-5 5.3-3.6 4.1-2 2.6-.9 .9-.2 .6-.2 1.6-.5 .9-.9 .2-1.3-.2-1.3-.1-1.4-.4-1.2-1-.7-1.6-.2-.7-.1-.9-.1-2.8-.4-4.3-1.3-5.8-2.5 .2-5.1 6-2.3 4.5-1.1 2.7-.3 .9 0 .7-.1 1.7-.1 1-.7 .5-1.2 .3-1.3 .2-1.4-.1-1.3-.8-.9-1.5-.5-.6-.3-.9-.2-2.5-1-3.9-2.2-5-3.8 1.6-4.9 6.4-.9 4.6-.1 2.7 .3 .9 .2 .7 0 1.6 .3 1.2-.4 .8-1.1 .6-1.2 .6-1.3 .3-1.3-.6-1-1.3-.9-.5-.4-.8-.4-2.2-1.6-3.2-3-3.8-4.7 2.8-4.5 6.4 .5 4.5 1 2.5 .9 .8 .4 .7 .2 1.5 .6 1.3-.2 1-.8 .9-1.1 .9-1.1 .6-1.2-.2-1.2-1.1-1.1-.4-.5-.7-.6-1.7-2-2.3-3.6-2.4-5.5 3.8-3.7 6.1 1.9 4.1 1.9 2.2 1.4 .7 .6 .6 .3 1.3 1 1.2 .1 1.3-.6 1.1-.9 1.2-.9 .9-1 0-1.2-.7-1.3-.3-.6-.4-.7-1.2-2.3-1.3-4.1-.9-5.8 4.7-2.8 5.4 3.2 3.4 2.7 1.8 1.9 .5 .7 .5 .5 1 1.2 1.2 .4 1.4-.3 1.3-.6 1.3-.6 1.2-.8 .3-1.2-.3-1.4-.1-.7-.3-.8-.5-2.5-.2-4.2 .6-5.9 5.3-1.7 4.4 4.3 2.6 3.4 1.2 2.3 .3 .8 .4 .5 .6 1.4 1.1 .7 1.4 0 1.4-.3 1.5-.3 1.3-.6 .6-1 0-1.5 .1-.6 0-.9 .1-2.5 .9-4.2 2.2-5.6 5.5-.5 3.1 5.1 1.7 4 .6 2.5 .1 .8 .2 .6 .2 1.5 .9 .9 1.3 .3 1.5 0 1.5 0 1.4-.2 .9-.9 .4-1.4 .2-.6 .2-.9 .8-2.4 2-3.9 3.5-5 5.5 .7 1.7 5.7 .5 4.3 0 2.5-.2 .8 .1 .7-.1 1.5 .5 1 1.3 .6 1.4 .4 1.4 .3 1.4 .1 1.1-.6 .8-1.4 .4-.5 .4-.8 1.4-2.2 2.9-3.3 4.7-4.1 5.2 1.9 .1 5.9-.6 4.2-.7 2.5-.3 .8-.2 .6-.5 1.5 .3 1.1 1 .9 1.3 .6 1.3 .7 1.3 .4 1.3-.4 1.1-1.1 .5-.5 .6-.6 1.9-1.9 3.7-2.6 5.6-3 4.5 3-1.4 5.8-1.7 4-1.3 2.3-.6 .7-.3 .6-.8 1.3-.1 1.1 .8 1.1 1.1 .9 1.1 1 1.2 .6 1.3-.1 1.3-.8 .6-.3 .8-.6 2.3-1.3 4.3-1.8 6.2-1.6 3.5 3.9-2.9 5.3-2.6 3.6-1.9 1.9-.7 .5-.4 .5-1.2 1.1-.3 1.1 .5 1.2 .8 1.2 .8 1.1 .9 .9 1.3 .2 1.6-.5 .6-.2 .9-.4 2.6-.7 4.6-.8 6.4-.3 2.4 4.6-4.2 4.6-3.4 2.9-2.3 1.4-.9 .4-.5 .4-1.4 .8-.7 1 .2 1.3 .5 1.3 .4 1.3 .8 1.1 1.1 .4 1.7-.1 .7-.1 .9-.1 2.7-.2 4.6 .2 6.3 1.2 1.2 5-5.3 3.6-4.1 2-2.6 .9-.9 .2-.6 .2-1.6 .5-.9 .9-.2 1.3 .2 1.3z" fill="none" stroke="#0c0c0c" stroke-width="1.5" stroke-linejoin="round"/>
<path d="M556.9 452.5L558 459M560 454.6L561 461.1M574.4 459L575.5 465.5M574.2 464.1L575.3 470.6M559.4 467.9L560.5 474.4M556.2 469.8L557.3 476.4M555.7 472.5L556.8 479.1M558.1 475.2L559.2 481.8M570.9 482.7L572.1 489.3M569.4 487.6L570.5 494.2M554.2 488L555.2 494.7M550.5 489.2L551.6 495.9M549.4 491.7L550.4 498.4M551 494.9L552 501.6M561.4 505L562.5 511.7M558.7 509.5L559.7 516.2M543.8 506.5L544.8 513.2M540 506.9L541 513.6M538.2 509.1L539.2 515.8M539 512.5L539.9 519.3M546.4 524.6L547.4 531.5M542.6 528.4L543.6 535.2M529 522.2L529.9 529.1M525.2 521.8L526.1 528.6M522.9 523.5L523.8 530.4M522.7 527.1L523.6 533.9M526.8 540.5L527.7 547.4M522.1 543.3L523 550.2M510.6 534.3L511.4 541.2M507 533L507.8 539.9M504.4 534.2L505.2 541.1M503.3 537.6L504 544.5M503.7 551.7L504.5 558.6M498.5 553.4L499.2 560.3M489.6 542.1L490.3 549M486.5 540L487.2 546.9M483.6 540.6L484.3 547.5M481.7 543.7L482.4 550.6M478.5 557.4L479.1 564.4M472.9 557.9L473.6 564.9M467.3 545L467.9 551.9M464.9 542.3L465.5 549.2M461.9 542.2L462.5 549.2M459.2 544.8L459.8 551.7M452.6 557.5L453.1 564.5M447.1 556.8L447.6 563.8M445 542.9L445.5 549.8M443.3 539.8L443.8 546.7M440.5 539.1L441 546M437.2 541L437.7 547.9M427.5 551.9L427.9 558.8M422.4 550L422.7 556.9M424 536L424.4 542.9M423.2 532.6L423.6 539.4M420.6 531.2L421 538.1M417 532.4L417.3 539.2M404.7 540.9L405 547.8M400.2 537.9L400.5 544.8M405.5 524.6L405.8 531.4M405.6 521.1L405.9 527.9M403.4 519.2L403.7 526M399.6 519.5L399.9 526.3M385.5 525.1L385.7 531.9M382 521.2L382.2 528M390.5 509.4L390.7 516.2M391.5 506L391.7 512.8M389.9 503.7L390.1 510.5M386.1 503.2L386.3 509.9M371.1 505.5L371.2 512.3M368.7 501L368.8 507.7M380 491.3L380.1 498M381.8 488.2L382 494.9M380.9 485.7L381.1 492.3M377.4 484.3L377.5 490.9M362.2 483.3L362.3 489.9M361.1 478.3L361.1 484.9M374.5 471.4L374.6 478M377.1 468.8L377.3 475.3M376.9 466.1L377 472.6M373.8 464L374 470.5M359.4 459.6L359.5 466.1M359.6 454.5L359.7 461M374.4 450.7L374.5 457.2M377.6 448.8L377.7 455.2M378.1 446.1L378.2 452.5M375.7 443.4L375.8 449.8M362.9 435.9L362.9 442.3M364.4 431L364.5 437.4M379.6 430.6L379.8 436.9M383.3 429.4L383.4 435.7M384.4 426.9L384.6 433.2M382.8 423.7L383 430M372.4 413.6L372.5 419.9M375.1 409.1L375.3 415.4M390 412.1L390.2 418.4M393.8 411.7L394 418M395.6 409.5L395.8 415.8M394.8 406.1L395.1 412.3M387.4 394L387.6 400.1M391.2 390.2L391.4 396.4M404.8 396.4L405.1 402.5M408.6 396.8L408.9 403M410.9 395.1L411.2 401.2M411.1 391.5L411.4 397.7M407 378.1L407.3 384.2M411.7 375.3L412 381.4M423.2 384.3L423.6 390.4M426.8 385.6L427.2 391.7M429.4 384.4L429.8 390.5M430.5 381L431 387.1M430.1 366.9L430.5 373M435.3 365.2L435.8 371.3M444.2 376.5L444.7 382.6M447.3 378.6L447.8 384.7M450.2 378L450.7 384.1M452.1 374.9L452.6 381M455.3 361.2L455.9 367.2M460.9 360.7L461.4 366.7M466.5 373.6L467.1 379.7M468.9 376.3L469.5 382.4M471.9 376.4L472.5 382.4M474.6 373.8L475.2 379.9M481.2 361.1L481.9 367.1M486.7 361.8L487.4 367.8M488.8 375.7L489.5 381.8M490.5 378.8L491.2 384.9M493.3 379.5L494 385.6M496.6 377.6L497.3 383.7M506.3 366.7L507.1 372.8M511.4 368.6L512.3 374.7M509.8 382.6L510.6 388.7M510.6 386L511.4 392.2M513.2 387.4L514 393.5M516.8 386.2L517.7 392.4M529.1 377.7L530 383.8M533.6 380.7L534.5 386.8M528.3 394L529.2 400.2M528.2 397.5L529.1 403.7M530.4 399.4L531.3 405.6M534.2 399.1L535.1 405.3M548.3 393.5L549.3 399.7M551.8 397.4L552.8 403.6M543.3 409.2L544.3 415.4M542.3 412.6L543.3 418.8M543.9 414.9L544.9 421.1M547.7 415.4L548.7 421.7M562.7 413.1L563.8 419.3M565.1 417.6L566.2 423.9M553.8 427.3L554.9 433.6M552 430.4L553 436.7M552.9 432.9L553.9 439.3M556.4 434.3L557.5 440.7M571.6 435.3L572.7 441.7M572.7 440.3L573.9 446.7M559.3 447.2L560.4 453.6M556.7 449.8L557.7 456.3" fill="none" stroke="#141414" stroke-width="1"/>
<path d="M556.8 451.2l.1 1.3 .4 1.2 1.1 .7 1.6 .2 .7 .2 .9 0 2.7 .4 4.3 1.3 5.8 2.5-.2 5.1-6 2.3-4.4 1-2.8 .3-.9 0-.7 .2-1.6 .1-1.1 .6-.5 1.2-.2 1.4-.3 1.3 .1 1.3 .8 .9 1.5 .5 .6 .3 .9 .3 2.5 1 3.9 2.1 4.9 3.8-1.5 4.9-6.4 .9-4.5 .1-2.8-.3-.9-.2-.6-.1-1.7-.2-1.2 .4-.8 1-.5 1.3-.6 1.2-.3 1.3 .5 1.1 1.4 .8 .5 .4 .8 .5 2.2 1.5 3.2 3 3.7 4.7-2.7 4.5-6.4-.6-4.5-.9-2.5-.9-.8-.4-.7-.2-1.5-.6-1.3 .1-1 .9-.9 1.1-.9 1.1-.6 1.2 .3 1.1 1.1 1.1 .3 .5 .7 .6 1.7 2 2.3 3.6 2.4 5.4-3.8 3.8-6-1.9-4.1-1.9-2.2-1.5-.7-.5-.6-.4-1.3-.9-1.2-.1-1.3 .6-1.1 .9-1.2 .8-.9 1.1 0 1.1 .7 1.4 .3 .5 .5 .8 1.1 2.3 1.3 4 .9 5.8-4.7 2.8-5.3-3.2-3.4-2.7-1.8-1.9-.5-.7-.5-.5-1-1.2-1.2-.4-1.4 .3-1.3 .7-1.3 .5-1.1 .8-.4 1.2 .4 1.4 0 .7 .3 .8 .5 2.5 .2 4.2-.6 5.9-5.2 1.7-4.4-4.3-2.6-3.5-1.2-2.2-.3-.8-.4-.5-.6-1.4-1.1-.7-1.4 0-1.4 .3-1.5 .3-1.3 .5-.6 1.1 0 1.5-.1 .6 .1 .8-.2 2.6-.9 4.1-2.1 5.6-5.6 .5-3-5.1-1.7-3.9-.6-2.5-.1-.8-.2-.6-.2-1.5-.9-.9-1.3-.3-1.5 0-1.5-.1-1.4 .3-.8 .8-.5 1.5-.2 .6-.2 .8-.8 2.5-1.9 3.8-3.5 5-5.5-.7-1.7-5.7-.5-4.2 0-2.5 .2-.9-.1-.6 .1-1.5-.5-1-1.3-.6-1.4-.4-1.4-.3-1.4-.1-1.1 .6-.8 1.4-.3 .5-.4 .8-1.4 2.2-2.9 3.3-4.7 4.1-5.1-1.9-.1-5.9 .5-4.2 .7-2.5 .4-.8 .1-.6 .5-1.5-.3-1.1-1-.8-1.3-.7-1.3-.7-1.3-.3-1.2 .3-1.1 1.2-.5 .4-.6 .7-1.9 1.8-3.7 2.6-5.6 3-4.5-3 1.5-5.8 1.6-4 1.3-2.2 .6-.7 .3-.6 .8-1.3 .1-1.2-.8-1-1.1-.9-1.1-1-1.2-.6-1.2 .1-1.4 .8-.6 .3-.7 .6-2.4 1.3-4.2 1.8-6.2 1.6-3.5-3.9 2.9-5.3 2.6-3.5 1.9-1.9 .7-.6 .4-.5 1.2-1 .3-1.2-.5-1.2-.8-1.1-.8-1.2-1-.9-1.2-.1-1.6 .5-.6 .2-.9 .3-2.6 .8-4.5 .8-6.4 .2-2.4-4.5 4.2-4.6 3.4-2.8 2.3-1.5 .8-.4 .6-.4 1.4-.7 .6-1.1-.2-1.3-.4-1.2-.5-1.3-.7-1.1-1.2-.5-1.6 .2-.7 0-.9 .2-2.8 .2-4.5-.3-6.3-1.1-1.1-5 5.2-3.5 4.1-2.1 2.6-.8 .8-.2 .7-.3 1.6-.5 .8-.8 .2-1.3-.1-1.4-.1-1.3-.4-1.2-1.1-.7-1.6-.2-.7-.2-.9 0-2.7-.4-4.3-1.3-5.8-2.5 .2-5.1 6-2.3 4.4-1 2.8-.3 .9 0 .7-.2 1.6-.1 1.1-.6 .5-1.2 .2-1.4 .3-1.3-.1-1.3-.8-.9-1.5-.5-.6-.3-.9-.3-2.5-1-3.9-2.1-4.9-3.8 1.5-4.9 6.4-.9 4.5-.1 2.8 .3 .9 .2 .6 .1 1.7 .2 1.2-.4 .8-1 .5-1.3 .6-1.2 .3-1.3-.5-1.1-1.4-.8-.5-.4-.8-.5-2.2-1.5-3.2-3-3.7-4.7 2.7-4.5 6.4 .6 4.5 .9 2.5 .9 .8 .4 .7 .2 1.5 .6 1.3-.1 1-.9 .9-1.1 .9-1.1 .6-1.2-.3-1.1-1.1-1.1-.3-.5-.7-.6-1.7-2-2.3-3.6-2.4-5.4 3.8-3.8 6 1.9 4.1 1.9 2.2 1.5 .7 .5 .6 .4 1.3 .9 1.2 .1 1.3-.6 1.1-.9 1.2-.8 .9-1.1 0-1.1-.7-1.4-.3-.5-.5-.8-1.1-2.3-1.3-4-.9-5.8 4.7-2.8 5.3 3.2 3.4 2.7 1.8 1.9 .5 .7 .5 .5 1 1.2 1.2 .4 1.4-.3 1.3-.7 1.3-.5 1.1-.8 .4-1.2-.4-1.4 0-.7-.3-.8-.5-2.5-.2-4.2 .6-5.9 5.2-1.7 4.4 4.3 2.6 3.5 1.2 2.2 .3 .8 .4 .5 .6 1.4 1.1 .7 1.4 0 1.4-.3 1.5-.3 1.3-.5 .6-1.1 0-1.5 .1-.6-.1-.8 .2-2.6 .9-4.1 2.1-5.6 5.6-.5 3 5.1 1.7 3.9 .6 2.5 .1 .8 .2 .6 .2 1.5 .9 .9 1.3 .3 1.5 0 1.5 .1 1.4-.3 .8-.8 .5-1.5 .2-.6 .2-.8 .8-2.5 1.9-3.8 3.5-5 5.5 .7 1.7 5.7 .5 4.2 0 2.5-.2 .9 .1 .6-.1 1.5 .5 1 1.3 .6 1.4 .4 1.4 .3 1.4 .1 1.1-.6 .8-1.4 .3-.5 .4-.8 1.4-2.2 2.9-3.3 4.7-4.1 5.1 1.9 .1 5.9-.5 4.2-.7 2.5-.4 .8-.1 .6-.5 1.5 .3 1.1 1 .8 1.3 .7 1.3 .7 1.3 .3 1.2-.3 1.1-1.2 .5-.4 .6-.7 1.9-1.8 3.7-2.6 5.6-3 4.5 3-1.5 5.8-1.6 4-1.3 2.2-.6 .7-.3 .6-.8 1.3-.1 1.2 .8 1 1.1 .9 1.1 1 1.2 .6 1.2-.1 1.4-.8 .6-.3 .7-.6 2.4-1.3 4.2-1.8 6.2-1.6 3.5 3.9-2.9 5.3-2.6 3.5-1.9 1.9-.7 .6-.4 .5-1.2 1-.3 1.2 .5 1.2 .8 1.1 .8 1.2 1 .9 1.2 .1 1.6-.5 .6-.2 .9-.3 2.6-.8 4.5-.8 6.4-.2 2.4 4.5-4.2 4.6-3.4 2.8-2.3 1.5-.8 .4-.6 .4-1.4 .7-.6 1.1 .2 1.3 .4 1.2 .5 1.3 .7 1.1 1.2 .5 1.6-.2 .7 0 .9-.2 2.8-.2 4.5 .3 6.3 1.1 1.1 5-5.2 3.5-4.1 2.1-2.6 .8-.8 .2-.7 .3-1.6 .5-.8 .8-.2 1.3 .1 1.4z" fill="#c9c9c9" stroke="#0e0e0e" stroke-width="1.35" stroke-linejoin="round"/>
</svg>

<svg style="left:0;top:0" width="1200" height="684" viewBox="0 0 1200 684">
<path d="M1169 598.700H1188" stroke="#a32222" stroke-width="1.300"/><path d="M1180.500 596.900l5 1.800l-5 1.800z" fill="#a82020"/>
<path d="M1169 598.500L1169.200 584" stroke="#2a9a2a" stroke-width="1.200"/><path d="M1167.200 589.500l2-6l2 6z" fill="#2a9a2a"/>
<path d="M1168.600 598.700V590" stroke="#2020a0" stroke-width="1.600"/><path d="M1166 593.500l2.500-5l2.700 5z" fill="#2020a0"/>
<g stroke="#111" stroke-width="1" fill="none"><path d="M1190 593.500l4.500 5.500M1194.500 593.500l-4.500 5.500"/><path d="M1171 576.500l2.500 3l2.500-3M1173.500 579.500v3.500"/><path d="M1171 583.500h4l-4 5.500h4.300"/></g>
</svg>


<!-- ===== toolbars ===== -->
<svg style="left:0;top:0" width="1200" height="74" viewBox="0 0 1200 74">
<defs>
<linearGradient id="gPage" x1="0" y1="0" x2="1" y2="1"><stop offset="0" stop-color="#fdfdfd"/><stop offset="1" stop-color="#dcdcdb"/></linearGradient>
<radialGradient id="gGlow"><stop offset="0" stop-color="#ffffd8"/><stop offset=".45" stop-color="#f7ee3a"/><stop offset="1" stop-color="#f5ea30" stop-opacity="0"/></radialGradient>
<linearGradient id="gFold" x1="0" y1="0" x2="0" y2="1"><stop offset="0" stop-color="#84aee0"/><stop offset="1" stop-color="#3f79c4"/></linearGradient>
<linearGradient id="gGrayV" x1="0" y1="0" x2="0" y2="1"><stop offset="0" stop-color="#f4f4f4"/><stop offset="1" stop-color="#b9b9b9"/></linearGradient>
<linearGradient id="gBlueArr" x1="0" y1="0" x2="0" y2="1"><stop offset="0" stop-color="#6ea3dc"/><stop offset="1" stop-color="#2b62ad"/></linearGradient>
<linearGradient id="gYel" x1="0" y1="0" x2="1" y2="1"><stop offset="0" stop-color="#fbf08a"/><stop offset="1" stop-color="#e2c61a"/></linearGradient>
<linearGradient id="gCombo" x1="0" y1="0" x2="0" y2="1"><stop offset="0" stop-color="#fefefe"/><stop offset="1" stop-color="#e9e7e4"/></linearGradient>
<linearGradient id="gTeal" x1="0" y1="0" x2="1" y2="1"><stop offset="0" stop-color="#3fb4cc"/><stop offset="1" stop-color="#0b7f9c"/></linearGradient>
<radialGradient id="gRed" cx=".4" cy=".35" r=".7"><stop offset="0" stop-color="#ff7a7a"/><stop offset=".6" stop-color="#ec2b2b"/><stop offset="1" stop-color="#c81818"/></radialGradient>
<radialGradient id="gOr" cx=".4" cy=".35" r=".7"><stop offset="0" stop-color="#ffd060"/><stop offset=".6" stop-color="#f9a013"/><stop offset="1" stop-color="#c87400"/></radialGradient>
<linearGradient id="gBl2" x1="0" y1="0" x2="0" y2="1"><stop offset="0" stop-color="#5b9cf0"/><stop offset="1" stop-color="#1450b8"/></linearGradient>
</defs>
<!-- grip -->
<g stroke="#d9d6d2" stroke-width="1"><path d="M3 15.500h5M3 18.500h5M3 21.500h5"/></g>
<!-- new -->
<rect x="18.500" y="8.500" width="16" height="19" rx="1" fill="url(#gPage)" stroke="#c4c4c2"/>
<path d="M18 28.300h17" stroke="#a9a9a7" stroke-width="1.200"/>
<circle cx="32.300" cy="12.600" r="5.800" fill="url(#gGlow)"/>
<!-- open -->
<path d="M50 10l1-1.500h4l1 1.500h12v14h-18z" fill="#8e8e8c" stroke="#6f6f6d" stroke-width=".8"/>
<path d="M53.500 9.500l14.500-1v14h-14.500z" fill="url(#gGrayV)" stroke="#9a9a98" stroke-width=".7"/>
<path d="M54 16.500h17l-2.800 9.300h-17.200z" fill="url(#gFold)" stroke="#3a6cb0" stroke-width=".8"/>
<!-- save -->
<path d="M86 15h14.500l3 9v3.500h-20.500v-3.500z" fill="url(#gGrayV)" stroke="#8b8b89" stroke-width=".9"/>
<path d="M83.500 24h20v3.500h-20z" fill="#a4a4a2" stroke="#858583" stroke-width=".8"/>
<path d="M85.500 13.500q1.500-5.500 7-4.700q4.300 .8 4.200 5h3.300l-6 6.500l-6.200-6.500h3.500q.1-3.400-2.300-3.300q-2 .2-3.500 3z" fill="url(#gBlueArr)" stroke="#2a5c9f" stroke-width=".6"/>
<!-- print (disabled) -->
<g opacity=".85">
<rect x="119.500" y="9.500" width="13" height="9" fill="#dedede" stroke="#c6c6c4"/>
<path d="M126 11l3.200 3.500h-2v2.500h-2.400v-2.500h-2z" fill="#b4b4b2"/>
<rect x="116.500" y="18.500" width="19.500" height="8" rx="2" fill="#e6e6e5" stroke="#b9b9b7"/>
<path d="M119 21.500h14.500" stroke="#fff" stroke-width="2"/>
<path d="M117 26.500h18.500" stroke="#a6a6a4" stroke-width="1.400"/>
</g>
<path d="M147.500 7v22" stroke="#e1deda"/><path d="M148.500 7v22" stroke="#f8f8f7"/>
<!-- cut -->
<g fill="none" stroke-linecap="round">
<path d="M163.300 9.500l8 12.500M175.700 9.500l-8 12.500" stroke="#c4c4c2" stroke-width="3.200"/>
<path d="M163.300 9.500l8 12.500M175.700 9.500l-8 12.500" stroke="#f3f3f2" stroke-width="1.600"/>
<ellipse cx="164.300" cy="24.300" rx="3.600" ry="2.700" transform="rotate(-25 164.300 24.300)" stroke="#8a8a88" stroke-width="2.300"/>
<ellipse cx="174.700" cy="24.300" rx="3.600" ry="2.700" transform="rotate(25 174.700 24.300)" stroke="#8a8a88" stroke-width="2.300"/>
</g>
<!-- copy (disabled) -->
<g>
<rect x="191.500" y="8.500" width="14" height="16" rx="1" fill="#f5f5f4" stroke="#e0e0de"/>
<path d="M198.500 12.500h14v13.500l-3 3h-11z" fill="#f8f8f7" stroke="#dadad8"/>
<path d="M201 16h9v7h-9z" fill="#e4e4e3"/>
<path d="M209.500 29v-3h3z" fill="#d0d0ce"/>
</g>
<!-- paste -->
<rect x="226.500" y="9.500" width="18" height="18.500" rx="1" fill="#c68a3a" stroke="#9a6420"/>
<rect x="229" y="12" width="13" height="14.500" fill="#f4f4f3" stroke="#d9d9d7" stroke-width=".6"/>
<path d="M231 15h8.500v8h-8.500z" fill="#dcdcdb"/>
<path d="M238.500 26.500v-3.500h3.500z" fill="#9a9a98"/>
<rect x="231.500" y="8" width="8" height="4" rx="1" fill="#9c9c94" stroke="#77776f" stroke-width=".7"/>
<path d="M233 8h5" stroke="#5d5d57" stroke-width="1.200"/>
<path d="M257.500 7v22" stroke="#e1deda"/><path d="M258.500 7v22" stroke="#f8f8f7"/>
<!-- undo -->
<ellipse cx="279" cy="26.500" rx="9" ry="1.800" fill="#d9d8d5" opacity=".8"/>
<path d="M270.500 15.500l8-7v4.200q7.500 .6 7.300 7.300q-.3 4.500-4.600 6.500q2.300-3.200 .9-5.500q-1.100-1.700-3.600-1.800v4z" fill="url(#gYel)" stroke="#d6bb25" stroke-width=".8" stroke-linejoin="round"/>
<path d="M300.800 16.800h7.800l-3.900 5.300z" fill="#5e5e5c"/>
<!-- redo (disabled) -->
<ellipse cx="331" cy="26.500" rx="8" ry="1.500" fill="#e2e1df" opacity=".8"/>
<path d="M339.500 15.500l-8-7v4.200q-7.500 .6-7.300 7.300q.3 4.500 4.600 6.500q-2.300-3.200-.9-5.500q1.100-1.700 3.600-1.800v4z" fill="#d4d4d2" stroke="#cbcbc9" stroke-width=".8" stroke-linejoin="round"/>
<path d="M352.500 16.800h7.500l-3.750 5.200z" fill="#b9b9b7"/>
<path d="M370.500 7v22" stroke="#e1deda"/><path d="M371.500 7v22" stroke="#f8f8f7"/>
<!-- refresh (disabled) -->
<g fill="#d2d2d0" stroke="#bfbfbd" stroke-width=".7" stroke-linejoin="round">
<path d="M383.500 17q.3-8 8.500-8.500q3.500 0 5.800 2l3-2.500v8h-8l2.600-2.600q-1.600-1.300-3.600-1.200q-4 .3-4.800 4.800z"/>
<path d="M401 18q-.3 8-8.500 8.500q-3.500 0-5.800-2l-3 2.500v-8h8l-2.600 2.600q1.600 1.300 3.600 1.200q4-.3 4.800-4.800z"/>
</g>
<path d="M413.500 7v22" stroke="#e1deda"/><path d="M414.500 7v22" stroke="#f8f8f7"/>
<!-- combo -->
<rect x="419.500" y="7.500" width="172" height="21" rx="3.500" fill="url(#gCombo)" stroke="#b5b0a9"/>
<path d="M582 15.500h5l-2.500-3z M582 20.500h5l-2.500 3z" fill="#55534f"/>
<!-- draft icon -->
<path d="M426.500 11v12" stroke="#8a8a88" stroke-width="1"/>
<path d="M426 24.500h12" stroke="#c9c9c7" stroke-width="1"/>
<path d="M429.500 11.500l8 9h-8z" fill="#e8d23c" stroke="#a58a10" stroke-width=".8"/>
<path d="M425 20.500h13.500v3h-13.500z" fill="#e08a1c" stroke="#9c5a08" stroke-width=".7"/>
<circle cx="426.700" cy="22" r="1.800" fill="#d07a14" stroke="#8a4c04" stroke-width=".6"/>
<!-- whats this -->
<path d="M602 11v13l3-3l2.500 5l2-1l-2.500-5h4.500z" fill="#000"/>
<path d="M610.500 14.500q0-3 3.200-3q3.200 0 3.200 2.800q0 1.700-1.700 2.600q-1.300 .7-1.300 2.300" fill="none" stroke="#10109a" stroke-width="2"/><circle cx="613.700" cy="22" r="1.300" fill="#10109a"/>
<g stroke="#d9d6d2" stroke-width="1"><path d="M631 16.500h5M631 19.500h5M631 22.500h5M775 16.500h5M775 19.500h5M775 22.500h5"/></g>
<circle cx="654.700" cy="18.200" r="6.600" fill="url(#gRed)"/>
<rect x="683" y="13" width="10.500" height="10.500" rx="1" fill="#cfcfce"/><rect x="683" y="18" width="10.500" height="5.500" rx="1" fill="#bdbdbc"/>
<!-- edit macro -->
<path d="M712.500 10.500h18l.8 16.500h-19.600z" fill="#f1f1f0" stroke="#bdbdbb" stroke-width=".8"/><path d="M711.500 27.300h20" stroke="#9b9b99" stroke-width="1.400"/><rect x="713" y="8.300" width="17" height="2.600" rx=".6" fill="#c8b04e" stroke="#9a8430" stroke-width=".6"/><path d="M715 14.500h9M715 17.500h7M715 20.500h4" stroke="#dadad8" stroke-width="1"/><path d="M718.200 22.300l1.800-3.300l9.500-4.300l1.400 2.600l-9.300 4.700z" fill="#e8a33a" stroke="#a86a14" stroke-width=".6"/><path d="M718.200 22.300l1.800-3.300l1.500 2.500z" fill="#3a2a1a"/><path d="M728.700 15l1.300-.6q1-.3 1.500 .7q.4 1-.5 1.500l-1.200 .7z" fill="#e03030"/>
<path d="M748.500 11.500l12 6.700l-12 6.500z" fill="#c9c9c8" stroke="#c0c0bf" stroke-width=".6"/><path d="M748.500 11.500l12 6.700h-12z" fill="#dddddc"/>
<!-- zoom fit -->
<path d="M789.500 8.500h19v19.500h-15.500l-3.500-3.500z" fill="#fff" stroke="#3f7e8e" stroke-width="1.300" stroke-linejoin="round"/><path d="M789.500 24.500h3.500v3.500" fill="none" stroke="#3f7e8e" stroke-width="1"/><path d="M800.500 20.500l4.500 4.800" stroke="#136f88" stroke-width="3.400" stroke-linecap="round"/><circle cx="797" cy="16.300" r="5.300" fill="url(#gTeal)" stroke="#0d6a82" stroke-width=".8"/><circle cx="795.500" cy="14.500" r="2" fill="#7fd0e0" opacity=".7"/>
<!-- draw style -->
<ellipse cx="836" cy="25" rx="7" ry="2.500" fill="#222" opacity=".8"/><path d="M825 16l6-3.500l7.500 1.500v9.500l-6 3l-7.500-2.500z" fill="#38c8d4"/><path d="M825 16l6-3.500l7.500 1.500l-6 3.500z" fill="#a8eef2"/><path d="M832.500 17.500l6-3.500v9.500l-6 3z" fill="#16a0b0"/><path d="M833 17.500l7.500-8" stroke="#f0d020" stroke-width="1.600"/><circle cx="832.500" cy="18.500" r="9.200" fill="none" stroke="#b01414" stroke-width="2"/><path d="M826 25l13-13" stroke="#b01414" stroke-width="2"/>
<path d="M854.300 17h7.800l-3.900 5.300z" fill="#5e5e5c"/>
<path d="M871.500 7v22" stroke="#e1deda"/><path d="M872.500 7v22" stroke="#f8f8f7"/>
<path d="M915.500 7v22" stroke="#e1deda"/><path d="M916.500 7v22" stroke="#f8f8f7"/>
<path d="M1024.500 7v22" stroke="#e1deda"/><path d="M1025.500 7v22" stroke="#f8f8f7"/>
<path d="M1134.500 7v22" stroke="#e1deda"/><path d="M1135.500 7v22" stroke="#f8f8f7"/>
<path d="M892.5 7.5L902.75 9.75L902.25 23.1L897.25 28.75L885 25.6L884 13.75z" fill="#fdfdfd"/>
<path d="M892.5 20L892.5 7.5M892.5 20L885 25.6M892.5 20L902.25 23.1" fill="none" stroke="#4f8e9c" stroke-width=".8" stroke-dasharray="1.5 1"/>
<path d="M892.5 7.5L902.75 9.75L902.25 23.1L897.25 28.75L885 25.6L884 13.75zM884 13.75L897.25 14.75L902.75 9.75M897.25 14.75L897.25 28.75" fill="none" stroke="#3f8596" stroke-width="1.150" stroke-linejoin="round"/>
<path d="M935.5 7.5L945.75 9.75L945.25 23.1L940.25 28.75L928 25.6L927 13.75z" fill="#fdfdfd"/>
<path d="M935.5 20L935.5 7.5M935.5 20L928 25.6M935.5 20L945.25 23.1" fill="none" stroke="#4f8e9c" stroke-width=".8" stroke-dasharray="1.5 1"/>
<path d="M927 13.75L940.25 14.75L940.25 28.75L928 25.6z" fill="url(#gTeal)"/>
<path d="M935.5 7.5L945.75 9.75L945.25 23.1L940.25 28.75L928 25.6L927 13.75zM927 13.75L940.25 14.75L945.75 9.75M940.25 14.75L940.25 28.75" fill="none" stroke="#3f8596" stroke-width="1.150" stroke-linejoin="round"/>
<path d="M968.5 7.5L978.75 9.75L978.25 23.1L973.25 28.75L961 25.6L960 13.75z" fill="#fdfdfd"/>
<path d="M968.5 20L968.5 7.5M968.5 20L961 25.6M968.5 20L978.25 23.1" fill="none" stroke="#4f8e9c" stroke-width=".8" stroke-dasharray="1.5 1"/>
<path d="M968.5 7.5L978.75 9.75L973.25 14.75L960 13.75z" fill="url(#gTeal)"/>
<path d="M968.5 7.5L978.75 9.75L978.25 23.1L973.25 28.75L961 25.6L960 13.75zM960 13.75L973.25 14.75L978.75 9.75M973.25 14.75L973.25 28.75" fill="none" stroke="#3f8596" stroke-width="1.150" stroke-linejoin="round"/>
<path d="M1001.5 7.5L1011.75 9.75L1011.25 23.1L1006.25 28.75L994 25.6L993 13.75z" fill="#fdfdfd"/>
<path d="M1001.5 20L1001.5 7.5M1001.5 20L994 25.6M1001.5 20L1011.25 23.1" fill="none" stroke="#4f8e9c" stroke-width=".8" stroke-dasharray="1.5 1"/>
<path d="M1006.25 14.75L1011.75 9.75L1011.25 23.1L1006.25 28.75z" fill="url(#gTeal)"/>
<path d="M1001.5 7.5L1011.75 9.75L1011.25 23.1L1006.25 28.75L994 25.6L993 13.75zM993 13.75L1006.25 14.75L1011.75 9.75M1006.25 14.75L1006.25 28.75" fill="none" stroke="#3f8596" stroke-width="1.150" stroke-linejoin="round"/>
<path d="M1044.5 7.5L1054.75 9.75L1054.25 23.1L1049.25 28.75L1037 25.6L1036 13.75z" fill="#fdfdfd"/>
<path d="M1044.5 20L1044.5 7.5M1044.5 20L1037 25.6M1044.5 20L1054.25 23.1" fill="none" stroke="#4f8e9c" stroke-width=".8" stroke-dasharray="1.5 1"/>
<path d="M1044.5 7.5L1054.75 9.75L1054.25 23.1L1044.5 20z" fill="url(#gTeal)"/>
<path d="M1044.5 7.5L1054.75 9.75L1054.25 23.1L1049.25 28.75L1037 25.6L1036 13.75zM1036 13.75L1049.25 14.75L1054.75 9.75M1049.25 14.75L1049.25 28.75" fill="none" stroke="#3f8596" stroke-width="1.150" stroke-linejoin="round"/>
<path d="M1077.5 7.5L1087.75 9.75L1087.25 23.1L1082.25 28.75L1070 25.6L1069 13.75z" fill="#fdfdfd"/>
<path d="M1077.5 20L1077.5 7.5M1077.5 20L1070 25.6M1077.5 20L1087.25 23.1" fill="none" stroke="#4f8e9c" stroke-width=".8" stroke-dasharray="1.5 1"/>
<path d="M1070 25.6L1082.25 28.75L1087.25 23.1L1077.5 20z" fill="url(#gTeal)"/>
<path d="M1077.5 7.5L1087.75 9.75L1087.25 23.1L1082.25 28.75L1070 25.6L1069 13.75zM1069 13.75L1082.25 14.75L1087.75 9.75M1082.25 14.75L1082.25 28.75" fill="none" stroke="#3f8596" stroke-width="1.150" stroke-linejoin="round"/>
<path d="M1110.5 7.5L1120.75 9.75L1120.25 23.1L1115.25 28.75L1103 25.6L1102 13.75z" fill="#fdfdfd"/>
<path d="M1110.5 20L1110.5 7.5M1110.5 20L1103 25.6M1110.5 20L1120.25 23.1" fill="none" stroke="#4f8e9c" stroke-width=".8" stroke-dasharray="1.5 1"/>
<path d="M1102 13.75L1110.5 7.5L1110.5 20L1103 25.6z" fill="url(#gTeal)"/>
<path d="M1110.5 7.5L1120.75 9.75L1120.25 23.1L1115.25 28.75L1103 25.6L1102 13.75zM1102 13.75L1115.25 14.75L1120.75 9.75M1115.25 14.75L1115.25 28.75" fill="none" stroke="#3f8596" stroke-width="1.150" stroke-linejoin="round"/>
<!-- ruler -->
<path d="M1146.300 12.500l14.400 14.300l1.100 2.700l-2.500-.3l-13.600-13.700z" fill="#303030" opacity=".9"/>
<path d="M1146.900 12.300l5-4.300l13.300 12.500l-4.500 6.300z" fill="#2a9cc2" stroke="#0f6f8e" stroke-width=".6" stroke-linejoin="round"/>
<path d="M1160.700 26.800l4.500-6.300l.4 2.800l-3.900 5.500z" fill="#1a7898" stroke="#0a4f64" stroke-width=".5"/>
<path d="M1153.200 9.300l-1.700 1.800M1155.100 11.100l-1 1.100M1157 12.900l-1.700 1.800M1158.900 14.700l-1 1.100M1160.800 16.500l-1.700 1.800M1162.700 18.300l-1 1.100" stroke="#083c52" stroke-width=".8"/>
</svg>
<div class="t" style="left:443px;top:10px;font-size:14.3px;color:#3c3c3c">Draft</div>

<svg style="left:0;top:0" width="1200" height="74" viewBox="0 0 1200 74">
<g stroke="#d9d6d2" stroke-width="1"><path d="M3 52.500h5M3 55.500h5M3 58.500h5M281.500 52.500h5M281.500 55.500h5M281.500 58.500h5M755 52.500h5M755 55.500h5M755 58.500h5M1153 52.500h4.500M1153 55.500h4.500M1153 58.500h4.500"/></g>
<rect x="11.5" y="44.5" width="75" height="21" rx="4" fill="url(#gCombo)" stroke="#b5b0a9"/>
<rect x="89.5" y="44.5" width="17.5" height="21" rx="4" fill="url(#gCombo)" stroke="#b5b0a9"/>
<rect x="109.5" y="44.5" width="18.5" height="21" rx="4" fill="url(#gCombo)" stroke="#b5b0a9"/>
<rect x="130" y="44.5" width="18" height="21" rx="4" fill="url(#gCombo)" stroke="#b5b0a9"/>
<rect x="111" y="48" width="15.500" height="14" fill="#000"/>
<rect x="132" y="48" width="14.500" height="14" fill="#c8c8c8"/>
<g fill="none" stroke="#16a0a8" stroke-linejoin="round"><path d="M31.200 50.500l9.300-2.300l-.8 11.300l-9.300 2.500z" stroke-width="2.800"/><path d="M30.500 48v15.500M40.500 47v14.500M29 51l13-3.500M29 62.500l13-3.500" stroke="#2c8f98" stroke-width=".7"/></g>
<path d="M92 57q-1-1.500 1-2.700l5-3q2-1 3 .5q1 1.500-1 2.700l-5 3q-2 1-3-.5z" fill="#12a09a" stroke="#0a6f6a" stroke-width=".6"/><path d="M97.500 55.500q-1-1.500 1-2.700l4.500-2.300l3 .5l-1 2.500l-4.500 2.800q-2 1-3-.8z" fill="#d8f0ea" stroke="#2a8a80" stroke-width=".7"/>
<rect x="150.500" y="46.500" width="42.500" height="17" rx="3" fill="url(#gCombo)" stroke="#b5b0a9"/><path d="M153 47h25.500v16h-25.500q-2 0-2-2v-12q0-2 2-2z" fill="#fff"/><path d="M178.500 47v16" stroke="#d5d2cd"/>
<rect x="196.500" y="46.500" width="56.500" height="17" rx="3" fill="url(#gCombo)" stroke="#b5b0a9"/><path d="M199 47h39v16h-39q-2 0-2-2v-12q0-2 2-2z" fill="#fff"/><path d="M238.500 47v16" stroke="#d5d2cd"/>
<path d="M184 53h4.500l-2.250-2.800z M184 58.500h4.500l-2.250 2.800z M243.500 53h4.500l-2.250-2.800z M243.500 58.500h4.500l-2.250 2.800z" fill="#66645f"/>
<rect x="256.5" y="44.5" width="17.5" height="21" rx="4" fill="url(#gCombo)" stroke="#b5b0a9"/>
<rect x="259.500" y="48" width="4.500" height="14" rx="1" fill="#8a8a88"/><rect x="260" y="48.500" width="3.500" height="3" fill="#e02020"/><rect x="260" y="51.500" width="3.500" height="3" fill="#f0d020"/><rect x="260" y="58" width="3.500" height="3.500" fill="#20c020"/><path d="M260.500 53.500h6v-2.500l5 4.200l-5 4.300v-2.500h-6z" fill="url(#gBl2)" stroke="#103a90" stroke-width=".6"/>
<path d="M295.600 60.700L311 48" fill="none" stroke="#777" stroke-width="3.2" stroke-linecap="round" transform="translate(.7 .8)" opacity=".7"/><path d="M295.600 60.700L311 48" fill="none" stroke="#adadad" stroke-width="3.2" stroke-linecap="round"/><path d="M295.600 60.700L311 48" fill="none" stroke="#fbfbfb" stroke-width="1.8" stroke-linecap="round"/><circle cx="296.5" cy="61.7" r="2.8" fill="#555" opacity=".55"/><circle cx="295.6" cy="60.7" r="2.8" fill="url(#gOr)" stroke="#c07a08" stroke-width=".5"/><circle cx="311.9" cy="49" r="2.8" fill="#555" opacity=".55"/><circle cx="311" cy="48" r="2.8" fill="url(#gOr)" stroke="#c07a08" stroke-width=".5"/>
<path d="M328.700 60.500L333 53L339 60L343.400 48" fill="none" stroke="#777" stroke-width="2.2" stroke-linecap="round" transform="translate(.7 .8)" opacity=".7"/><path d="M328.700 60.500L333 53L339 60L343.400 48" fill="none" stroke="#adadad" stroke-width="2.2" stroke-linecap="round"/><path d="M328.700 60.500L333 53L339 60L343.400 48" fill="none" stroke="#fbfbfb" stroke-width="0.8" stroke-linecap="round"/><circle cx="329.6" cy="61.5" r="2.5" fill="#555" opacity=".55"/><circle cx="328.7" cy="60.5" r="2.5" fill="url(#gOr)" stroke="#c07a08" stroke-width=".5"/><circle cx="333.9" cy="54" r="2.5" fill="#555" opacity=".55"/><circle cx="333" cy="53" r="2.5" fill="url(#gOr)" stroke="#c07a08" stroke-width=".5"/><circle cx="339.9" cy="61" r="2.5" fill="#555" opacity=".55"/><circle cx="339" cy="60" r="2.5" fill="url(#gOr)" stroke="#c07a08" stroke-width=".5"/><circle cx="344.3" cy="49" r="2.5" fill="#555" opacity=".55"/><circle cx="343.4" cy="48" r="2.5" fill="url(#gOr)" stroke="#c07a08" stroke-width=".5"/>
<circle cx="369" cy="55.300" r="8.800" fill="none" stroke="#666" stroke-width="2.600" opacity=".45"/><circle cx="368.400" cy="54.600" r="8.800" fill="none" stroke="#b2b2b2" stroke-width="3"/><circle cx="368.400" cy="54.600" r="8.800" fill="none" stroke="#fafafa" stroke-width="1.700"/><circle cx="369.3" cy="55.8" r="2.5" fill="#555" opacity=".55"/><circle cx="368.4" cy="54.8" r="2.5" fill="url(#gOr)" stroke="#c07a08" stroke-width=".5"/><circle cx="377.9" cy="55.8" r="2.5" fill="#555" opacity=".55"/><circle cx="377" cy="54.8" r="2.5" fill="url(#gOr)" stroke="#c07a08" stroke-width=".5"/>
<path d="M395 48Q406 48.500 409 61" fill="none" stroke="#777" stroke-width="2.6" stroke-linecap="round" transform="translate(.7 .8)" opacity=".7"/><path d="M395 48Q406 48.500 409 61" fill="none" stroke="#adadad" stroke-width="2.6" stroke-linecap="round"/><path d="M395 48Q406 48.500 409 61" fill="none" stroke="#fbfbfb" stroke-width="1.2" stroke-linecap="round"/><circle cx="395.9" cy="49" r="2.5" fill="#555" opacity=".55"/><circle cx="395" cy="48" r="2.5" fill="url(#gOr)" stroke="#c07a08" stroke-width=".5"/><circle cx="395.9" cy="62" r="2.5" fill="#555" opacity=".55"/><circle cx="395" cy="61" r="2.5" fill="url(#gOr)" stroke="#c07a08" stroke-width=".5"/><circle cx="409.9" cy="62" r="2.5" fill="#555" opacity=".55"/><circle cx="409" cy="61" r="2.5" fill="url(#gOr)" stroke="#c07a08" stroke-width=".5"/>
<ellipse cx="436" cy="55.700" rx="9.500" ry="4.300" transform="rotate(-12 436 55.700)" fill="none" stroke="#777" stroke-width="2.200" opacity=".4"/><ellipse cx="435.600" cy="55.100" rx="9.500" ry="4.300" transform="rotate(-12 435.600 55.100)" fill="none" stroke="#b2b2b2" stroke-width="2.600"/><ellipse cx="435.600" cy="55.100" rx="9.500" ry="4.300" transform="rotate(-12 435.600 55.100)" fill="none" stroke="#f6f6f6" stroke-width="1"/><circle cx="427.9" cy="62" r="2.2" fill="#555" opacity=".55"/><circle cx="427" cy="61" r="2.2" fill="url(#gOr)" stroke="#c07a08" stroke-width=".5"/><circle cx="445.3" cy="50.4" r="2.2" fill="#555" opacity=".55"/><circle cx="444.4" cy="49.4" r="2.2" fill="url(#gOr)" stroke="#c07a08" stroke-width=".5"/>
<path d="M471.500 46L461 48.200L460.500 59L470.500 63.500L477 54.500z" fill="none" stroke="#6a6a6a" stroke-width="3" stroke-linejoin="round"/><path d="M471.500 46L461 48.200L460.500 59L470.500 63.500L477 54.500z" fill="none" stroke="#e9e9e9" stroke-width="1.200" stroke-linejoin="round"/><circle cx="468.6" cy="55.5" r="2.6" fill="#555" opacity=".55"/><circle cx="467.7" cy="54.5" r="2.6" fill="url(#gOr)" stroke="#c07a08" stroke-width=".5"/><circle cx="476.4" cy="55.8" r="2.6" fill="#555" opacity=".55"/><circle cx="475.5" cy="54.8" r="2.6" fill="url(#gOr)" stroke="#c07a08" stroke-width=".5"/>
<rect x="494.500" y="49.500" width="15.500" height="12.500" fill="none" stroke="#777" stroke-width="2.600" opacity=".5"/><rect x="494" y="48.700" width="15.500" height="12.500" fill="#ececec" stroke="#9c9c9c" stroke-width="2.600"/><rect x="494" y="48.700" width="15.500" height="12.500" fill="none" stroke="#f3f3f3" stroke-width=".9"/><circle cx="509.9" cy="49.4" r="2.5" fill="#555" opacity=".55"/><circle cx="509" cy="48.4" r="2.5" fill="url(#gOr)" stroke="#c07a08" stroke-width=".5"/><circle cx="494.9" cy="62" r="2.5" fill="#555" opacity=".55"/><circle cx="494" cy="61" r="2.5" fill="url(#gOr)" stroke="#c07a08" stroke-width=".5"/>
<path d="M536 47.300H540.800L543 62H544.600V63.600H538.400V62H539.700L539.300 59.200H533L531.400 62H532.700V63.600H525.300V62H527zM534.300 56.800H538.900L538.100 51z" fill="#2a2a1a" opacity=".75" transform="translate(.8 .8)" fill-rule="evenodd"/><path d="M536 47.300H540.800L543 62H544.600V63.600H538.400V62H539.700L539.300 59.200H533L531.400 62H532.700V63.600H525.300V62H527zM534.300 56.800H538.900L538.100 51z" fill="#f4dc08" stroke="#4a4410" stroke-width=".8" stroke-linejoin="round" fill-rule="evenodd"/>
<text x="560" y="52" font-family="Liberation Sans" font-size="8.500" fill="#d2d2d2" font-weight="bold" textLength="16" lengthAdjust="spacingAndGlyphs">1.02</text><text x="559.600" y="51.600" font-family="Liberation Sans" font-size="8.500" fill="#fbfbfb" font-weight="bold" textLength="16" lengthAdjust="spacingAndGlyphs">1.02</text>
<path d="M560.500 54v8M575 54v8" stroke="#8a8a8a" stroke-width="2"/><path d="M560.500 54h14.500" stroke="#222" stroke-width="1.300"/><circle cx="560.500" cy="54" r="1.700" fill="#111"/><circle cx="575" cy="54" r="1.700" fill="#111"/><circle cx="561.4" cy="63.5" r="2.1" fill="#555" opacity=".55"/><circle cx="560.5" cy="62.5" r="2.1" fill="url(#gOr)" stroke="#c07a08" stroke-width=".5"/><circle cx="575.9" cy="63.5" r="2.1" fill="#555" opacity=".55"/><circle cx="575" cy="62.5" r="2.1" fill="url(#gOr)" stroke="#c07a08" stroke-width=".5"/><circle cx="568.6" cy="54.8" r="2.1" fill="#555" opacity=".55"/><circle cx="567.7" cy="53.8" r="2.1" fill="url(#gOr)" stroke="#c07a08" stroke-width=".5"/>
<path d="M594 58.600Q595 49.500 601 49.500Q607 49.500 607.600 59.700" fill="none" stroke="#444" stroke-width="3.200"/><path d="M594 58.600Q595 49.500 601 49.500Q607 49.500 607.600 59.700" fill="none" stroke="#e4e4e4" stroke-width="1.300"/><circle cx="594.9" cy="59.6" r="2.7" fill="#555" opacity=".55"/><circle cx="594" cy="58.6" r="2.7" fill="url(#gOr)" stroke="#c07a08" stroke-width=".5"/><circle cx="601.9" cy="50.5" r="2.5" fill="#555" opacity=".55"/><circle cx="601" cy="49.5" r="2.5" fill="url(#gOr)" stroke="#c07a08" stroke-width=".5"/><circle cx="608.5" cy="60.7" r="2.7" fill="#555" opacity=".55"/><circle cx="607.6" cy="59.7" r="2.7" fill="url(#gOr)" stroke="#c07a08" stroke-width=".5"/>
<circle cx="634.300" cy="55.400" r="4.800" fill="#666" opacity=".4"/><circle cx="634" cy="55" r="4.600" fill="url(#gOr)" stroke="#c07a08" stroke-width=".6"/>
<text x="656.500" y="63.200" font-family="Liberation Serif" font-style="italic" font-size="25" fill="#5a4c00" textLength="19" lengthAdjust="spacingAndGlyphs" transform="translate(.8 .8)">S</text><text x="656.500" y="63.200" font-family="Liberation Serif" font-style="italic" font-size="25" fill="#f4e010" stroke="#b8a000" stroke-width=".7" paint-order="stroke" textLength="19" lengthAdjust="spacingAndGlyphs">S</text>
<defs><linearGradient id="gFb" x1="0" y1="0" x2="1" y2="0"><stop offset="0" stop-color="#ff9c0c"/><stop offset="1" stop-color="#ffc436"/></linearGradient></defs><path d="M690.600 51.600l10.600-7.200h9.600l-.2 1.200l-8 .8l-10 6v12.800h-2z" fill="#555"/><path d="M692.300 52.300l10-6.200v16.100l-3.800 3h-6.200z" fill="url(#gFb)" stroke="#a86a00" stroke-width=".5"/><path d="M702.800 45.700l8-.7l-8 5.500z" fill="#ffb21e" stroke="#a86a00" stroke-width=".5"/><path d="M703 50.700l7.500-3.200v3.500l-7.500 3.500z" fill="#f6f6f6"/><path d="M703 54.300l7.700-3.500" stroke="#444" stroke-width="1"/><path d="M703 54.800l7.700-3.300v6l-7.700 4.500z" fill="url(#gFb)" stroke="#a86a00" stroke-width=".5"/>
<path d="M727 60L728.700 47M741 60L739.400 47" stroke="#333" stroke-width="1.100"/><path d="M727 60Q728.500 49.500 734 49.500Q739.500 49.500 741 60" fill="none" stroke="#888" stroke-width="2.600"/><path d="M727 60Q728.500 49.500 734 49.500Q739.500 49.500 741 60" fill="none" stroke="#d8d8d8" stroke-width="1"/><rect x="727.200" y="45.600" width="2.900" height="2.900" fill="#f59a0a" stroke="#c07a08" stroke-width=".4"/><rect x="738" y="45.600" width="2.900" height="2.900" fill="#f59a0a" stroke="#c07a08" stroke-width=".4"/><circle cx="727.9" cy="61" r="2.8" fill="#555" opacity=".55"/><circle cx="727" cy="60" r="2.8" fill="url(#gOr)" stroke="#c07a08" stroke-width=".5"/><circle cx="741.9" cy="61" r="2.8" fill="#555" opacity=".55"/><circle cx="741" cy="60" r="2.8" fill="url(#gOr)" stroke="#c07a08" stroke-width=".5"/>
<g transform="translate(779 54.500)"><path id="mv" d="M0-9.700l3.800 4.200h-2.300v4h4v-2.300l4.200 3.800l-4.200 3.800v-2.300h-4v4h2.300l-3.800 4.200l-3.800-4.200h2.300v-4h-4v2.300l-4.200-3.800l4.200-3.800v2.300h4v-4h-2.300z" fill="#444" transform="translate(.6 .8)" opacity=".5"/><path d="M0-9.700l3.800 4.200h-2.300v4h4v-2.300l4.200 3.800l-4.200 3.800v-2.300h-4v4h2.300l-3.800 4.200l-3.800-4.200h2.300v-4h-4v2.300l-4.200-3.800l4.200-3.800v2.300h4v-4h-2.300z" fill="url(#gBl2)" stroke="#1a3c8a" stroke-width=".7"/></g>
<g><path d="M815.300 48.100A8.500 8.500 0 1 1 803.200 55.060L806.900 55.400A4.800 4.800 0 1 0 813.700 51.450zM807.800 47.200l8.200-2.200l-2.600 8.200z" fill="#222" opacity=".55" transform="translate(.8 .9)"/><path d="M815.300 48.100A8.500 8.500 0 1 1 803.200 55.060L806.900 55.400A4.800 4.800 0 1 0 813.700 51.450z" fill="url(#gBl2)" stroke="#143a94" stroke-width=".6"/><path d="M807.800 47.200l8.200-2.200l-2.600 8.200z" fill="#3f86f4" stroke="#143a94" stroke-width=".6" stroke-linejoin="round"/></g>
<defs><linearGradient id="gOff" x1="0" y1="0" x2="1" y2="0"><stop offset="0" stop-color="#0a1a9a"/><stop offset="1" stop-color="#2f7cf0"/></linearGradient></defs><g fill="none" stroke-linejoin="miter" stroke-linecap="butt"><path d="M837.200 50.800L840.300 47.600H852V56.500Q851.500 62.500 844.800 63.300" stroke="#111" stroke-width="3.400" opacity=".5" transform="translate(.7 .8)"/><path d="M837.200 50.800L840.300 47.600H852V56.500Q851.500 62.500 844.800 63.300" stroke="url(#gOff)" stroke-width="3"/><path d="M841.300 55.300L843.300 53H847.300V55.800Q847 58.600 844.300 59.300" stroke="#111" stroke-width="2.600" opacity=".5" transform="translate(.6 .7)"/><path d="M841.300 55.300L843.300 53H847.300V55.800Q847 58.600 844.300 59.300" stroke="url(#gOff)" stroke-width="2.300"/></g>
<path d="M868.300 55.250l5.200-4.900v3.400h4.400v3h-4.400v3.400z" fill="#0c2cc8" stroke="#0a1f8a" stroke-width=".5"/><path d="M888 55.250l-5.200-4.900v3.400h-4.900v3h4.900v3.400z" fill="#3a88f6" stroke="#1446b0" stroke-width=".5"/><path d="M877.900 48v14.500" stroke="#1238b8" stroke-width="2.500"/>
<path d="M911 45.500l9 9.500h-4.500v8.500h-9v-8.500h-4.500z" fill="#333" opacity=".55" transform="translate(1 1)"/><path d="M911 45.500l9 9.500h-4.500v8.500h-9v-8.500h-4.500z" fill="url(#gBl2)" stroke="#0f2f8a" stroke-width=".7"/>
<path d="M944 64l9-9.500h-4.500v-8.500h-9v8.500h-4.500z" fill="#333" opacity=".55" transform="translate(1 1)"/><path d="M944 64l9-9.500h-4.500v-8.500h-9v8.500h-4.500z" fill="url(#gBl2)" stroke="#0f2f8a" stroke-width=".7"/>
<rect x="969" y="47" width="16.500" height="16.500" fill="none" stroke="#2448f0" stroke-width="2" stroke-dasharray="2 1.300"/><rect x="970.300" y="57" width="7" height="5.600" fill="#fff" stroke="#10309a" stroke-width="3.600"/><path d="M978.500 52l3.500-3.500l3 1l-1 3l-3.500 2.500z" fill="#2a62e8" stroke="#10309a" stroke-width=".6"/>
<path d="M1014 45.500l5.500 15l-14 3z" fill="#0c10d8" stroke="#000" stroke-width="1.200" stroke-linejoin="round"/><path d="M1001.500 49.500l4-3.500l9 10.500l-1.500 4l-3.500-1.500z" fill="#3a6ad8" stroke="#0a1a50" stroke-width=".9"/><path d="M1003 48l8.500 10.500M1004.500 47l8.500 10.500" stroke="#8ab0f0" stroke-width=".6"/><path d="M1009.500 59l3.500 1.500l1.500-4z" fill="#f0f0f0"/>
<g fill="none" stroke="#b2b2b0" stroke-width="3.100" stroke-linejoin="round"><path d="M1034.500 51.500l6-4.500l4 5l7-5"/><path d="M1034.500 61q3-3.500 6-1.500q4.500 3 7.500 0q2-2 3.500-1.500"/></g><g fill="none" stroke="#f0f0ef" stroke-width="1"><path d="M1034.500 51.500l6-4.500l4 5l7-5"/><path d="M1034.500 61q3-3.500 6-1.500q4.500 3 7.500 0q2-2 3.500-1.500"/></g><path d="M1039.800 53.500h8l-4 5z" fill="#a2a2a0"/>
<path d="M1076 47.500v8M1072 51.500h8" stroke="#9d9d9b" stroke-width="2.600"/><path d="M1067 60.500h20" stroke="#b9b9b7" stroke-width="2.200"/><path d="M1067 61.500h20" stroke="#8f8f8d" stroke-width=".8"/><circle cx="1076.500" cy="60" r="2.500" fill="#aaa" stroke="#8a8a88" stroke-width=".5"/>
<path d="M1105.500 50h9.500" stroke="#9d9d9b" stroke-width="3"/><path d="M1100 59.500h20" stroke="#b9b9b7" stroke-width="2.200"/><path d="M1100 60.500h20" stroke="#8f8f8d" stroke-width=".8"/><circle cx="1109.800" cy="59" r="2.500" fill="#aaa" stroke="#8a8a88" stroke-width=".5"/>
<path d="M1139.500 53l3 2.500l-3 2.500M1143.500 53l3 2.500l-3 2.500" fill="none" stroke="#111" stroke-width="1.500"/>
<path d="M1186.500 48.500l3 2.500l-3 2.500M1190.500 48.500l3 2.500l-3 2.500" fill="none" stroke="#111" stroke-width="1.500"/>
<rect x="1160.5" y="44.5" width="22" height="21.5" rx="4" fill="url(#gCombo)" stroke="#b5b0a9"/>
<path d="M1168.500 54.500v-2.500q0-3 3-3q3 0 3 3v2.500" fill="none" stroke="#0c7a5c" stroke-width="1.800"/><rect x="1167" y="54" width="9.500" height="7.800" rx=".8" fill="#169a76" stroke="#0a6a4e" stroke-width=".6"/><rect x="1168.500" y="54.500" width="2.500" height="7" fill="#7fd6bc" opacity=".7"/>
</svg>
<div class="t" style="left:45px;top:47px;font-size:15px;color:#3c3c3c">Top</div>
<div class="t" style="left:154.500px;top:47px;font-size:14.3px;letter-spacing:-.5px;color:#3c3c3c">2px</div>
<div class="t" style="left:201px;top:47px;font-size:14.3px;letter-spacing:-.6px;color:#3c3c3c">0,20</div>


<!-- ===== left panel ===== -->
<div class="t" style="left:2px;top:77px;font-size:14.3px;letter-spacing:-.35px">Combo View</div>
<!-- float / close buttons -->
<svg style="left:263px;top:79px" width="12" height="12" viewBox="0 0 12 12"><rect x=".5" y=".5" width="11" height="11" rx="2.5" fill="#fafafa" stroke="#6f6d69"/><rect x="5" y="2.8" width="4.2" height="4.2" rx="1" fill="none" stroke="#55534f" stroke-width="1"/><rect x="2.8" y="5" width="4.2" height="4.2" rx="1" fill="#fafafa" stroke="#55534f" stroke-width="1"/></svg>
<svg style="left:279px;top:79px" width="12" height="12" viewBox="0 0 12 12"><rect x=".5" y=".5" width="11" height="11" rx="2.5" fill="#fafafa" stroke="#6f6d69"/><path d="M3.2 3.2L8.8 8.8M8.8 3.2L3.2 8.8" stroke="#4a4845" stroke-width="2"/></svg>
<!-- tabs -->
<div class="abs" style="left:53px;top:99px;width:48px;height:25px;border:1px solid #c2beb7;border-bottom:none;border-radius:4px 4px 0 0;background:linear-gradient(#f0efed,#dedcd8)"></div>
<div class="t" style="left:61px;top:103px;font-size:14.3px;letter-spacing:-.7px">Tasks</div>
<!-- pane frame -->
<div class="abs" style="left:1px;top:96px;width:53px;height:29px;border:1px solid #b9b4ad;border-bottom:none;border-radius:5px 5px 0 0;background:#f2f1f0"></div>
<div class="t" style="left:7.500px;top:102px;font-size:14.3px">Model</div>
<!-- tree -->
<div class="abs" style="left:2px;top:124px;width:289px;height:242px;border:1px solid #aca7a0;border-radius:3px;background:#fff;box-shadow:1px 0 0 #dcd9d5"></div>
<div class="abs" style="left:3px;top:125px;width:287px;height:24px;background:#f2f1f0"></div>
<div class="abs" style="left:3px;top:125px;width:184px;height:24px;background:linear-gradient(#fefefe,#ebe9e7);border-right:1px solid #c4c0ba;border-bottom:1px solid #c4c0ba"></div>
<div class="t" style="left:6.500px;top:129px;font-size:14.3px;letter-spacing:-.12px">Labels &amp; Attributes</div>
<div class="t" style="left:6px;top:150px;font-size:14.3px">Application</div>
<div class="tri" style="left:11px;top:172px"></div>
<div class="t" style="left:44px;top:167px;font-size:13.7px;font-weight:bold;letter-spacing:-.45px;color:#2f2f2f">Unnamed</div>
<div class="tri" style="left:29px;top:189px"></div>
<svg style="left:43px;top:185px" width="14" height="14" viewBox="0 0 14 14"><ellipse cx="8" cy="12.500" rx="5.500" ry="1.200" fill="#555" opacity=".5"/><path d="M.6 8.500l3.500-2h5.500l3 2v3.200l-3.500 1.500h-5.500l-3-1.500z" fill="#3f62d0"/><path d="M.6 8.500l3.500-2h5.500l3 2l-3.500 1.400h-5.500z" fill="#7f9ef0"/><path d="M.6 8.500l3 1.400h5.500v3.300h-5.500l-3-1.500z" fill="#5a7ee4"/><path d="M6.800 .3l3.600 3.400h-2v4h-3.200v-4h-2z" fill="#1f49c8" stroke="#12307f" stroke-width=".5"/></svg>
<div class="t" style="left:62px;top:185px;font-size:14.3px;letter-spacing:-.15px;color:#2f2f2f">Extrude</div>
<svg style="left:62.500px;top:201.5px" width="11" height="16" viewBox="0 0 11 16"><ellipse cx="5.500" cy="8" rx="5" ry="7.300" fill="#a7a7a7"/><ellipse cx="5.500" cy="8" rx="3.600" ry="5.700" fill="#c6c6c6"/><ellipse cx="5.300" cy="7.800" rx="2.200" ry="3.600" fill="#f1f1f1"/><path d="M6.700 6.500q-1.500-1.500-2.300 .3q-.6 2 .2 3.300q1 1 2-.2v-1.500h-1.200" fill="none" stroke="#9a9a9a" stroke-width=".8"/></svg>
<div class="t gray" style="left:81px;top:202px;font-size:14.3px;letter-spacing:-.3px">InvoluteGear</div>
<div class="tri" style="left:29px;top:224px"></div>
<svg style="left:43px;top:220px" width="14" height="14" viewBox="0 0 14 14"><ellipse cx="8" cy="12.500" rx="5.500" ry="1.200" fill="#555" opacity=".5"/><path d="M.6 8.500l3.500-2h5.500l3 2v3.200l-3.500 1.500h-5.500l-3-1.500z" fill="#3f62d0"/><path d="M.6 8.500l3.500-2h5.500l3 2l-3.500 1.400h-5.500z" fill="#7f9ef0"/><path d="M.6 8.500l3 1.400h5.500v3.300h-5.500l-3-1.500z" fill="#5a7ee4"/><path d="M6.800 .3l3.600 3.400h-2v4h-3.200v-4h-2z" fill="#1f49c8" stroke="#12307f" stroke-width=".5"/></svg>
<div class="t" style="left:62px;top:220px;font-size:14.3px;letter-spacing:-.15px;color:#2f2f2f">Extrude<span style="letter-spacing:-.95px">001</span></div>
<svg style="left:62.500px;top:236.5px" width="11" height="16" viewBox="0 0 11 16"><ellipse cx="5.500" cy="8" rx="5" ry="7.300" fill="#a7a7a7"/><ellipse cx="5.500" cy="8" rx="3.600" ry="5.700" fill="#c6c6c6"/><ellipse cx="5.300" cy="7.800" rx="2.200" ry="3.600" fill="#f1f1f1"/><path d="M6.700 6.500q-1.500-1.500-2.300 .3q-.6 2 .2 3.300q1 1 2-.2v-1.500h-1.200" fill="none" stroke="#9a9a9a" stroke-width=".8"/></svg>
<div class="t gray" style="left:81px;top:237px;font-size:14.3px;letter-spacing:-.3px">InvoluteGear<span style="letter-spacing:-.85px">001</span></div>
<div class="tri" style="left:29px;top:259px"></div>
<svg style="left:43px;top:255px" width="14" height="14" viewBox="0 0 14 14"><ellipse cx="8" cy="12.500" rx="5.500" ry="1.200" fill="#555" opacity=".5"/><path d="M.6 8.500l3.500-2h5.500l3 2v3.200l-3.500 1.500h-5.500l-3-1.500z" fill="#3f62d0"/><path d="M.6 8.500l3.500-2h5.500l3 2l-3.500 1.400h-5.500z" fill="#7f9ef0"/><path d="M.6 8.500l3 1.400h5.500v3.300h-5.500l-3-1.500z" fill="#5a7ee4"/><path d="M6.800 .3l3.600 3.400h-2v4h-3.200v-4h-2z" fill="#1f49c8" stroke="#12307f" stroke-width=".5"/></svg>
<div class="t" style="left:62px;top:255px;font-size:14.3px;letter-spacing:-.15px;color:#2f2f2f">Extrude<span style="letter-spacing:-.95px">002</span></div>
<svg style="left:62.500px;top:271.5px" width="11" height="16" viewBox="0 0 11 16"><ellipse cx="5.500" cy="8" rx="5" ry="7.300" fill="#a7a7a7"/><ellipse cx="5.500" cy="8" rx="3.600" ry="5.700" fill="#c6c6c6"/><ellipse cx="5.300" cy="7.800" rx="2.200" ry="3.600" fill="#f1f1f1"/><path d="M6.700 6.500q-1.500-1.500-2.300 .3q-.6 2 .2 3.300q1 1 2-.2v-1.500h-1.200" fill="none" stroke="#9a9a9a" stroke-width=".8"/></svg>
<div class="t gray" style="left:81px;top:272px;font-size:14.3px;letter-spacing:-.3px">InvoluteGear<span style="letter-spacing:-.85px">002</span></div>
<div class="tri" style="left:29px;top:294px"></div>
<svg style="left:43px;top:290px" width="14" height="14" viewBox="0 0 14 14"><ellipse cx="8" cy="12.500" rx="5.500" ry="1.200" fill="#555" opacity=".5"/><path d="M.6 8.500l3.500-2h5.500l3 2v3.200l-3.500 1.500h-5.500l-3-1.500z" fill="#3f62d0"/><path d="M.6 8.500l3.500-2h5.500l3 2l-3.500 1.400h-5.500z" fill="#7f9ef0"/><path d="M.6 8.500l3 1.400h5.500v3.300h-5.500l-3-1.500z" fill="#5a7ee4"/><path d="M6.800 .3l3.600 3.400h-2v4h-3.200v-4h-2z" fill="#1f49c8" stroke="#12307f" stroke-width=".5"/></svg>
<div class="t" style="left:62px;top:290px;font-size:14.3px;letter-spacing:-.15px;color:#2f2f2f">Extrude<span style="letter-spacing:-.95px">003</span></div>
<svg style="left:62.500px;top:306.5px" width="11" height="16" viewBox="0 0 11 16"><ellipse cx="5.500" cy="8" rx="5" ry="7.300" fill="#a7a7a7"/><ellipse cx="5.500" cy="8" rx="3.600" ry="5.700" fill="#c6c6c6"/><ellipse cx="5.300" cy="7.800" rx="2.200" ry="3.600" fill="#f1f1f1"/><path d="M6.700 6.500q-1.500-1.500-2.300 .3q-.6 2 .2 3.300q1 1 2-.2v-1.500h-1.200" fill="none" stroke="#9a9a9a" stroke-width=".8"/></svg>
<div class="t gray" style="left:81px;top:307px;font-size:14.3px;letter-spacing:-.3px">InvoluteGear<span style="letter-spacing:-.85px">003</span></div>
<div class="tri" style="left:29px;top:329px"></div>
<svg style="left:43px;top:325px" width="14" height="14" viewBox="0 0 14 14"><ellipse cx="8" cy="12.500" rx="5.500" ry="1.200" fill="#555" opacity=".5"/><path d="M.6 8.500l3.500-2h5.500l3 2v3.200l-3.500 1.500h-5.500l-3-1.500z" fill="#3f62d0"/><path d="M.6 8.500l3.500-2h5.500l3 2l-3.500 1.400h-5.500z" fill="#7f9ef0"/><path d="M.6 8.500l3 1.400h5.500v3.300h-5.500l-3-1.500z" fill="#5a7ee4"/><path d="M6.800 .3l3.600 3.400h-2v4h-3.200v-4h-2z" fill="#1f49c8" stroke="#12307f" stroke-width=".5"/></svg>
<div class="t" style="left:62px;top:325px;font-size:14.3px;letter-spacing:-.15px;color:#2f2f2f">Extrude<span style="letter-spacing:-.95px">004</span></div>
<svg style="left:62.500px;top:341.5px" width="11" height="16" viewBox="0 0 11 16"><ellipse cx="5.500" cy="8" rx="5" ry="7.300" fill="#a7a7a7"/><ellipse cx="5.500" cy="8" rx="3.600" ry="5.700" fill="#c6c6c6"/><ellipse cx="5.300" cy="7.800" rx="2.200" ry="3.600" fill="#f1f1f1"/><path d="M6.700 6.500q-1.500-1.500-2.300 .3q-.6 2 .2 3.300q1 1 2-.2v-1.500h-1.200" fill="none" stroke="#9a9a9a" stroke-width=".8"/></svg>
<div class="t gray" style="left:81px;top:342px;font-size:14.3px;letter-spacing:-.3px">InvoluteGear<span style="letter-spacing:-.85px">004</span></div>
<svg style="left:25px;top:167px" width="13" height="14" viewBox="0 0 13 14"><rect x=".5" y=".5" width="11.500" height="13" fill="#ececec" stroke="#d0d0d0"/><path d="M.5 13.500h11.500" stroke="#b5b5b5"/><path d="M5 6q0-3.300 3-3.300q3 0 3 3.300v1h-6z" fill="#e02828"/><path d="M2.500 7l1.500-1.200h4.500l-1 1.200v4.500h-5z" fill="#2a4cc8"/><path d="M2.500 7l1.500-1.200h4.500l-1 1.200z" fill="#6f8df0"/><path d="M7.500 7l1-1.200v4.500l-1 1.200z" fill="#1a2f90"/></svg>

<div class="abs" style="left:60px;top:324px;width:127px;height:18px;border:1px dotted #8a8a8a"></div>
<!-- splitter grip -->
<div class="abs" style="left:143px;top:367px;width:6px;height:3px;background:repeating-linear-gradient(90deg,#c9c6c1 0,#c9c6c1 1px,#f2f1f0 1px,#f2f1f0 2px)"></div>
<!-- property panel -->
<div class="abs" style="left:2px;top:371px;width:289px;height:286px;border:1px solid #bcb8b1;border-radius:3px;background:#f4f4f3"></div>
<div class="abs" style="left:4px;top:373px;width:286px;height:254px;border:1px solid #b5b1aa;border-radius:2px;background:#fff"></div>
<div class="abs" style="left:5px;top:374px;width:284px;height:23px;background:linear-gradient(#fefefe,#ebe9e7);border-bottom:1px solid #c4c0ba"></div>
<div class="abs" style="left:96px;top:374px;width:1px;height:22px;background:#c9c5bf"></div>
<div class="t" style="left:8px;top:378px;font-size:14.3px">Property</div>
<div class="t" style="left:100px;top:378px;font-size:14.3px">Value</div>
<!-- view/data tabs -->
<svg style="left:0;top:626px" width="100" height="30" viewBox="0 0 100 30"><path d="M2.5 1.5 L9 22 Q10.5 27.5 16 27.5 L32 27.5 Q37.5 27.5 39 22 L47 1.5" fill="#f0efee" stroke="#6a6864" stroke-width="1"/><path d="M47.5 .5 L55 23 Q56.5 28.5 62 28.5 L76 28.5 Q81.500 28.500 83 23 L90.500 .5 Z" fill="#fff" stroke="none"/><path d="M47.5 .5 L55 23 Q56.5 28.5 62 28.5 L76 28.5 Q81.500 28.500 83 23 L90.500 .5" fill="none" stroke="#6a6864" stroke-width="1"/></svg>
<div class="t" style="left:10px;top:631px;font-size:14.3px">View</div>
<div class="t" style="left:55px;top:632px;font-size:14.3px;letter-spacing:-.5px">Data</div>
<div class="t" style="left:6px;top:662px;font-size:14.3px">Valid</div>


<!-- ===== bottom ===== -->
<div class="abs" style="left:298px;top:626px;width:143px;height:30px;border:1px solid #c3bfb8;border-top:none;border-radius:0 0 4px 4px;background:linear-gradient(#f7f7f6,#fbfbfb)"></div>
<svg style="left:304px;top:633px" width="15" height="15" viewBox="0 0 15 15"><path d="M1 1h6.500v2.600h-3.500v2.200h2.500v2.400h-2.500v4.300h-3z" fill="#e8381a" stroke="#b02410" stroke-width=".4"/><g transform="translate(9.300 8.700)"><path d="M-1-5.200h2l.3 1.300l1.200 .5l1.100-.7l1.400 1.400l-.7 1.100l.5 1.200l1.300 .3v2l-1.300 .3l-.5 1.200l.7 1.100l-1.400 1.400l-1.100-.7l-1.200 .5l-.3 1.300h-2l-.3-1.300l-1.200-.5l-1.100 .7l-1.400-1.400l.7-1.100l-.5-1.200l-1.300-.3v-2l1.300-.3l.5-1.200l-.7-1.100l1.400-1.400l1.100 .7l1.200-.5z" fill="#1a3fa0" transform="scale(.8)"/><circle r="1.400" fill="#fff"/></g></svg>
<div class="t" style="left:326.500px;top:633px;font-size:14.3px;letter-spacing:-.5px">Unnamed : 1*</div>
<svg style="left:419px;top:636px" width="12" height="12" viewBox="0 0 12 12"><path d="M2 2L10 10M10 2L2 10" stroke="#555" stroke-width="3.200"/></svg>
<div class="abs" style="left:0;top:656px;width:1196px;height:1px;background:#dedbd7"></div>
<div class="t" style="right:5.500px;top:663px;font-size:13.6px;letter-spacing:-.18px">527.49 x 324.48 mm</div>


<div class="abs" style="left:1195px;top:0;width:1px;height:73px;background:#fdfdfd"></div>
<div class="abs" style="left:1195px;top:626px;width:1px;height:58px;background:#fdfdfd"></div>
<div id="rblack"></div>
</body>
</html>
